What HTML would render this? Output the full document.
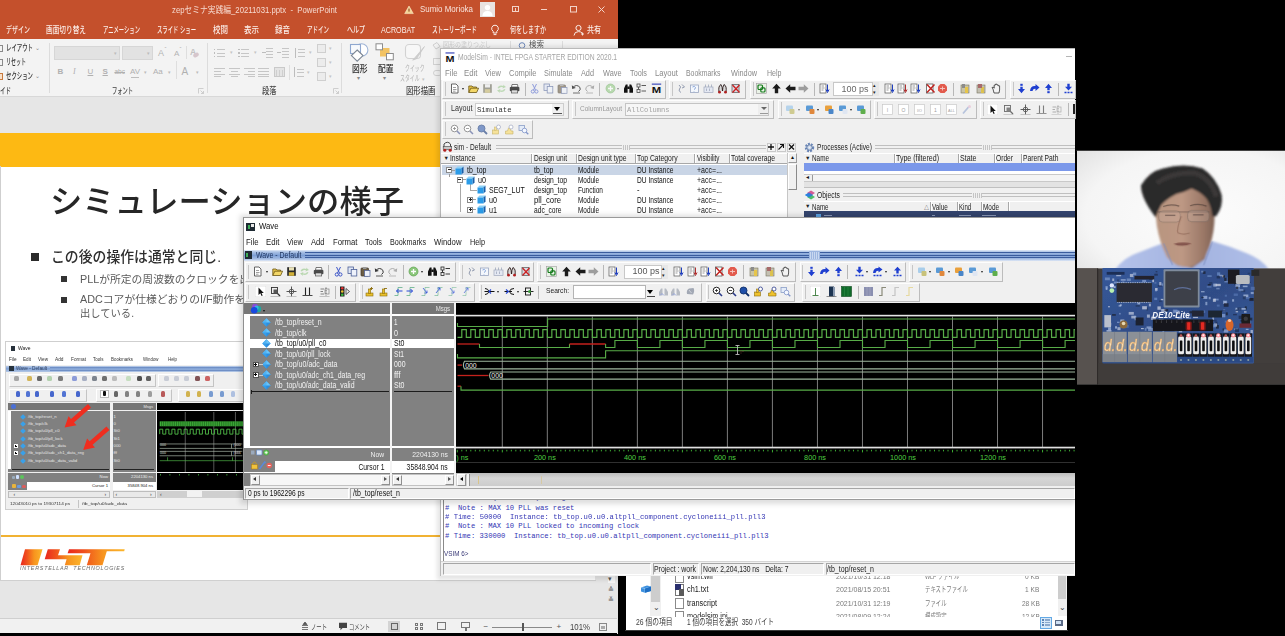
<!DOCTYPE html>
<html lang="ja"><head><meta charset="utf-8"><title>ModelSim simulation</title>
<style>
html,body{margin:0;padding:0;background:#000;}
body{width:1285px;height:636px;overflow:hidden;position:relative;font-family:"Liberation Sans","Noto Sans CJK JP",sans-serif;}
#root{position:absolute;left:0;top:0;width:1285px;height:636px;overflow:hidden;background:#000;filter:blur(0.45px);}
#root div,#root span.t,#root svg{position:absolute;}
span.t{white-space:pre;display:block;}
</style></head>
<body><div id="root">
<div style="left:0px;top:0px;width:617.5px;height:634px;background:#e6e6e6;"></div>
<div style="left:0px;top:0px;width:617.5px;height:39px;background:#c4502c;"></div>
<span class="t" style="top:4.65px;font-size:9px;line-height:11.7px;color:#f6d9cf;font-family:'Liberation Sans','Noto Sans CJK JP',sans-serif;left:172px;transform-origin:0 50%;transform:scaleX(0.8619);">zepセミナ実践編_20211031.pptx  -  PowerPoint</span>
<span class="t" style="top:4.15px;font-size:9px;line-height:11.7px;color:#f8e3db;font-family:'Liberation Sans','Noto Sans CJK JP',sans-serif;left:420px;transform-origin:0 50%;transform:scaleX(0.8829);">Sumio Morioka</span>
<svg style="left:404px;top:5px" width="10" height="10" viewBox="0 0 10 10"><path d="M5 1 L9.3 8.6 L0.7 8.6 Z" fill="#f5d596" stroke="#fbe9c8" stroke-width="0.6"/><rect x="4.5" y="3.6" width="1" height="3" fill="#7a3a16"/></svg>
<div style="left:480px;top:2px;width:15px;height:15px;background:#e9e3e1;"></div>
<svg style="left:480px;top:2px" width="15" height="15" viewBox="0 0 15 15"><circle cx="7.5" cy="5.6" r="2.7" fill="#fff"/><path d="M2.4 14 Q2.6 9 7.5 9 Q12.4 9 12.6 14 Z" fill="#fff"/></svg>
<svg style="left:508px;top:3px" width="104" height="14" viewBox="0 0 104 14"><g fill="none" stroke="#f3d3c8" stroke-width="1"><rect x="4.5" y="3.5" width="6" height="5"/><line x1="7.5" y1="5" x2="7.5" y2="8"/><line x1="33" y1="6.5" x2="39" y2="6.5"/><rect x="62.5" y="3.5" width="6" height="5.5"/><path d="M90.5 3.5 L96.5 9.5 M96.5 3.5 L90.5 9.5"/></g></svg>
<span class="t" style="top:25.28px;font-size:8.8px;line-height:11.44px;color:#fbeee9;font-family:'Liberation Sans','Noto Sans CJK JP',sans-serif;font-weight:500;left:5.8px;transform-origin:0 50%;transform:scaleX(0.6818);">デザイン</span>
<span class="t" style="top:25.28px;font-size:8.8px;line-height:11.44px;color:#fbeee9;font-family:'Liberation Sans','Noto Sans CJK JP',sans-serif;font-weight:500;left:45.8px;transform-origin:0 50%;transform:scaleX(0.7576);">画面切り替え</span>
<span class="t" style="top:25.28px;font-size:8.8px;line-height:11.44px;color:#fbeee9;font-family:'Liberation Sans','Noto Sans CJK JP',sans-serif;font-weight:500;left:102.8px;transform-origin:0 50%;transform:scaleX(0.6042);">アニメーション</span>
<span class="t" style="top:25.28px;font-size:8.8px;line-height:11.44px;color:#fbeee9;font-family:'Liberation Sans','Noto Sans CJK JP',sans-serif;font-weight:500;left:156.8px;transform-origin:0 50%;transform:scaleX(0.6091);">スライド ショー</span>
<span class="t" style="top:25.28px;font-size:8.8px;line-height:11.44px;color:#fbeee9;font-family:'Liberation Sans','Noto Sans CJK JP',sans-serif;font-weight:500;left:212.8px;transform-origin:0 50%;transform:scaleX(0.8518);">校閲</span>
<span class="t" style="top:25.28px;font-size:8.8px;line-height:11.44px;color:#fbeee9;font-family:'Liberation Sans','Noto Sans CJK JP',sans-serif;font-weight:500;left:243.8px;transform-origin:0 50%;transform:scaleX(0.8518);">表示</span>
<span class="t" style="top:25.28px;font-size:8.8px;line-height:11.44px;color:#fbeee9;font-family:'Liberation Sans','Noto Sans CJK JP',sans-serif;font-weight:500;left:274.8px;transform-origin:0 50%;transform:scaleX(0.8518);">録音</span>
<span class="t" style="top:25.28px;font-size:8.8px;line-height:11.44px;color:#fbeee9;font-family:'Liberation Sans','Noto Sans CJK JP',sans-serif;font-weight:500;left:306.8px;transform-origin:0 50%;transform:scaleX(0.6249);">アドイン</span>
<span class="t" style="top:25.28px;font-size:8.8px;line-height:11.44px;color:#fbeee9;font-family:'Liberation Sans','Noto Sans CJK JP',sans-serif;font-weight:500;left:346.8px;transform-origin:0 50%;transform:scaleX(0.6817);">ヘルプ</span>
<span class="t" style="top:25.28px;font-size:8.8px;line-height:11.44px;color:#fbeee9;font-family:'Liberation Sans','Noto Sans CJK JP',sans-serif;font-weight:500;left:380.8px;transform-origin:0 50%;transform:scaleX(0.8119);">ACROBAT</span>
<span class="t" style="top:25.28px;font-size:8.8px;line-height:11.44px;color:#fbeee9;font-family:'Liberation Sans','Noto Sans CJK JP',sans-serif;font-weight:500;left:431.8px;transform-origin:0 50%;transform:scaleX(0.6393);">ストーリーボード</span>
<span class="t" style="top:25.28px;font-size:8.8px;line-height:11.44px;color:#fbeee9;font-family:'Liberation Sans','Noto Sans CJK JP',sans-serif;font-weight:500;left:509.8px;transform-origin:0 50%;transform:scaleX(0.6819);">何をしますか</span>
<span class="t" style="top:25.28px;font-size:8.8px;line-height:11.44px;color:#fbeee9;font-family:'Liberation Sans','Noto Sans CJK JP',sans-serif;font-weight:500;left:586.8px;transform-origin:0 50%;transform:scaleX(0.7950);">共有</span>
<svg style="left:490px;top:24px" width="10" height="13" viewBox="0 0 10 13"><path d="M5 1.2 A3.3 3.3 0 0 1 6.8 7.3 L6.8 9 L3.2 9 L3.2 7.3 A3.3 3.3 0 0 1 5 1.2 Z M3.6 10.6 L6.4 10.6" fill="none" stroke="#fbeee9" stroke-width="1"/></svg>
<svg style="left:573px;top:24px" width="12" height="13" viewBox="0 0 12 13"><circle cx="5.5" cy="4" r="2.6" fill="none" stroke="#fbeee9" stroke-width="1"/><path d="M1 11.5 Q1.4 7.6 5.5 7.6 Q8 7.6 9 9" fill="none" stroke="#fbeee9" stroke-width="1"/><path d="M9.5 8.5 v3 M8 10 h3" stroke="#fbeee9" stroke-width="0.9"/></svg>
<div style="left:0px;top:39px;width:617.5px;height:58px;background:#f3f3f3;"></div>
<div style="left:0px;top:96px;width:617px;height:1px;background:#d8d8d8;"></div>
<div style="left:49px;top:43px;width:1px;height:50px;background:#dcdcdc;"></div>
<div style="left:207px;top:43px;width:1px;height:50px;background:#dcdcdc;"></div>
<div style="left:341px;top:43px;width:1px;height:50px;background:#dcdcdc;"></div>
<div style="left:0px;top:45px;width:3px;height:7px;background:#f3f3f3;border:1px solid #8a8a8a;box-sizing:border-box;border-left:none;"></div>
<div style="left:0px;top:59px;width:3px;height:7px;background:#f3f3f3;border:1px solid #8a8a8a;box-sizing:border-box;border-left:none;"></div>
<div style="left:0px;top:73px;width:3px;height:7px;background:#f8e0c8;border:1px solid #c8783c;box-sizing:border-box;border-left:none;"></div>
<span class="t" style="top:43.18px;font-size:8.8px;line-height:11.44px;color:#333;font-family:'Liberation Sans','Noto Sans CJK JP',sans-serif;font-weight:500;left:5.5px;transform-origin:0 50%;transform:scaleX(0.6136);">レイアウト</span>
<span class="t" style="top:45.0px;font-size:6px;line-height:7.8px;color:#888;font-family:'Liberation Sans','Noto Sans CJK JP',sans-serif;left:35px;transform-origin:0 50%;">⌄</span>
<span class="t" style="top:57.18px;font-size:8.8px;line-height:11.44px;color:#333;font-family:'Liberation Sans','Noto Sans CJK JP',sans-serif;font-weight:500;left:5.5px;transform-origin:0 50%;transform:scaleX(0.5681);">リセット</span>
<span class="t" style="top:71.18px;font-size:8.8px;line-height:11.44px;color:#333;font-family:'Liberation Sans','Noto Sans CJK JP',sans-serif;font-weight:500;left:5.5px;transform-origin:0 50%;transform:scaleX(0.6136);">セクション</span>
<span class="t" style="top:73.0px;font-size:6px;line-height:7.8px;color:#888;font-family:'Liberation Sans','Noto Sans CJK JP',sans-serif;left:35px;transform-origin:0 50%;">⌄</span>
<span class="t" style="top:85.78px;font-size:8.8px;line-height:11.44px;color:#444;font-family:'Liberation Sans','Noto Sans CJK JP',sans-serif;font-weight:500;left:0px;transform-origin:0 50%;transform:scaleX(0.6247);">イド</span>
<div style="left:54px;top:46px;width:66px;height:13.5px;background:#e2e2e2;border:1px solid #d6d6d6;box-sizing:border-box;"></div>
<div style="left:122px;top:46px;width:31px;height:13.5px;background:#e2e2e2;border:1px solid #d6d6d6;box-sizing:border-box;"></div>
<span class="t" style="top:49.75px;font-size:5px;line-height:6.5px;color:#bbb;font-family:'Liberation Sans','Noto Sans CJK JP',sans-serif;left:113.5px;transform-origin:0 50%;">▾</span>
<span class="t" style="top:49.75px;font-size:5px;line-height:6.5px;color:#bbb;font-family:'Liberation Sans','Noto Sans CJK JP',sans-serif;left:146.5px;transform-origin:0 50%;">▾</span>
<span class="t" style="top:47.65px;font-size:9px;line-height:11.7px;color:#b4b4b4;font-family:'Liberation Sans','Noto Sans CJK JP',sans-serif;left:158px;transform-origin:0 50%;">A</span>
<span class="t" style="top:46.1px;font-size:6px;line-height:7.8px;color:#b4b4b4;font-family:'Liberation Sans','Noto Sans CJK JP',sans-serif;left:164.5px;transform-origin:0 50%;">ˆ</span>
<span class="t" style="top:48.8px;font-size:8px;line-height:10.4px;color:#b4b4b4;font-family:'Liberation Sans','Noto Sans CJK JP',sans-serif;left:174px;transform-origin:0 50%;">A</span>
<span class="t" style="top:46.1px;font-size:6px;line-height:7.8px;color:#b4b4b4;font-family:'Liberation Sans','Noto Sans CJK JP',sans-serif;left:179.5px;transform-origin:0 50%;">ˇ</span>
<div style="left:186px;top:46px;width:1px;height:13px;background:#dedede;"></div>
<span class="t" style="top:47.48px;font-size:8.5px;line-height:11.05px;color:#c2c2c2;font-family:'Liberation Sans','Noto Sans CJK JP',sans-serif;font-weight:700;left:190px;transform-origin:0 50%;">A</span>
<div style="left:193px;top:53px;width:6px;height:4px;background:#d6c6cc;border-radius:2px;transform:rotate(-30deg);"></div>
<span class="t" style="top:66.8px;font-size:8px;line-height:10.4px;color:#b0b0b0;font-family:'Liberation Sans','Noto Sans CJK JP',sans-serif;left:57.5px;transform-origin:0 50%;font-weight:700;">B</span>
<span class="t" style="top:66.8px;font-size:8px;line-height:10.4px;color:#b0b0b0;font-family:'Liberation Sans','Noto Sans CJK JP',sans-serif;left:73px;transform-origin:0 50%;font-style:italic;font-family:'Liberation Serif',serif;">I</span>
<span class="t" style="top:66.8px;font-size:8px;line-height:10.4px;color:#b0b0b0;font-family:'Liberation Sans','Noto Sans CJK JP',sans-serif;left:87.5px;transform-origin:0 50%;text-decoration:underline;">U</span>
<span class="t" style="top:66.8px;font-size:8px;line-height:10.4px;color:#b0b0b0;font-family:'Liberation Sans','Noto Sans CJK JP',sans-serif;left:102.5px;transform-origin:0 50%;text-decoration:underline;font-weight:700;">S</span>
<span class="t" style="top:66.8px;font-size:8px;line-height:10.4px;color:#b0b0b0;font-family:'Liberation Sans','Noto Sans CJK JP',sans-serif;left:114.5px;transform-origin:0 50%;text-decoration:line-through;font-size:6.5px;">abc</span>
<span class="t" style="top:66.8px;font-size:8px;line-height:10.4px;color:#b0b0b0;font-family:'Liberation Sans','Noto Sans CJK JP',sans-serif;left:130px;transform-origin:0 50%;">AV</span>
<span class="t" style="top:66.8px;font-size:8px;line-height:10.4px;color:#b0b0b0;font-family:'Liberation Sans','Noto Sans CJK JP',sans-serif;left:153px;transform-origin:0 50%;">Aa</span>
<span class="t" style="top:66.8px;font-size:8px;line-height:10.4px;color:#b0b0b0;font-family:'Liberation Sans','Noto Sans CJK JP',sans-serif;left:181.5px;transform-origin:0 50%;font-size:10px;">A</span>
<span class="t" style="top:68.75px;font-size:5px;line-height:6.5px;color:#bbb;font-family:'Liberation Sans','Noto Sans CJK JP',sans-serif;left:143.5px;transform-origin:0 50%;">▾</span>
<span class="t" style="top:68.75px;font-size:5px;line-height:6.5px;color:#bbb;font-family:'Liberation Sans','Noto Sans CJK JP',sans-serif;left:167.5px;transform-origin:0 50%;">▾</span>
<span class="t" style="top:68.75px;font-size:5px;line-height:6.5px;color:#bbb;font-family:'Liberation Sans','Noto Sans CJK JP',sans-serif;left:195.5px;transform-origin:0 50%;">▾</span>
<div style="left:131px;top:76.5px;width:8px;height:1px;background:#bdbdbd;"></div>
<div style="left:176px;top:61px;width:1px;height:18px;background:#dedede;"></div>
<span class="t" style="top:86.08px;font-size:8.8px;line-height:11.44px;color:#444;font-family:'Liberation Sans','Noto Sans CJK JP',sans-serif;font-weight:500;left:112px;transform-origin:0 50%;transform:scaleX(0.5965);">フォント</span>
<svg style="left:198px;top:88px" width="6" height="6" viewBox="0 0 6 6"><path d="M0.5 0.5 H5.5 M0.5 0.5 V5.5 M2.5 2.5 L5.5 5.5 M5.5 3 V5.5 H3" fill="none" stroke="#c4c4c4" stroke-width="0.8"/></svg>
<div style="left:213.7px;top:48.6px;width:1.6px;height:1.6px;background:#bdbdbd;"></div>
<div style="left:216.7px;top:49.0px;width:8px;height:1px;background:#c6c6c6;"></div>
<div style="left:213.7px;top:52.1px;width:1.6px;height:1.6px;background:#bdbdbd;"></div>
<div style="left:216.7px;top:52.5px;width:8px;height:1px;background:#c6c6c6;"></div>
<div style="left:213.7px;top:55.6px;width:1.6px;height:1.6px;background:#bdbdbd;"></div>
<div style="left:216.7px;top:56.0px;width:8px;height:1px;background:#c6c6c6;"></div>
<div style="left:238.0px;top:48.6px;width:1.6px;height:1.6px;background:#bdbdbd;"></div>
<div style="left:241.0px;top:49.0px;width:8px;height:1px;background:#c6c6c6;"></div>
<div style="left:238.0px;top:52.1px;width:1.6px;height:1.6px;background:#bdbdbd;"></div>
<div style="left:241.0px;top:52.5px;width:8px;height:1px;background:#c6c6c6;"></div>
<div style="left:238.0px;top:55.6px;width:1.6px;height:1.6px;background:#bdbdbd;"></div>
<div style="left:241.0px;top:56.0px;width:8px;height:1px;background:#c6c6c6;"></div>
<div style="left:266.3px;top:48.1px;width:7px;height:1px;background:#c6c6c6;"></div>
<div style="left:266.3px;top:50.9px;width:7px;height:1px;background:#c6c6c6;"></div>
<div style="left:266.3px;top:53.7px;width:7px;height:1px;background:#c6c6c6;"></div>
<div style="left:266.3px;top:56.5px;width:7px;height:1px;background:#c6c6c6;"></div>
<div style="left:261.8px;top:51.6px;width:4px;height:1.6px;background:#bdbdbd;"></div>
<div style="left:281.5px;top:48.1px;width:7px;height:1px;background:#c6c6c6;"></div>
<div style="left:281.5px;top:50.9px;width:7px;height:1px;background:#c6c6c6;"></div>
<div style="left:281.5px;top:53.7px;width:7px;height:1px;background:#c6c6c6;"></div>
<div style="left:281.5px;top:56.5px;width:7px;height:1px;background:#c6c6c6;"></div>
<div style="left:277px;top:51.6px;width:4px;height:1.6px;background:#bdbdbd;"></div>
<div style="left:298.2px;top:49.1px;width:7px;height:1px;background:#c6c6c6;"></div>
<div style="left:298.2px;top:52.4px;width:7px;height:1px;background:#c6c6c6;"></div>
<div style="left:298.2px;top:55.7px;width:7px;height:1px;background:#c6c6c6;"></div>
<div style="left:294.7px;top:47.6px;width:1px;height:10px;background:#bdbdbd;"></div>
<span class="t" style="top:49.35px;font-size:5px;line-height:6.5px;color:#c4c4c4;font-family:'Liberation Sans','Noto Sans CJK JP',sans-serif;left:229.5px;transform-origin:0 50%;">▾</span>
<span class="t" style="top:49.35px;font-size:5px;line-height:6.5px;color:#c4c4c4;font-family:'Liberation Sans','Noto Sans CJK JP',sans-serif;left:253.5px;transform-origin:0 50%;">▾</span>
<span class="t" style="top:49.35px;font-size:5px;line-height:6.5px;color:#c4c4c4;font-family:'Liberation Sans','Noto Sans CJK JP',sans-serif;left:309px;transform-origin:0 50%;">▾</span>
<div style="left:213.7px;top:67.9px;width:11px;height:1px;background:#c6c6c6;"></div>
<div style="left:213.7px;top:70.7px;width:7px;height:1px;background:#c6c6c6;"></div>
<div style="left:213.7px;top:73.5px;width:11px;height:1px;background:#c6c6c6;"></div>
<div style="left:213.7px;top:76.30000000000001px;width:7px;height:1px;background:#c6c6c6;"></div>
<div style="left:228.9px;top:67.9px;width:11px;height:1px;background:#c6c6c6;"></div>
<div style="left:230.9px;top:70.7px;width:7px;height:1px;background:#c6c6c6;"></div>
<div style="left:228.9px;top:73.5px;width:11px;height:1px;background:#c6c6c6;"></div>
<div style="left:230.9px;top:76.30000000000001px;width:7px;height:1px;background:#c6c6c6;"></div>
<div style="left:244.1px;top:67.9px;width:11px;height:1px;background:#c6c6c6;"></div>
<div style="left:248.1px;top:70.7px;width:7px;height:1px;background:#c6c6c6;"></div>
<div style="left:244.1px;top:73.5px;width:11px;height:1px;background:#c6c6c6;"></div>
<div style="left:248.1px;top:76.30000000000001px;width:7px;height:1px;background:#c6c6c6;"></div>
<div style="left:258.3px;top:67.9px;width:11px;height:1px;background:#c6c6c6;"></div>
<div style="left:258.3px;top:70.7px;width:11px;height:1px;background:#c6c6c6;"></div>
<div style="left:258.3px;top:73.5px;width:11px;height:1px;background:#c6c6c6;"></div>
<div style="left:258.3px;top:76.30000000000001px;width:11px;height:1px;background:#c6c6c6;"></div>
<div style="left:273.5px;top:67.4px;width:11px;height:10px;background:#e4e4e4;border:1px solid #c9c9c9;box-sizing:border-box;"></div>
<div style="left:275.8px;top:70.4px;width:1px;height:6px;background:#cfcfcf;"></div>
<div style="left:278.8px;top:70.4px;width:1px;height:6px;background:#cfcfcf;"></div>
<div style="left:281.8px;top:70.4px;width:1px;height:6px;background:#cfcfcf;"></div>
<div style="left:297.2px;top:68.9px;width:7px;height:1px;background:#c6c6c6;"></div>
<div style="left:297.2px;top:72.2px;width:7px;height:1px;background:#c6c6c6;"></div>
<div style="left:297.2px;top:75.5px;width:7px;height:1px;background:#c6c6c6;"></div>
<div style="left:293.7px;top:67.4px;width:1px;height:10px;background:#bdbdbd;"></div>
<div style="left:288.5px;top:65px;width:1px;height:15px;background:#dedede;"></div>
<span class="t" style="top:69.15px;font-size:5px;line-height:6.5px;color:#c4c4c4;font-family:'Liberation Sans','Noto Sans CJK JP',sans-serif;left:306.5px;transform-origin:0 50%;">▾</span>
<div style="left:316.5px;top:43.5px;width:9px;height:9px;background:#ececec;border:1px solid #cfcfcf;box-sizing:border-box;"></div>
<span class="t" style="top:44.75px;font-size:5px;line-height:6.5px;color:#c4c4c4;font-family:'Liberation Sans','Noto Sans CJK JP',sans-serif;left:329px;transform-origin:0 50%;">▾</span>
<div style="left:316.5px;top:57.8px;width:9px;height:9px;background:#ececec;border:1px solid #cfcfcf;box-sizing:border-box;"></div>
<span class="t" style="top:59.05px;font-size:5px;line-height:6.5px;color:#c4c4c4;font-family:'Liberation Sans','Noto Sans CJK JP',sans-serif;left:329px;transform-origin:0 50%;">▾</span>
<div style="left:316.5px;top:72.0px;width:9px;height:9px;background:#ececec;border:1px solid #cfcfcf;box-sizing:border-box;"></div>
<span class="t" style="top:73.25px;font-size:5px;line-height:6.5px;color:#c4c4c4;font-family:'Liberation Sans','Noto Sans CJK JP',sans-serif;left:329px;transform-origin:0 50%;">▾</span>
<span class="t" style="top:86.08px;font-size:8.8px;line-height:11.44px;color:#444;font-family:'Liberation Sans','Noto Sans CJK JP',sans-serif;font-weight:500;left:261.7px;transform-origin:0 50%;transform:scaleX(0.8234);">段落</span>
<svg style="left:333px;top:88px" width="6" height="6" viewBox="0 0 6 6"><path d="M0.5 0.5 H5.5 M0.5 0.5 V5.5 M2.5 2.5 L5.5 5.5 M5.5 3 V5.5 H3" fill="none" stroke="#c4c4c4" stroke-width="0.8"/></svg>
<svg style="left:349px;top:42px" width="21" height="21" viewBox="0 0 21 21"><circle cx="12.6" cy="8" r="6.3" fill="#fff" stroke="#9fb4d6" stroke-width="1.1"/><rect x="1.5" y="2.5" width="10" height="9" fill="#f7f9fc" stroke="#8ea7cf" stroke-width="1.1"/><path d="M8.2 8 L14 13.6 L8.2 19.2 L2.4 13.6 Z" fill="#fff" stroke="#7d8794" stroke-width="1.1"/></svg>
<span class="t" style="top:63.88px;font-size:8.8px;line-height:11.44px;color:#2a2a2a;font-family:'Liberation Sans','Noto Sans CJK JP',sans-serif;font-weight:500;left:351.5px;transform-origin:0 50%;transform:scaleX(0.8802);">図形</span>
<span class="t" style="top:75.42px;font-size:5.5px;line-height:7.15px;color:#888;font-family:'Liberation Sans','Noto Sans CJK JP',sans-serif;left:356.5px;transform-origin:0 50%;">▾</span>
<svg style="left:375px;top:43px" width="20" height="19" viewBox="0 0 20 19"><rect x="5" y="5" width="9.5" height="8.5" fill="#f3c363"/><rect x="1" y="0.8" width="6.5" height="6" fill="#fff" stroke="#8c8c8c" stroke-width="1"/><rect x="11.5" y="10.5" width="6.8" height="6.3" fill="#fff" stroke="#8c8c8c" stroke-width="1"/></svg>
<span class="t" style="top:63.88px;font-size:8.8px;line-height:11.44px;color:#2a2a2a;font-family:'Liberation Sans','Noto Sans CJK JP',sans-serif;font-weight:500;left:377.5px;transform-origin:0 50%;transform:scaleX(0.8802);">配置</span>
<span class="t" style="top:75.42px;font-size:5.5px;line-height:7.15px;color:#888;font-family:'Liberation Sans','Noto Sans CJK JP',sans-serif;left:382.5px;transform-origin:0 50%;">▾</span>
<svg style="left:404px;top:43px" width="22" height="20" viewBox="0 0 22 20"><rect x="1.5" y="1.5" width="15" height="14" rx="3.5" fill="#f7f7f7" stroke="#d2d2d2" stroke-width="1.1"/><path d="M20.5 3.5 L11 14.5 L8.6 17.2 L12.6 15.8 Z" fill="#cfcfcf" stroke="#c2c2c2" stroke-width="0.6"/></svg>
<span class="t" style="top:64.2px;font-size:8px;line-height:10.4px;color:#b2b2b2;font-family:'Liberation Sans','Noto Sans CJK JP',sans-serif;left:404.5px;transform-origin:0 50%;transform:scaleX(0.6094);">クイック</span>
<span class="t" style="top:73.8px;font-size:8px;line-height:10.4px;color:#b2b2b2;font-family:'Liberation Sans','Noto Sans CJK JP',sans-serif;left:399.5px;transform-origin:0 50%;transform:scaleX(0.6094);">スタイル</span>
<span class="t" style="top:76.25px;font-size:5px;line-height:6.5px;color:#c2c2c2;font-family:'Liberation Sans','Noto Sans CJK JP',sans-serif;left:421.5px;transform-origin:0 50%;">▾</span>
<span class="t" style="top:86.08px;font-size:8.8px;line-height:11.44px;color:#444;font-family:'Liberation Sans','Noto Sans CJK JP',sans-serif;font-weight:500;left:405.5px;transform-origin:0 50%;transform:scaleX(0.8380);">図形描画</span>
<svg style="left:430px;top:41px" width="14" height="40" viewBox="0 0 14 40"><path d="M3 4 L7 1.5 L10 5.5 L6 8 Z" fill="none" stroke="#cfcfcf" stroke-width="1"/><rect x="3.5" y="17.5" width="7" height="6" fill="none" stroke="#d2d2d2"/><rect x="3.5" y="29.500" width="8" height="5" rx="2.500" fill="none" stroke="#d2d2d2"/></svg>
<span class="t" style="top:39.95px;font-size:7px;line-height:9.1px;color:#cdcdcd;font-family:'Liberation Sans','Noto Sans CJK JP',sans-serif;left:443px;transform-origin:0 50%;transform:scaleX(0.8559);">図形の塗りつぶし</span>
<div style="left:510px;top:41px;width:1px;height:8px;background:#dcdcdc;"></div>
<div style="left:562px;top:41px;width:1px;height:8px;background:#dcdcdc;"></div>
<svg style="left:518px;top:41px" width="9" height="8" viewBox="0 0 9 8"><circle cx="4" cy="4.500" r="2.800" fill="none" stroke="#6b86b8" stroke-width="1"/></svg>
<span class="t" style="top:40.3px;font-size:8px;line-height:10.4px;color:#555;font-family:'Liberation Sans','Noto Sans CJK JP',sans-serif;left:529px;transform-origin:0 50%;transform:scaleX(0.9375);">検索</span>
<div style="left:0px;top:97px;width:617px;height:37px;background:#e6e6e6;"></div>
<div style="left:1px;top:166px;width:594px;height:414px;background:#fff;"></div>
<div style="left:0px;top:133px;width:596px;height:33.5px;background:#fdb913;"></div>
<div style="left:0px;top:166px;width:1px;height:414px;background:#cfcfcf;"></div>
<span class="t" style="top:181.7px;font-size:32px;line-height:41.6px;color:#262626;font-family:'Liberation Sans','Noto Sans CJK JP',sans-serif;font-weight:500;left:50px;transform-origin:0 50%;transform:scaleX(1.0093);">シミュレーションの様子</span>
<div style="left:30.5px;top:253px;width:8px;height:8px;background:#2b2b2b;"></div>
<span class="t" style="top:247.57px;font-size:14.5px;line-height:18.85px;color:#2e2e2e;font-family:'Liberation Sans','Noto Sans CJK JP',sans-serif;font-weight:500;left:51px;transform-origin:0 50%;transform:scaleX(0.9549);">この後の操作は通常と同じ.</span>
<div style="left:60.5px;top:276px;width:6px;height:6px;background:#333;"></div>
<span class="t" style="top:272.98px;font-size:10.5px;line-height:13.65px;color:#5a5a5a;font-family:'Liberation Sans','Noto Sans CJK JP',sans-serif;left:80px;transform-origin:0 50%;transform:scaleX(1.0273);">PLLが所定の周波数のクロックを出力</span>
<div style="left:60.5px;top:297px;width:6px;height:6px;background:#333;"></div>
<span class="t" style="top:293.18px;font-size:10.5px;line-height:13.65px;color:#5a5a5a;font-family:'Liberation Sans','Noto Sans CJK JP',sans-serif;left:80px;transform-origin:0 50%;transform:scaleX(1.0285);">ADCコアが仕様どおりのI/F動作を</span>
<span class="t" style="top:306.68px;font-size:10.5px;line-height:13.65px;color:#5a5a5a;font-family:'Liberation Sans','Noto Sans CJK JP',sans-serif;left:80px;transform-origin:0 50%;transform:scaleX(0.9799);">出している.</span>
<div style="left:5px;top:341px;width:242.5px;height:168.5px;background:#f0f0f0;border:1px solid #cfcfcf;box-sizing:border-box;"></div>
<div style="left:6px;top:342px;width:240.5px;height:23px;background:#fff;"></div>
<div style="left:10.5px;top:345.5px;width:4.5px;height:5px;background:#27313b;"></div>
<span class="t" style="top:345.12px;font-size:5.2px;line-height:6.76px;color:#222;font-family:'Liberation Sans','Noto Sans CJK JP',sans-serif;left:18px;transform-origin:0 50%;transform:scaleX(0.9558);">Wave</span>
<span class="t" style="top:355.92px;font-size:5.2px;line-height:6.76px;color:#333;font-family:'Liberation Sans','Noto Sans CJK JP',sans-serif;left:9px;transform-origin:0 50%;transform:scaleX(0.8972);">File</span>
<span class="t" style="top:355.92px;font-size:5.2px;line-height:6.76px;color:#333;font-family:'Liberation Sans','Noto Sans CJK JP',sans-serif;left:23px;transform-origin:0 50%;transform:scaleX(0.8935);">Edit</span>
<span class="t" style="top:355.92px;font-size:5.2px;line-height:6.76px;color:#333;font-family:'Liberation Sans','Noto Sans CJK JP',sans-serif;left:37.6px;transform-origin:0 50%;transform:scaleX(0.8964);">View</span>
<span class="t" style="top:355.92px;font-size:5.2px;line-height:6.76px;color:#333;font-family:'Liberation Sans','Noto Sans CJK JP',sans-serif;left:54.7px;transform-origin:0 50%;transform:scaleX(0.9205);">Add</span>
<span class="t" style="top:355.92px;font-size:5.2px;line-height:6.76px;color:#333;font-family:'Liberation Sans','Noto Sans CJK JP',sans-serif;left:70.5px;transform-origin:0 50%;transform:scaleX(0.9125);">Format</span>
<span class="t" style="top:355.92px;font-size:5.2px;line-height:6.76px;color:#333;font-family:'Liberation Sans','Noto Sans CJK JP',sans-serif;left:93px;transform-origin:0 50%;transform:scaleX(0.8671);">Tools</span>
<span class="t" style="top:355.92px;font-size:5.2px;line-height:6.76px;color:#333;font-family:'Liberation Sans','Noto Sans CJK JP',sans-serif;left:110.8px;transform-origin:0 50%;transform:scaleX(0.8477);">Bookmarks</span>
<span class="t" style="top:355.92px;font-size:5.2px;line-height:6.76px;color:#333;font-family:'Liberation Sans','Noto Sans CJK JP',sans-serif;left:142.5px;transform-origin:0 50%;transform:scaleX(0.8400);">Window</span>
<span class="t" style="top:355.92px;font-size:5.2px;line-height:6.76px;color:#333;font-family:'Liberation Sans','Noto Sans CJK JP',sans-serif;left:167.6px;transform-origin:0 50%;transform:scaleX(0.8433);">Help</span>
<div style="left:6px;top:365.5px;width:240.5px;height:6.5px;background:linear-gradient(#b9cdea,#7fa0d4 45%,#b4c8e6);"></div>
<div style="left:9px;top:366.2px;width:5px;height:5px;background:#26323c;"></div>
<span class="t" style="top:365.81px;font-size:4.6px;line-height:5.98px;color:#2b3d5e;font-family:'Liberation Sans','Noto Sans CJK JP',sans-serif;left:16px;transform-origin:0 50%;transform:scaleX(1.0259);">Wave - Default</span>
<div style="left:50px;top:367.4px;width:196px;height:0.8px;background:#6f8fc6;"></div>
<div style="left:50px;top:369.6px;width:196px;height:0.8px;background:#6f8fc6;"></div>
<div style="left:6px;top:372.5px;width:240.5px;height:30px;background:#f0f0f0;"></div>
<div style="left:9px;top:373.5px;width:147px;height:13px;background:transparent;border:0.6px solid #fff;border-right-color:#c4c4c4;border-bottom-color:#c4c4c4;box-sizing:border-box;"></div>
<div style="left:158px;top:373.5px;width:56px;height:13px;background:transparent;border:0.6px solid #fff;border-right-color:#c4c4c4;border-bottom-color:#c4c4c4;box-sizing:border-box;"></div>
<div style="left:9px;top:388.5px;width:78px;height:13px;background:transparent;border:0.6px solid #fff;border-right-color:#c4c4c4;border-bottom-color:#c4c4c4;box-sizing:border-box;"></div>
<div style="left:96px;top:388.5px;width:76px;height:13px;background:transparent;border:0.6px solid #fff;border-right-color:#c4c4c4;border-bottom-color:#c4c4c4;box-sizing:border-box;"></div>
<div style="left:178px;top:388.5px;width:68px;height:13px;background:transparent;border:0.6px solid #fff;border-right-color:#c4c4c4;border-bottom-color:#c4c4c4;box-sizing:border-box;"></div>
<div style="left:13.50px;top:375.65px;width:5px;height:5.5px;background:#8d8d8d;border-radius:1.5px;opacity:0.75;"></div>
<div style="left:26.50px;top:375.65px;width:5px;height:5.5px;background:#c9a227;border-radius:1.5px;opacity:0.75;"></div>
<div style="left:36.50px;top:375.65px;width:5px;height:5.5px;background:#3b3b3b;border-radius:1.5px;opacity:0.75;"></div>
<div style="left:46.50px;top:375.65px;width:5px;height:5.5px;background:#9fc79a;border-radius:1.5px;opacity:0.75;"></div>
<div style="left:57.50px;top:375.65px;width:5px;height:5.5px;background:#555;border-radius:1.5px;opacity:0.75;"></div>
<div style="left:71.50px;top:375.65px;width:5px;height:5.5px;background:#6b7fd0;border-radius:1.5px;opacity:0.75;"></div>
<div style="left:81.50px;top:375.65px;width:5px;height:5.5px;background:#8f99b4;border-radius:1.5px;opacity:0.75;"></div>
<div style="left:91.50px;top:375.65px;width:5px;height:5.5px;background:#57606e;border-radius:1.5px;opacity:0.75;"></div>
<div style="left:101.50px;top:375.65px;width:5px;height:5.5px;background:#444;border-radius:1.5px;opacity:0.75;"></div>
<div style="left:111.50px;top:375.65px;width:5px;height:5.5px;background:#a9a9a9;border-radius:1.5px;opacity:0.75;"></div>
<div style="left:125.50px;top:375.65px;width:5px;height:5.5px;background:#b8d8b0;border-radius:1.5px;opacity:0.75;"></div>
<div style="left:136.50px;top:375.65px;width:5px;height:5.5px;background:#1a1a1a;border-radius:1.5px;opacity:0.75;"></div>
<div style="left:145.50px;top:375.65px;width:5px;height:5.5px;background:#333;border-radius:1.5px;opacity:0.75;"></div>
<div style="left:163.50px;top:375.65px;width:5px;height:5.5px;background:#b9bfcc;border-radius:1.5px;opacity:0.75;"></div>
<div style="left:173.50px;top:375.65px;width:5px;height:5.5px;background:#b9bfcc;border-radius:1.5px;opacity:0.75;"></div>
<div style="left:183.50px;top:375.65px;width:5px;height:5.5px;background:#b9bfcc;border-radius:1.5px;opacity:0.75;"></div>
<div style="left:194.50px;top:375.65px;width:5px;height:5.5px;background:#5c1f22;border-radius:1.5px;opacity:0.75;"></div>
<div style="left:204.50px;top:375.65px;width:5px;height:5.5px;background:#c03434;border-radius:1.5px;opacity:0.75;"></div>
<div style="left:15.75px;top:390.60px;width:4.5px;height:6px;background:#1d45c4;border-radius:1.5px;opacity:0.8;"></div>
<div style="left:25.75px;top:390.60px;width:4.5px;height:6px;background:#2a55cc;border-radius:1.5px;opacity:0.8;"></div>
<div style="left:34.75px;top:390.60px;width:4.5px;height:6px;background:#1d45c4;border-radius:1.5px;opacity:0.8;"></div>
<div style="left:49.75px;top:390.60px;width:4.5px;height:6px;background:#1d45c4;border-radius:1.5px;opacity:0.8;"></div>
<div style="left:61.75px;top:390.60px;width:4.5px;height:6px;background:#2a55cc;border-radius:1.5px;opacity:0.8;"></div>
<div style="left:75.75px;top:390.60px;width:4.5px;height:6px;background:#1d45c4;border-radius:1.5px;opacity:0.8;"></div>
<div style="left:101.75px;top:390.60px;width:4.5px;height:6px;background:#111;border-radius:1.5px;opacity:0.8;"></div>
<div style="left:113.75px;top:390.60px;width:4.5px;height:6px;background:#444;border-radius:1.5px;opacity:0.8;"></div>
<div style="left:124.75px;top:390.60px;width:4.5px;height:6px;background:#666;border-radius:1.5px;opacity:0.8;"></div>
<div style="left:135.75px;top:390.60px;width:4.5px;height:6px;background:#666;border-radius:1.5px;opacity:0.8;"></div>
<div style="left:147.75px;top:390.60px;width:4.5px;height:6px;background:#888;border-radius:1.5px;opacity:0.8;"></div>
<div style="left:160.75px;top:390.60px;width:4.5px;height:6px;background:#a33;border-radius:1.5px;opacity:0.8;"></div>
<div style="left:185.75px;top:390.60px;width:4.5px;height:6px;background:#c9a227;border-radius:1.5px;opacity:0.8;"></div>
<div style="left:196.75px;top:390.60px;width:4.5px;height:6px;background:#c9a227;border-radius:1.5px;opacity:0.8;"></div>
<div style="left:208.75px;top:390.60px;width:4.5px;height:6px;background:#5a86c8;border-radius:1.5px;opacity:0.8;"></div>
<div style="left:219.75px;top:390.60px;width:4.5px;height:6px;background:#5a86c8;border-radius:1.5px;opacity:0.8;"></div>
<div style="left:230.75px;top:390.60px;width:4.5px;height:6px;background:#9db4dc;border-radius:1.5px;opacity:0.8;"></div>
<div style="left:100px;top:389.5px;width:8.5px;height:8.5px;background:#fff;border:0.5px solid #bbb;box-sizing:border-box;"></div>
<div style="left:103.05px;top:391.30px;width:2.5px;height:5px;background:#111;border-radius:1px;opacity:1;"></div>
<div style="left:8.2px;top:402.5px;width:102.3px;height:7.5px;background:#767676;"></div>
<div style="left:112.6px;top:402.5px;width:43px;height:7.5px;background:#767676;"></div>
<div style="left:157px;top:402.5px;width:90px;height:7.5px;background:#000;"></div>
<span class="t" style="top:403.7px;font-size:4px;line-height:5.2px;color:#e8e8e8;font-family:'Liberation Sans','Noto Sans CJK JP',sans-serif;right:1132px;transform-origin:100% 50%;">Msgs</span>
<div style="left:11.00px;top:403.80px;width:5px;height:5px;background:#4a6fd6;border-radius:2.5px;opacity:1;"></div>
<div style="left:8.2px;top:411px;width:102.3px;height:61px;background:#808080;"></div>
<div style="left:112.6px;top:411px;width:43px;height:61px;background:#808080;"></div>
<div style="left:157px;top:411px;width:90px;height:61px;background:#000;"></div>
<div style="left:8.2px;top:411px;width:2.8px;height:58px;background:#fff;"></div>
<div style="left:20.50px;top:414.60px;width:4px;height:4px;background:#3aa0e8;border-radius:0px;transform:rotate(45deg);"></div>
<span class="t" style="top:413.81px;font-size:4.3px;line-height:5.59px;color:#e6e6e6;font-family:'Liberation Sans','Noto Sans CJK JP',sans-serif;left:28px;transform-origin:0 50%;">/tb_top/reset_n</span>
<span class="t" style="top:413.81px;font-size:4.3px;line-height:5.59px;color:#e6e6e6;font-family:'Liberation Sans','Noto Sans CJK JP',sans-serif;left:113.5px;transform-origin:0 50%;">1</span>
<div style="left:20.50px;top:421.93px;width:4px;height:4px;background:#3aa0e8;border-radius:0px;transform:rotate(45deg);"></div>
<span class="t" style="top:421.13px;font-size:4.3px;line-height:5.59px;color:#e6e6e6;font-family:'Liberation Sans','Noto Sans CJK JP',sans-serif;left:28px;transform-origin:0 50%;">/tb_top/clk</span>
<span class="t" style="top:421.13px;font-size:4.3px;line-height:5.59px;color:#e6e6e6;font-family:'Liberation Sans','Noto Sans CJK JP',sans-serif;left:113.5px;transform-origin:0 50%;">0</span>
<div style="left:20.50px;top:429.26px;width:4px;height:4px;background:#3aa0e8;border-radius:0px;transform:rotate(45deg);"></div>
<span class="t" style="top:428.47px;font-size:4.3px;line-height:5.59px;color:#e6e6e6;font-family:'Liberation Sans','Noto Sans CJK JP',sans-serif;left:28px;transform-origin:0 50%;">/tb_top/u0/pll_c0</span>
<span class="t" style="top:428.47px;font-size:4.3px;line-height:5.59px;color:#e6e6e6;font-family:'Liberation Sans','Noto Sans CJK JP',sans-serif;left:113.5px;transform-origin:0 50%;">St0</span>
<div style="left:20.50px;top:436.59px;width:4px;height:4px;background:#3aa0e8;border-radius:0px;transform:rotate(45deg);"></div>
<span class="t" style="top:435.8px;font-size:4.3px;line-height:5.59px;color:#e6e6e6;font-family:'Liberation Sans','Noto Sans CJK JP',sans-serif;left:28px;transform-origin:0 50%;">/tb_top/u0/pll_lock</span>
<span class="t" style="top:435.8px;font-size:4.3px;line-height:5.59px;color:#e6e6e6;font-family:'Liberation Sans','Noto Sans CJK JP',sans-serif;left:113.5px;transform-origin:0 50%;">St1</span>
<div style="left:20.50px;top:443.92px;width:4px;height:4px;background:#3aa0e8;border-radius:0px;transform:rotate(45deg);"></div>
<span class="t" style="top:443.12px;font-size:4.3px;line-height:5.59px;color:#e6e6e6;font-family:'Liberation Sans','Noto Sans CJK JP',sans-serif;left:28px;transform-origin:0 50%;">/tb_top/u0/adc_data</span>
<span class="t" style="top:443.12px;font-size:4.3px;line-height:5.59px;color:#e6e6e6;font-family:'Liberation Sans','Noto Sans CJK JP',sans-serif;left:113.5px;transform-origin:0 50%;">000</span>
<div style="left:13.5px;top:443.92px;width:4px;height:4px;background:#fff;"></div>
<div style="left:14.5px;top:445.62px;width:2px;height:0.7px;background:#000;"></div>
<div style="left:15.2px;top:444.92px;width:0.7px;height:2px;background:#000;"></div>
<div style="left:20.50px;top:451.25px;width:4px;height:4px;background:#3aa0e8;border-radius:0px;transform:rotate(45deg);"></div>
<span class="t" style="top:450.45px;font-size:4.3px;line-height:5.59px;color:#e6e6e6;font-family:'Liberation Sans','Noto Sans CJK JP',sans-serif;left:28px;transform-origin:0 50%;">/tb_top/u0/adc_ch1_data_reg</span>
<span class="t" style="top:450.45px;font-size:4.3px;line-height:5.59px;color:#e6e6e6;font-family:'Liberation Sans','Noto Sans CJK JP',sans-serif;left:113.5px;transform-origin:0 50%;">fff</span>
<div style="left:13.5px;top:451.25px;width:4px;height:4px;background:#fff;"></div>
<div style="left:14.5px;top:452.95px;width:2px;height:0.7px;background:#000;"></div>
<div style="left:15.2px;top:452.25px;width:0.7px;height:2px;background:#000;"></div>
<div style="left:20.50px;top:458.58px;width:4px;height:4px;background:#3aa0e8;border-radius:0px;transform:rotate(45deg);"></div>
<span class="t" style="top:457.79px;font-size:4.3px;line-height:5.59px;color:#e6e6e6;font-family:'Liberation Sans','Noto Sans CJK JP',sans-serif;left:28px;transform-origin:0 50%;">/tb_top/u0/adc_data_valid</span>
<span class="t" style="top:457.79px;font-size:4.3px;line-height:5.59px;color:#e6e6e6;font-family:'Liberation Sans','Noto Sans CJK JP',sans-serif;left:113.5px;transform-origin:0 50%;">St0</span>
<div style="left:12px;top:469px;width:97px;height:0.8px;background:#222;"></div>
<div style="left:113.5px;top:469px;width:40px;height:0.8px;background:#222;"></div>
<svg style="left:157px;top:412px" width="90" height="60" viewBox="0 0 90 61"><g stroke="#7d7d7d" stroke-width="0.7"><line x1="28" y1="0" x2="28" y2="61"/><line x1="57" y1="0" x2="57" y2="61"/><line x1="79" y1="0" x2="79" y2="61"/></g><rect x="2" y="9.500" width="88" height="5" fill="#3fae3a"/><g stroke="#0b3d0b" stroke-width="0.5"><line x1="3.9" y1="9.500" x2="3.9" y2="14.500"/><line x1="5.8" y1="9.500" x2="5.8" y2="14.500"/><line x1="7.7" y1="9.500" x2="7.7" y2="14.500"/><line x1="9.6" y1="9.500" x2="9.6" y2="14.500"/><line x1="11.5" y1="9.500" x2="11.5" y2="14.500"/><line x1="13.4" y1="9.500" x2="13.4" y2="14.500"/><line x1="15.3" y1="9.500" x2="15.3" y2="14.500"/><line x1="17.2" y1="9.500" x2="17.2" y2="14.500"/><line x1="19.1" y1="9.500" x2="19.1" y2="14.500"/><line x1="21.0" y1="9.500" x2="21.0" y2="14.500"/><line x1="22.9" y1="9.500" x2="22.9" y2="14.500"/><line x1="24.8" y1="9.500" x2="24.8" y2="14.500"/><line x1="26.7" y1="9.500" x2="26.7" y2="14.500"/><line x1="28.6" y1="9.500" x2="28.6" y2="14.500"/><line x1="30.5" y1="9.500" x2="30.5" y2="14.500"/><line x1="32.4" y1="9.500" x2="32.4" y2="14.500"/><line x1="34.3" y1="9.500" x2="34.3" y2="14.500"/><line x1="36.2" y1="9.500" x2="36.2" y2="14.500"/><line x1="38.1" y1="9.500" x2="38.1" y2="14.500"/><line x1="40.0" y1="9.500" x2="40.0" y2="14.500"/><line x1="41.9" y1="9.500" x2="41.9" y2="14.500"/><line x1="43.8" y1="9.500" x2="43.8" y2="14.500"/><line x1="45.7" y1="9.500" x2="45.7" y2="14.500"/><line x1="47.6" y1="9.500" x2="47.6" y2="14.500"/><line x1="49.5" y1="9.500" x2="49.5" y2="14.500"/><line x1="51.4" y1="9.500" x2="51.4" y2="14.500"/><line x1="53.3" y1="9.500" x2="53.3" y2="14.500"/><line x1="55.2" y1="9.500" x2="55.2" y2="14.500"/><line x1="57.1" y1="9.500" x2="57.1" y2="14.500"/><line x1="59.0" y1="9.500" x2="59.0" y2="14.500"/><line x1="60.9" y1="9.500" x2="60.9" y2="14.500"/><line x1="62.8" y1="9.500" x2="62.8" y2="14.500"/><line x1="64.7" y1="9.500" x2="64.7" y2="14.500"/><line x1="66.6" y1="9.500" x2="66.6" y2="14.500"/><line x1="68.5" y1="9.500" x2="68.5" y2="14.500"/><line x1="70.4" y1="9.500" x2="70.4" y2="14.500"/><line x1="72.3" y1="9.500" x2="72.3" y2="14.500"/><line x1="74.2" y1="9.500" x2="74.2" y2="14.500"/><line x1="76.1" y1="9.500" x2="76.1" y2="14.500"/><line x1="78.0" y1="9.500" x2="78.0" y2="14.500"/><line x1="79.9" y1="9.500" x2="79.9" y2="14.500"/><line x1="81.8" y1="9.500" x2="81.8" y2="14.500"/><line x1="83.7" y1="9.500" x2="83.7" y2="14.500"/><line x1="85.6" y1="9.500" x2="85.6" y2="14.500"/><line x1="87.5" y1="9.500" x2="87.5" y2="14.500"/><line x1="89.4" y1="9.500" x2="89.4" y2="14.500"/></g><path d="M2 22.5 V17.5 H5.1 V22.5 H8.2 V17.5 H11.3 V22.5 H14.4 V17.5 H17.5 V22.5 H20.6 V17.5 H23.7 V22.5 H26.8 V17.5 H29.9 V22.5 H33.0 V17.5 H36.1 V22.5 H39.2 V17.5 H42.3 V22.5 H45.4 V17.5 H48.5 V22.5 H51.6 V17.5 H54.7 V22.5 H57.8 V17.5 H60.9 V22.5 H64.0 V17.5 H67.1 V22.5 H70.2 V17.5 H73.3 V22.5 H76.4 V17.5 H79.5 V22.5 H82.6 V17.5 H85.7 V22.5 H88.8 V17.5 H91.9 V22.5 H95.0 " fill="none" stroke="#52c24a" stroke-width="0.9"/><g fill="none" stroke="#a9b8a9" stroke-width="0.7"><path d="M2 32.5 H86 M2 37 H86 M75 32.5 V37"/><path d="M2 40 H86 M2 44.500 H86 M75 40 V44.500"/></g><path d="M2 49.500 H90 M10 49.500 V46 M76 49.500 V46" stroke="#4fb548" stroke-width="0.7" fill="none"/></svg>
<span class="t" style="top:443.26px;font-size:3.6px;line-height:4.68px;color:#ddd;font-family:'Liberation Sans','Noto Sans CJK JP',sans-serif;left:160px;transform-origin:0 50%;">000</span>
<span class="t" style="top:450.66px;font-size:3.6px;line-height:4.68px;color:#ddd;font-family:'Liberation Sans','Noto Sans CJK JP',sans-serif;left:160px;transform-origin:0 50%;">000</span>
<span class="t" style="top:443.26px;font-size:3.6px;line-height:4.68px;color:#ddd;font-family:'Liberation Sans','Noto Sans CJK JP',sans-serif;left:233.5px;transform-origin:0 50%;">(000</span>
<span class="t" style="top:450.66px;font-size:3.6px;line-height:4.68px;color:#ddd;font-family:'Liberation Sans','Noto Sans CJK JP',sans-serif;left:233.5px;transform-origin:0 50%;">(666</span>
<div style="left:8.2px;top:473px;width:102.3px;height:8.5px;background:#808080;"></div>
<div style="left:112.6px;top:473px;width:43px;height:8.5px;background:#808080;"></div>
<div style="left:157px;top:473px;width:90px;height:17px;background:#000;"></div>
<div style="left:8.2px;top:482px;width:102.3px;height:8px;background:#808080;"></div>
<div style="left:27px;top:482px;width:83px;height:8px;background:#fff;"></div>
<div style="left:112.6px;top:482px;width:43px;height:8px;background:#fff;"></div>
<div style="left:12.00px;top:475.50px;width:3px;height:3px;background:#9ab;border-radius:1px;opacity:1;"></div>
<div style="left:15.75px;top:475.25px;width:3.5px;height:3.5px;background:#cfe0ff;border-radius:1px;opacity:1;"></div>
<div style="left:20.25px;top:475.25px;width:3.5px;height:3.5px;background:#5cc45c;border-radius:2px;opacity:1;"></div>
<div style="left:12.00px;top:484.30px;width:4px;height:4px;background:#e9b43c;border-radius:1px;opacity:1;"></div>
<div style="left:17.25px;top:484.55px;width:3.5px;height:3.5px;background:#6a9be0;border-radius:1px;opacity:1;"></div>
<div style="left:22.25px;top:484.55px;width:3.5px;height:3.5px;background:#e05a5a;border-radius:2px;opacity:1;"></div>
<span class="t" style="top:474.27px;font-size:4.2px;line-height:5.46px;color:#eee;font-family:'Liberation Sans','Noto Sans CJK JP',sans-serif;right:1177px;transform-origin:100% 50%;">Now</span>
<span class="t" style="top:474.27px;font-size:4.2px;line-height:5.46px;color:#eee;font-family:'Liberation Sans','Noto Sans CJK JP',sans-serif;right:1132px;transform-origin:100% 50%;">2204130 ns</span>
<span class="t" style="top:483.47px;font-size:4.2px;line-height:5.46px;color:#222;font-family:'Liberation Sans','Noto Sans CJK JP',sans-serif;right:1177px;transform-origin:100% 50%;">Cursor 1</span>
<span class="t" style="top:483.47px;font-size:4.2px;line-height:5.46px;color:#222;font-family:'Liberation Sans','Noto Sans CJK JP',sans-serif;right:1132px;transform-origin:100% 50%;">35848.904 ns</span>
<svg style="left:157px;top:473px" width="90" height="4" viewBox="0 0 90 4"><g fill="#43b53c"><rect x="3.0" y="1" width="0.8" height="1.500"/><rect x="12.5" y="1" width="0.8" height="1.500"/><rect x="22.0" y="1" width="0.8" height="1.500"/><rect x="31.5" y="1" width="0.8" height="1.500"/><rect x="41.0" y="1" width="0.8" height="1.500"/><rect x="50.5" y="1" width="0.8" height="1.500"/><rect x="60.0" y="1" width="0.8" height="1.500"/><rect x="69.5" y="1" width="0.8" height="1.500"/><rect x="79.0" y="1" width="0.8" height="1.500"/><rect x="88.5" y="1" width="0.8" height="1.500"/></g></svg>
<div style="left:8.2px;top:490.5px;width:102.3px;height:7.5px;background:#e9e9e9;border:0.5px solid #bdbdbd;box-sizing:border-box;"></div>
<div style="left:112.6px;top:490.5px;width:43px;height:7.5px;background:#e9e9e9;border:0.5px solid #bdbdbd;box-sizing:border-box;"></div>
<div style="left:157px;top:490.5px;width:90px;height:7.5px;background:#cfcfcf;"></div>
<div style="left:187px;top:491.2px;width:15px;height:6px;background:#f2f2f2;"></div>
<span class="t" style="top:491.05px;font-size:5px;line-height:6.5px;color:#333;font-family:'Liberation Sans','Noto Sans CJK JP',sans-serif;left:13.5px;transform-origin:0 50%;">‹</span>
<span class="t" style="top:491.05px;font-size:5px;line-height:6.5px;color:#333;font-family:'Liberation Sans','Noto Sans CJK JP',sans-serif;left:104.5px;transform-origin:0 50%;">›</span>
<span class="t" style="top:491.05px;font-size:5px;line-height:6.5px;color:#333;font-family:'Liberation Sans','Noto Sans CJK JP',sans-serif;left:115.5px;transform-origin:0 50%;">‹</span>
<span class="t" style="top:491.05px;font-size:5px;line-height:6.5px;color:#333;font-family:'Liberation Sans','Noto Sans CJK JP',sans-serif;left:150px;transform-origin:0 50%;">›</span>
<span class="t" style="top:491.05px;font-size:5px;line-height:6.5px;color:#333;font-family:'Liberation Sans','Noto Sans CJK JP',sans-serif;left:160px;transform-origin:0 50%;">‹</span>
<div style="left:8.5px;top:498.5px;width:238px;height:9.5px;background:#f0f0f0;"></div>
<span class="t" style="top:501.4px;font-size:4px;line-height:5.2px;color:#333;font-family:'Liberation Sans','Noto Sans CJK JP',sans-serif;left:10px;transform-origin:0 50%;transform:scaleX(1.1643);">12043010 ps to 19307114 ps</span>
<span class="t" style="top:501.4px;font-size:4px;line-height:5.2px;color:#333;font-family:'Liberation Sans','Noto Sans CJK JP',sans-serif;left:82px;transform-origin:0 50%;transform:scaleX(1.2721);">/tb_top/u0/adc_data</span>
<div style="left:78px;top:499.5px;width:0.6px;height:8px;background:#c4c4c4;"></div>
<svg style="left:55px;top:398px" width="60" height="60" viewBox="0 0 60 60"><g fill="#ef2d1f"><path d="M33.0 6.1 L16.0 21.0 L13.5 18.2 L9.6 29.6 L21.5 27.2 L19.0 24.4 L36.0 9.5 Z"/><path d="M51.5 28.5 L34.6 43.3 L32.1 40.6 L28.2 52.0 L40.0 49.6 L37.6 46.8 L54.5 31.9 Z"/></g></svg>
<div style="left:1px;top:534.7px;width:594px;height:2.8px;background:#f1b232;"></div>
<svg style="left:18px;top:546px" width="112" height="28" viewBox="0 0 112 28"><defs><linearGradient id="lg1" x1="0" x2="1"><stop offset="0" stop-color="#e8261e"/><stop offset="0.3" stop-color="#f0531c"/><stop offset="0.620" stop-color="#f7941e"/><stop offset="1" stop-color="#fbb62c"/></linearGradient></defs><g fill="url(#lg1)"><path d="M7 3.200 H24.500 L19.600 19.300 H2.500 Z"/><path d="M29.800 3.200 H42 L40 9.300 H64.500 L61.700 19.300 H46.800 L48.600 13.300 H26.700 Z"/><path d="M51 3.200 H106.700 L106.200 5.300 H88.800 L84.500 19.300 H68.800 L72.500 7.200 H49.600 Z"/></g></svg>
<span class="t" style="top:566.38px;font-size:4.5px;line-height:5.85px;color:#6c6c6c;font-family:'Liberation Sans','Noto Sans CJK JP',sans-serif;left:20.4px;transform-origin:0 50%;transform:scaleX(1.2017);font-style:italic;letter-spacing:0.6px;">INTERSTELLAR  TECHNOLOGIES</span>
<div style="left:0px;top:580px;width:596px;height:1px;background:#d0d0d0;"></div>
<div style="left:596px;top:133px;width:21px;height:448px;background:#e6e6e6;"></div>
<div style="left:607.8px;top:576px;width:7.7px;height:7.2px;background:#f6f6f6;"></div>
<span class="t" style="top:575.07px;font-size:6.5px;line-height:8.45px;color:#555;font-family:'Liberation Sans','Noto Sans CJK JP',sans-serif;left:608px;transform-origin:0 50%;">▾</span>
<span class="t" style="top:585.77px;font-size:6.5px;line-height:8.45px;color:#555;font-family:'Liberation Sans','Noto Sans CJK JP',sans-serif;left:608px;transform-origin:0 50%;">≙</span>
<span class="t" style="top:596.27px;font-size:6.5px;line-height:8.45px;color:#555;font-family:'Liberation Sans','Noto Sans CJK JP',sans-serif;left:608px;transform-origin:0 50%;">≚</span>
<div style="left:0px;top:617.5px;width:617px;height:1.5px;background:#cfcfcf;"></div>
<div style="left:0px;top:619px;width:617px;height:14.5px;background:#f1f1f1;"></div>
<div style="left:0px;top:633.3px;width:617px;height:3px;background:#000;"></div>
<svg style="left:300px;top:621px" width="10" height="10" viewBox="0 0 10 10"><path d="M2 8.500 H8 M2 6.500 H8 M2 4.500 H8 M5 1 L7 3.500 H3 Z" stroke="#555" fill="#555" stroke-width="0.8"/></svg>
<span class="t" style="top:622.62px;font-size:7.5px;line-height:9.75px;color:#444;font-family:'Liberation Sans','Noto Sans CJK JP',sans-serif;left:311px;transform-origin:0 50%;transform:scaleX(0.7111);">ノート</span>
<svg style="left:338px;top:621.500px" width="10" height="9" viewBox="0 0 10 9"><path d="M1 0.800 H9 V6 H4.500 L2.500 8.200 V6 H1 Z" fill="#444"/></svg>
<span class="t" style="top:622.62px;font-size:7.5px;line-height:9.75px;color:#444;font-family:'Liberation Sans','Noto Sans CJK JP',sans-serif;left:349px;transform-origin:0 50%;transform:scaleX(0.7000);">コメント</span>
<div style="left:388px;top:620.5px;width:12px;height:11.5px;background:#d4d4d4;"></div>
<div style="left:390.5px;top:623px;width:7px;height:6.5px;background:transparent;border:1px solid #666;box-sizing:border-box;"></div>
<div style="left:415.0px;top:622.5px;width:3.2px;height:3.2px;background:transparent;border:0.8px solid #777;box-sizing:border-box;"></div>
<div style="left:415.0px;top:627.0px;width:3.2px;height:3.2px;background:transparent;border:0.8px solid #777;box-sizing:border-box;"></div>
<div style="left:419.5px;top:622.5px;width:3.2px;height:3.2px;background:transparent;border:0.8px solid #777;box-sizing:border-box;"></div>
<div style="left:419.5px;top:627.0px;width:3.2px;height:3.2px;background:transparent;border:0.8px solid #777;box-sizing:border-box;"></div>
<div style="left:437px;top:622px;width:9px;height:8px;background:transparent;border:1px solid #777;box-sizing:border-box;"></div>
<div style="left:461px;top:622px;width:9px;height:6px;background:transparent;border:1px solid #777;box-sizing:border-box;"></div>
<div style="left:464.5px;top:628px;width:2px;height:2.5px;background:#777;"></div>
<span class="t" style="top:621.8px;font-size:8px;line-height:10.4px;color:#555;font-family:'Liberation Sans','Noto Sans CJK JP',sans-serif;left:483.5px;transform-origin:0 50%;">−</span>
<div style="left:492px;top:627px;width:60px;height:1px;background:#8a8a8a;"></div>
<div style="left:521.7px;top:623.2px;width:2px;height:8px;background:#555;"></div>
<span class="t" style="top:621.8px;font-size:8px;line-height:10.4px;color:#555;font-family:'Liberation Sans','Noto Sans CJK JP',sans-serif;left:556.5px;transform-origin:0 50%;">+</span>
<span class="t" style="top:622.21px;font-size:8.3px;line-height:10.79px;color:#444;font-family:'Liberation Sans','Noto Sans CJK JP',sans-serif;left:570px;transform-origin:0 50%;transform:scaleX(0.9419);">101%</span>
<div style="left:598.5px;top:623.2px;width:8.5px;height:8.2px;background:transparent;border:1px solid #888;box-sizing:border-box;"></div>
<div style="left:601px;top:625.7px;width:3.5px;height:3.2px;background:#aaa;"></div>
<div style="left:437px;top:45.5px;width:638px;height:534.5px;background:rgba(0,0,0,0.10);filter:blur(2px);"></div>
<div style="left:440px;top:47.5px;width:635px;height:528.5px;background:#f0f0f0;border-left:1px solid #b9b9b9;border-top:1px solid #b9b9b9;box-sizing:border-box;"></div>
<div style="left:441px;top:48.5px;width:634px;height:31.5px;background:#fff;"></div>
<svg style="left:444.5px;top:52px" width="10" height="10" viewBox="0 0 10 10"><rect x="0.5" y="0.300" width="9" height="1.300" fill="#4b57c0"/><text x="5" y="9.600" font-size="9.500" font-weight="700" text-anchor="middle" fill="#111" font-family="Liberation Sans,sans-serif" textLength="9" lengthAdjust="spacingAndGlyphs">M</text></svg>
<span class="t" style="top:52.45px;font-size:9px;line-height:11.7px;color:#a4a4a4;font-family:'Liberation Sans','Noto Sans CJK JP',sans-serif;left:458px;transform-origin:0 50%;transform:scaleX(0.7486);">ModelSim - INTEL FPGA STARTER EDITION 2020.1</span>
<div style="left:1066px;top:55.5px;width:6px;height:1px;background:#b5b5b5;"></div>
<span class="t" style="top:67.75px;font-size:9px;line-height:11.7px;color:#8a8a8a;font-family:'Liberation Sans','Noto Sans CJK JP',sans-serif;left:445px;transform-origin:0 50%;transform:scaleX(0.8611);">File</span>
<span class="t" style="top:67.75px;font-size:9px;line-height:11.7px;color:#8a8a8a;font-family:'Liberation Sans','Noto Sans CJK JP',sans-serif;left:464px;transform-origin:0 50%;transform:scaleX(0.8701);">Edit</span>
<span class="t" style="top:67.75px;font-size:9px;line-height:11.7px;color:#8a8a8a;font-family:'Liberation Sans','Noto Sans CJK JP',sans-serif;left:485px;transform-origin:0 50%;transform:scaleX(0.8265);">View</span>
<span class="t" style="top:67.75px;font-size:9px;line-height:11.7px;color:#8a8a8a;font-family:'Liberation Sans','Noto Sans CJK JP',sans-serif;left:509px;transform-origin:0 50%;transform:scaleX(0.8329);">Compile</span>
<span class="t" style="top:67.75px;font-size:9px;line-height:11.7px;color:#8a8a8a;font-family:'Liberation Sans','Noto Sans CJK JP',sans-serif;left:544px;transform-origin:0 50%;transform:scaleX(0.8139);">Simulate</span>
<span class="t" style="top:67.75px;font-size:9px;line-height:11.7px;color:#8a8a8a;font-family:'Liberation Sans','Noto Sans CJK JP',sans-serif;left:581px;transform-origin:0 50%;transform:scaleX(0.8117);">Add</span>
<span class="t" style="top:67.75px;font-size:9px;line-height:11.7px;color:#8a8a8a;font-family:'Liberation Sans','Noto Sans CJK JP',sans-serif;left:603px;transform-origin:0 50%;transform:scaleX(0.8160);">Wave</span>
<span class="t" style="top:67.75px;font-size:9px;line-height:11.7px;color:#8a8a8a;font-family:'Liberation Sans','Noto Sans CJK JP',sans-serif;left:630px;transform-origin:0 50%;transform:scaleX(0.8089);">Tools</span>
<span class="t" style="top:67.75px;font-size:9px;line-height:11.7px;color:#8a8a8a;font-family:'Liberation Sans','Noto Sans CJK JP',sans-serif;left:655px;transform-origin:0 50%;transform:scaleX(0.8509);">Layout</span>
<span class="t" style="top:67.75px;font-size:9px;line-height:11.7px;color:#8a8a8a;font-family:'Liberation Sans','Noto Sans CJK JP',sans-serif;left:686px;transform-origin:0 50%;transform:scaleX(0.7664);">Bookmarks</span>
<span class="t" style="top:67.75px;font-size:9px;line-height:11.7px;color:#8a8a8a;font-family:'Liberation Sans','Noto Sans CJK JP',sans-serif;left:731px;transform-origin:0 50%;transform:scaleX(0.8121);">Window</span>
<span class="t" style="top:67.75px;font-size:9px;line-height:11.7px;color:#8a8a8a;font-family:'Liberation Sans','Noto Sans CJK JP',sans-serif;left:767px;transform-origin:0 50%;transform:scaleX(0.7831);">Help</span>
<div style="left:442px;top:79.5px;width:223.5px;height:19.0px;box-sizing:border-box;border:1px solid #fdfdfd;border-right-color:#bcbcbc;border-bottom-color:#bcbcbc;background:#f0f0f0;"></div>
<div style="left:444.5px;top:82.0px;width:1px;height:14.0px;background:#c6c6c6;"></div>
<div style="left:669px;top:79.5px;width:76.5px;height:19.0px;box-sizing:border-box;border:1px solid #fdfdfd;border-right-color:#bcbcbc;border-bottom-color:#bcbcbc;background:#f0f0f0;"></div>
<div style="left:671.5px;top:82.0px;width:1px;height:14.0px;background:#c6c6c6;"></div>
<div style="left:750px;top:79.5px;width:256px;height:19.0px;box-sizing:border-box;border:1px solid #fdfdfd;border-right-color:#bcbcbc;border-bottom-color:#bcbcbc;background:#f0f0f0;"></div>
<div style="left:752.5px;top:82.0px;width:1px;height:14.0px;background:#c6c6c6;"></div>
<div style="left:1010px;top:79.5px;width:66px;height:19.0px;box-sizing:border-box;border:1px solid #fdfdfd;border-right-color:#bcbcbc;border-bottom-color:#bcbcbc;background:#f0f0f0;"></div>
<div style="left:1012.5px;top:82.0px;width:1px;height:14.0px;background:#c6c6c6;"></div>
<svg style="left:448.70px;top:83.30px;opacity:1" width="11" height="11" viewBox="0 0 11 11"><path d="M2.500 1 H7 L9 3 V10 H2.500 Z" fill="#fff" stroke="#555" stroke-width="0.9"/><path d="M4 4.500 H7 M4 6.500 H7.500 M4 8.200 H6.500" stroke="#777" stroke-width="0.7"/></svg>
<svg style="left:468.10px;top:83.30px;opacity:1" width="11" height="11" viewBox="0 0 11 11"><path d="M0.800 9.500 V3 H4 L5 4 H8.500 V5.200" fill="#e9c64b" stroke="#6b5513" stroke-width="0.8"/><path d="M0.800 9.500 L2.800 5.200 H10.600 L8.600 9.500 Z" fill="#f3d768" stroke="#6b5513" stroke-width="0.8"/></svg>
<svg style="left:481.80px;top:83.30px;opacity:0.8" width="11" height="11" viewBox="0 0 11 11"><rect x="1.200" y="1.200" width="8.600" height="8.600" fill="#8d8d80"/><rect x="3" y="1.200" width="5" height="3.300" fill="#eee"/><rect x="2.800" y="6.200" width="5.400" height="3.600" fill="#cfc48c"/></svg>
<svg style="left:495.50px;top:83.30px;opacity:0.6" width="11" height="11" viewBox="0 0 11 11"><path d="M1.500 5 Q3 1.500 7.500 3 L7 1.500 L10 4 L6.500 5.500 L7 4.200 Q4 3.200 3 5.500 Z M9.500 6.500 Q8 10 3.500 8.500 L4 10 L1 7.500 L4.500 6 L4 7.300 Q7 8.300 8 6 Z" fill="#9ccb8f"/></svg>
<svg style="left:509.20px;top:83.30px;opacity:1" width="11" height="11" viewBox="0 0 11 11"><path d="M3 1.500 H8.500 L9 4 H2.500 Z" fill="#fff" stroke="#444" stroke-width="0.7"/><rect x="0.800" y="4" width="9.600" height="4.200" rx="0.8" fill="#4a4a4a"/><rect x="2.500" y="7" width="6.200" height="3" fill="#ddd" stroke="#444" stroke-width="0.6"/></svg>
<svg style="left:529.10px;top:83.30px;opacity:0.55" width="11" height="11" viewBox="0 0 11 11"><path d="M3.500 1 L6.500 7 M7.500 1 L4.500 7" stroke="#3c55c8" stroke-width="1"/><circle cx="3.800" cy="8.500" r="1.600" fill="none" stroke="#3c55c8" stroke-width="1"/><circle cx="7.400" cy="8.500" r="1.600" fill="none" stroke="#3c55c8" stroke-width="1"/></svg>
<svg style="left:542.80px;top:83.30px;opacity:0.6" width="11" height="11" viewBox="0 0 11 11"><rect x="1" y="1" width="5.500" height="6.500" fill="#dfe6f5" stroke="#4b5f96" stroke-width="0.8"/><rect x="4.200" y="3.500" width="5.600" height="6.500" fill="#eef2fb" stroke="#4b5f96" stroke-width="0.8"/></svg>
<svg style="left:556.50px;top:83.30px;opacity:0.6" width="11" height="11" viewBox="0 0 11 11"><rect x="1" y="2" width="7.500" height="8" rx="0.8" fill="#6d5f45" stroke="#3d3427" stroke-width="0.7"/><rect x="3" y="1" width="3.500" height="2" fill="#999"/><rect x="4.500" y="4.500" width="5.500" height="5.800" fill="#eef2fb" stroke="#4b5f96" stroke-width="0.7"/></svg>
<svg style="left:571.00px;top:83.30px;opacity:0.85" width="11" height="11" viewBox="0 0 11 11"><path d="M2 4.500 Q5.500 0.500 9 4.500 Q10 7 7.500 8.500" fill="none" stroke="#333" stroke-width="1"/><path d="M0.800 2.200 L1.200 6 L4.800 5 Z" fill="#333"/><path d="M2 10 H9" stroke="#333" stroke-width="0.8"/></svg>
<svg style="left:583.90px;top:83.30px;opacity:1" width="11" height="11" viewBox="0 0 11 11"><path d="M9 4.500 Q5.500 0.500 2 4.500 Q1 7 3.500 8.500" fill="none" stroke="#aaa" stroke-width="1"/><path d="M10.200 2.200 L9.800 6 L6.200 5 Z" fill="#aaa"/><path d="M2 10 H9" stroke="#aaa" stroke-width="0.8"/></svg>
<svg style="left:604.50px;top:83.30px;opacity:0.5" width="11" height="11" viewBox="0 0 11 11"><circle cx="5.500" cy="5.500" r="4.500" fill="#7fc36e" stroke="#4f9a40" stroke-width="0.7"/><path d="M5.500 3 V8 M3 5.500 H8" stroke="#fff" stroke-width="1.300"/></svg>
<svg style="left:623.00px;top:83.30px;opacity:1" width="11" height="11" viewBox="0 0 11 11"><path d="M1 9.800 V5.500 L2.800 1.500 H4.600 V9.800 Z M10 9.800 V5.500 L8.200 1.500 H6.400 V9.800 Z" fill="#111"/><rect x="4.300" y="3.500" width="2.400" height="2.500" fill="#111"/></svg>
<svg style="left:636.20px;top:83.30px;opacity:0.8" width="11" height="11" viewBox="0 0 11 11"><rect x="1" y="1" width="3" height="3" fill="none" stroke="#222" stroke-width="0.8"/><rect x="1" y="6.500" width="3" height="3" fill="none" stroke="#222" stroke-width="0.8"/><path d="M5.500 2.500 H10 M5.500 8 H10 M2.500 4 V6.500" stroke="#222" stroke-width="0.9"/></svg>
<svg style="left:650.50px;top:83.30px;opacity:1" width="11" height="11" viewBox="0 0 11 11"><rect x="0.800" y="0.500" width="9.400" height="1.300" fill="#4b57c0"/><text x="5.500" y="10.200" font-size="9.500" font-weight="700" text-anchor="middle" fill="#111" font-family="Liberation Sans,sans-serif" textLength="9.400" lengthAdjust="spacingAndGlyphs">M</text></svg>
<svg style="left:675.50px;top:83.30px;opacity:1" width="11" height="11" viewBox="0 0 11 11"><path d="M3 2 Q6 4 3.500 6 Q2 8 5 9.500 M6 1.500 L8.500 4 L6 5" fill="none" stroke="#8892a8" stroke-width="0.9"/></svg>
<svg style="left:689.00px;top:83.30px;opacity:1" width="11" height="11" viewBox="0 0 11 11"><rect x="1.500" y="2" width="8" height="7.500" fill="#f4f7fc" stroke="#9aa6c0" stroke-width="0.8"/><path d="M3.500 4 Q5.500 2.500 6.500 4.500 Q6.500 6 5 6.500 M5 8 V8.500" stroke="#7f9fd8" stroke-width="0.9" fill="none"/></svg>
<svg style="left:702.90px;top:83.30px;opacity:1" width="11" height="11" viewBox="0 0 11 11"><rect x="1" y="4" width="9" height="5.500" fill="#e4e8f2" stroke="#a0a8bc" stroke-width="0.7"/><path d="M2.500 1.500 V4 M5.500 1.500 V4 M8.500 1.500 V4 M3.500 5.500 V8 M6.500 5.500 V8" stroke="#a0a8bc" stroke-width="0.8"/></svg>
<svg style="left:716.50px;top:83.30px;opacity:1" width="11" height="11" viewBox="0 0 11 11"><path d="M2 9 Q1 3 4 1.500 Q5.500 4 5.500 8 M9 9 Q10 3 7 1.500 Q5.500 4 5.500 8" fill="#d8d8d8" stroke="#2a1a1a" stroke-width="0.9"/><circle cx="2.500" cy="9.200" r="1.400" fill="#b02020"/><circle cx="8.500" cy="9.200" r="1.400" fill="#b02020"/></svg>
<svg style="left:730.30px;top:83.30px;opacity:1" width="11" height="11" viewBox="0 0 11 11"><rect x="2" y="1.500" width="7" height="8" fill="#d9dce4" stroke="#555" stroke-width="0.7"/><path d="M2.500 2 L9.500 9.500 M9.500 2 L2.500 9.500" stroke="#c22" stroke-width="1.300"/></svg>
<svg style="left:756.40px;top:83.30px;opacity:1" width="11" height="11" viewBox="0 0 11 11"><rect x="0.500" y="0.500" width="10" height="10" fill="#e9f2e6" stroke="#9b9b9b" stroke-width="0.6"/><rect x="2" y="2" width="4.500" height="4.500" rx="1" fill="none" stroke="#157a1c" stroke-width="1.200"/><rect x="4.800" y="4.800" width="4.200" height="4.200" rx="1" fill="none" stroke="#157a1c" stroke-width="1.200"/></svg>
<svg style="left:771.10px;top:83.30px;opacity:1" width="11" height="11" viewBox="0 0 11 11"><path d="M5.500 0.800 L9.800 5.500 H7.200 V10.200 H3.800 V5.500 H1.200 Z" fill="#1b1b1b"/></svg>
<svg style="left:784.50px;top:83.30px;opacity:1" width="11" height="11" viewBox="0 0 11 11"><path d="M0.500 5.500 L5.200 1.300 V3.800 H10.500 V7.200 H5.200 V9.700 Z" fill="#1b1b1b"/></svg>
<svg style="left:798.00px;top:83.30px;opacity:1" width="11" height="11" viewBox="0 0 11 11"><path d="M10.500 5.500 L5.800 1.300 V3.800 H0.500 V7.200 H5.800 V9.700 Z" fill="#9d9d9d"/></svg>
<svg style="left:818.50px;top:83.30px;opacity:1" width="11" height="11" viewBox="0 0 11 11"><rect x="1" y="1" width="6" height="9" fill="#fff" stroke="#555" stroke-width="0.7"/><path d="M2.500 3 H5 M2.500 5 H5.500 M2.500 7 H4.500" stroke="#555" stroke-width="0.6"/><path d="M8.500 1.500 V8 M7 6.500 L8.500 9.500 L10 6.500" stroke="#1f3fc0" stroke-width="1" fill="none"/></svg>
<svg style="left:883.50px;top:83.30px;opacity:1" width="11" height="11" viewBox="0 0 11 11"><rect x="1" y="1" width="6" height="9" fill="#fff" stroke="#555" stroke-width="0.7"/><path d="M2.500 3 H5 M2.500 5 H5.500 M2.500 7 H4.500" stroke="#555" stroke-width="0.6"/><path d="M8.500 1.500 V8 M7 6.500 L8.500 9.500 L10 6.500" stroke="#1f3fc0" stroke-width="1" fill="none"/></svg>
<svg style="left:897.10px;top:83.30px;opacity:1" width="11" height="11" viewBox="0 0 11 11"><rect x="1" y="1" width="6" height="9" fill="#fff" stroke="#555" stroke-width="0.7"/><path d="M2.500 3 H5 M2.500 5 H5.500 M2.500 7 H4.500" stroke="#555" stroke-width="0.6"/><path d="M8.500 1.500 V8 M7 6.500 L8.500 9.500 L10 6.500" stroke="#b03030" stroke-width="1" fill="none"/></svg>
<svg style="left:910.40px;top:83.30px;opacity:1" width="11" height="11" viewBox="0 0 11 11"><rect x="1" y="1" width="6" height="9" fill="#fff" stroke="#555" stroke-width="0.7"/><path d="M2.500 3 H5 M2.500 5 H5.500 M2.500 7 H4.500" stroke="#555" stroke-width="0.6"/><path d="M8.500 1.500 V8 M7 6.500 L8.500 9.500 L10 6.500" stroke="#1f3fc0" stroke-width="1" fill="none"/></svg>
<svg style="left:924.50px;top:83.30px;opacity:1" width="11" height="11" viewBox="0 0 11 11"><rect x="1.500" y="1" width="6.500" height="9" fill="#fff" stroke="#444" stroke-width="0.7"/><path d="M2 1.500 L9.500 9.500 M9.500 1.500 L2 9.500" stroke="#c0201c" stroke-width="1.400"/></svg>
<svg style="left:937.30px;top:83.30px;opacity:1" width="11" height="11" viewBox="0 0 11 11"><path d="M3.500 1 H7.500 L10 3.500 V7.500 L7.500 10 H3.500 L1 7.500 V3.500 Z" fill="#e25a4c"/><path d="M3 5.500 H8 M5.500 3.500 V7.500" stroke="#f6c8c2" stroke-width="0.9"/></svg>
<svg style="left:960.20px;top:83.30px;opacity:1" width="11" height="11" viewBox="0 0 11 11"><rect x="1" y="2" width="8" height="8" fill="#c9c4a6" stroke="#77745f" stroke-width="0.6"/><rect x="5" y="4" width="3" height="6" fill="#e6c54a"/><rect x="2" y="1" width="3" height="4" fill="#8b8b8b"/></svg>
<svg style="left:976.30px;top:83.30px;opacity:1" width="11" height="11" viewBox="0 0 11 11"><rect x="1" y="2" width="8" height="8" fill="#c4c0b2" stroke="#77745f" stroke-width="0.6"/><rect x="5" y="4" width="3" height="6" fill="#dcc14f"/><rect x="2" y="1" width="4" height="4" fill="#a86a6a"/></svg>
<svg style="left:990.50px;top:83.30px;opacity:1" width="11" height="11" viewBox="0 0 11 11"><path d="M3 10 L2 6 L1 4.500 L2.500 4.200 L3.200 5.200 V2 H4.500 V1.200 H6 V2 H7.300 V2.800 H8.600 V7 L8 10 Z" fill="#f3f3f3" stroke="#333" stroke-width="0.8"/></svg>
<svg style="left:1015.90px;top:83.30px;opacity:1" width="11" height="11" viewBox="0 0 11 11"><path d="M5.500 10.200 L2 6 H4.300 V3.800 H6.700 V6 H9 Z" fill="#1f3fd0"/><rect x="4.300" y="0.800" width="2.400" height="2" fill="#1f3fd0"/></svg>
<svg style="left:1028.50px;top:83.30px;opacity:1" width="11" height="11" viewBox="0 0 11 11"><path d="M1 8 Q1.500 2.500 6.500 3 V1 L10.500 4.500 L6.500 8 V5.800 Q4 5.500 3.500 8 Z" fill="#1f3fd0"/></svg>
<svg style="left:1042.80px;top:83.30px;opacity:1" width="11" height="11" viewBox="0 0 11 11"><path d="M5.500 0.800 L2 5 H4.300 V7.200 H6.700 V5 H9 Z" fill="#1f3fd0"/><rect x="4.300" y="8.200" width="2.400" height="2" fill="#1f3fd0"/></svg>
<svg style="left:1063.20px;top:83.30px;opacity:1" width="11" height="11" viewBox="0 0 11 11"><path d="M5.500 7.500 L2 3.800 H4.300 V0.800 H6.700 V3.800 H9 Z" fill="#1f3fd0"/><path d="M1.500 9.500 H9.500" stroke="#1f3fd0" stroke-width="1.600" stroke-dasharray="2 1"/></svg>
<div style="left:462.20px;top:88.30px;width:0;height:0;border-left:1.500px solid transparent;border-right:1.500px solid transparent;border-top:2px solid #222;"></div>
<div style="left:617.30px;top:88.30px;width:0;height:0;border-left:1.500px solid transparent;border-right:1.500px solid transparent;border-top:2px solid #888;"></div>
<div style="left:524.9px;top:82.5px;width:1px;height:13.0px;background:#b8b8b8;"></div>
<div style="left:598.9px;top:82.5px;width:1px;height:13.0px;background:#b8b8b8;"></div>
<div style="left:813.5px;top:82.5px;width:1px;height:13.0px;background:#b8b8b8;"></div>
<div style="left:953.3px;top:82.5px;width:1px;height:13.0px;background:#b8b8b8;"></div>
<div style="left:1057.5px;top:82.5px;width:1px;height:13.0px;background:#b8b8b8;"></div>
<div style="left:833px;top:82px;width:40px;height:14px;background:#fff;border:1px solid #c8c8c8;box-sizing:border-box;"></div>
<span class="t" style="top:83.77px;font-size:8.5px;line-height:11.05px;color:#666;font-family:'Liberation Sans','Noto Sans CJK JP',sans-serif;right:416px;transform-origin:100% 50%;transform:scaleX(1.0575);">100 ps</span>
<div style="left:873px;top:82px;width:5.5px;height:14px;background:#e8e8e8;"></div>
<span class="t" style="top:82.25px;font-size:5px;line-height:6.5px;color:#222;font-family:'Liberation Sans','Noto Sans CJK JP',sans-serif;left:873.4px;transform-origin:0 50%;">▴</span>
<span class="t" style="top:89.25px;font-size:5px;line-height:6.5px;color:#222;font-family:'Liberation Sans','Noto Sans CJK JP',sans-serif;left:873.4px;transform-origin:0 50%;">▾</span>
<div style="left:442px;top:99.5px;width:126.5px;height:19.299999999999997px;box-sizing:border-box;border:1px solid #fdfdfd;border-right-color:#bcbcbc;border-bottom-color:#bcbcbc;background:#f0f0f0;"></div>
<div style="left:444.5px;top:102.0px;width:1px;height:14.299999999999997px;background:#c6c6c6;"></div>
<div style="left:572px;top:99.5px;width:202px;height:19.299999999999997px;box-sizing:border-box;border:1px solid #fdfdfd;border-right-color:#bcbcbc;border-bottom-color:#bcbcbc;background:#f0f0f0;"></div>
<div style="left:574.5px;top:102.0px;width:1px;height:14.299999999999997px;background:#c6c6c6;"></div>
<div style="left:778px;top:99.5px;width:92.5px;height:19.299999999999997px;box-sizing:border-box;border:1px solid #fdfdfd;border-right-color:#bcbcbc;border-bottom-color:#bcbcbc;background:#f0f0f0;"></div>
<div style="left:780.5px;top:102.0px;width:1px;height:14.299999999999997px;background:#c6c6c6;"></div>
<div style="left:874px;top:99.5px;width:102.5px;height:19.299999999999997px;box-sizing:border-box;border:1px solid #fdfdfd;border-right-color:#bcbcbc;border-bottom-color:#bcbcbc;background:#f0f0f0;"></div>
<div style="left:876.5px;top:102.0px;width:1px;height:14.299999999999997px;background:#c6c6c6;"></div>
<div style="left:980px;top:99.5px;width:96px;height:19.299999999999997px;box-sizing:border-box;border:1px solid #fdfdfd;border-right-color:#bcbcbc;border-bottom-color:#bcbcbc;background:#f0f0f0;"></div>
<div style="left:982.5px;top:102.0px;width:1px;height:14.299999999999997px;background:#c6c6c6;"></div>
<span class="t" style="top:103.31px;font-size:8.3px;line-height:10.79px;color:#333;font-family:'Liberation Sans','Noto Sans CJK JP',sans-serif;left:450.5px;transform-origin:0 50%;transform:scaleX(0.8627);">Layout</span>
<div style="left:475px;top:102.5px;width:88.5px;height:13.5px;background:#fff;border:1px solid #cdcdcd;box-sizing:border-box;"></div>
<span class="t" style="top:104.53px;font-size:7.8px;line-height:10.14px;color:#333;font-family:'Liberation Mono','Noto Sans CJK JP',monospace;left:476.5px;transform-origin:0 50%;transform:scaleX(0.9215);">Simulate</span>
<div style="left:551.5px;top:103.5px;width:11px;height:11.5px;background:#f0f0f0;"></div>
<div style="left:553.500px;top:106.500px;width:0;height:0;border-left:3.500px solid transparent;border-right:3.500px solid transparent;border-top:4px solid #000;"></div>
<div style="left:552.5px;top:112.5px;width:9px;height:1.2px;background:#555;"></div>
<span class="t" style="top:103.5px;font-size:8px;line-height:10.4px;color:#9a9a9a;font-family:'Liberation Sans','Noto Sans CJK JP',sans-serif;left:580px;transform-origin:0 50%;transform:scaleX(0.8141);">ColumnLayout</span>
<div style="left:625px;top:102.5px;width:144px;height:13.5px;background:#f6f6f6;border:1px solid #c4c4c4;box-sizing:border-box;"></div>
<span class="t" style="top:104.53px;font-size:7.8px;line-height:10.14px;color:#a4a4a4;font-family:'Liberation Mono','Noto Sans CJK JP',monospace;left:627px;transform-origin:0 50%;transform:scaleX(0.9082);">AllColumns</span>
<div style="left:758px;top:103.5px;width:10px;height:11.5px;background:#eeeeee;"></div>
<div style="left:760.500px;top:107px;width:0;height:0;border-left:3px solid transparent;border-right:3px solid transparent;border-top:3.500px solid #666;"></div>
<div style="left:759.5px;top:112.5px;width:8px;height:1px;background:#999;"></div>
<svg style="left:785.30px;top:103.70px;opacity:0.8" width="11" height="11" viewBox="0 0 11 11"><rect x="1" y="1.500" width="7" height="5.500" rx="1" fill="#a8cdea"/><rect x="4.500" y="5" width="5" height="5" rx="1" fill="#c8c27a"/></svg>
<svg style="left:804.50px;top:103.70px;opacity:1" width="11" height="11" viewBox="0 0 11 11"><rect x="1" y="1.500" width="7" height="5.500" rx="1" fill="#5a9ad6"/><rect x="4.500" y="5" width="5" height="5" rx="1" fill="#e0883c"/></svg>
<svg style="left:823.50px;top:103.70px;opacity:1" width="11" height="11" viewBox="0 0 11 11"><rect x="1" y="1.500" width="7" height="5.500" rx="1" fill="#e9a03c"/><rect x="4.500" y="5" width="5" height="5" rx="1" fill="#4a86c8"/></svg>
<svg style="left:837.50px;top:103.70px;opacity:1" width="11" height="11" viewBox="0 0 11 11"><rect x="1" y="1.500" width="7" height="5.500" rx="1" fill="#5a9ad6"/><rect x="4.500" y="5" width="5" height="5" rx="1" fill="#dfe6f2"/></svg>
<svg style="left:856.00px;top:103.70px;opacity:1" width="11" height="11" viewBox="0 0 11 11"><rect x="1" y="1.500" width="7" height="5.500" rx="1" fill="#5a9ad6"/><rect x="4.500" y="5" width="5" height="5" rx="1" fill="#5fae4c"/></svg>
<svg style="left:882.10px;top:103.70px;opacity:1" width="11" height="11" viewBox="0 0 11 11"><rect x="0.500" y="0.500" width="10" height="10" fill="#fff" stroke="#c9c9c9" stroke-width="0.7"/><text x="5.500" y="7.600" font-size="5" text-anchor="middle" fill="#a0a0a0" font-family="Liberation Sans,sans-serif">I</text></svg>
<svg style="left:897.90px;top:103.70px;opacity:1" width="11" height="11" viewBox="0 0 11 11"><rect x="0.500" y="0.500" width="10" height="10" fill="#fff" stroke="#c9c9c9" stroke-width="0.7"/><text x="5.500" y="7.600" font-size="5" text-anchor="middle" fill="#a0a0a0" font-family="Liberation Sans,sans-serif">O</text></svg>
<svg style="left:914.00px;top:103.70px;opacity:1" width="11" height="11" viewBox="0 0 11 11"><rect x="0.500" y="0.500" width="10" height="10" fill="#fff" stroke="#c9c9c9" stroke-width="0.7"/><text x="5.500" y="7.600" font-size="3.8" text-anchor="middle" fill="#a0a0a0" font-family="Liberation Sans,sans-serif">I/O</text></svg>
<svg style="left:930.20px;top:103.70px;opacity:1" width="11" height="11" viewBox="0 0 11 11"><rect x="0.500" y="0.500" width="10" height="10" fill="#fff" stroke="#c9c9c9" stroke-width="0.7"/><text x="5.500" y="7.600" font-size="5" text-anchor="middle" fill="#a0a0a0" font-family="Liberation Sans,sans-serif">1</text></svg>
<svg style="left:946.00px;top:103.70px;opacity:1" width="11" height="11" viewBox="0 0 11 11"><rect x="0.500" y="0.500" width="10" height="10" fill="#fff" stroke="#c9c9c9" stroke-width="0.7"/><text x="5.500" y="7.600" font-size="3.8" text-anchor="middle" fill="#a0a0a0" font-family="Liberation Sans,sans-serif">ALL</text></svg>
<svg style="left:960.50px;top:103.70px;opacity:0.8" width="11" height="11" viewBox="0 0 11 11"><path d="M2 9.500 L8 2.500" stroke="#a9b9d8" stroke-width="1.800"/><circle cx="8.500" cy="2.500" r="1.500" fill="#e8c6d8"/></svg>
<svg style="left:986.80px;top:103.70px;opacity:1" width="11" height="11" viewBox="0 0 11 11"><rect x="0" y="0" width="11" height="11" fill="#fff" stroke="#d0d0d0" stroke-width="0.6"/><path d="M3.500 1.500 V9 L5.300 7.300 L6.600 10 L7.700 9.500 L6.500 6.900 H8.800 Z" fill="#111"/></svg>
<svg style="left:1003.20px;top:103.70px;opacity:0.7" width="11" height="11" viewBox="0 0 11 11"><rect x="1.500" y="1.500" width="6" height="6" fill="none" stroke="#333" stroke-width="0.9"/><rect x="3.500" y="3.500" width="4" height="4" fill="#555"/><path d="M7.500 7.500 L10 10" stroke="#333" stroke-width="1.300"/><path d="M0.500 10.500 H10.500" stroke="#999" stroke-width="0.6"/></svg>
<svg style="left:1019.50px;top:103.70px;opacity:0.85" width="11" height="11" viewBox="0 0 11 11"><path d="M5.500 0.500 V10.500 M0.500 5.500 H10.500" stroke="#333" stroke-width="0.9"/><circle cx="5.500" cy="5.500" r="2.300" fill="none" stroke="#333" stroke-width="0.8"/><path d="M0.500 10.500 H10.500" stroke="#999" stroke-width="0.6"/></svg>
<svg style="left:1035.50px;top:103.70px;opacity:0.55" width="11" height="11" viewBox="0 0 11 11"><path d="M3.500 1.500 V9 M7.500 1.500 V9" stroke="#222" stroke-width="1.100"/><path d="M0.500 9.500 H10.500" stroke="#333" stroke-width="0.9"/></svg>
<svg style="left:1051.30px;top:103.70px;opacity:0.55" width="11" height="11" viewBox="0 0 11 11"><path d="M1.500 3 H5 M1.500 5.500 H4 M1.500 8 H5" stroke="#555" stroke-width="0.8"/><path d="M7 1.500 V9.500" stroke="#333" stroke-width="0.9" stroke-dasharray="1.500 1"/><rect x="6" y="3" width="4" height="5" fill="none" stroke="#777" stroke-width="0.7"/><path d="M0.500 10.500 H10.500" stroke="#999" stroke-width="0.6"/></svg>
<div style="left:797.50px;top:108.70px;width:0;height:0;border-left:1.500px solid transparent;border-right:1.500px solid transparent;border-top:2px solid #777;"></div>
<div style="left:817.00px;top:108.70px;width:0;height:0;border-left:1.500px solid transparent;border-right:1.500px solid transparent;border-top:2px solid #222;"></div>
<div style="left:849.50px;top:108.70px;width:0;height:0;border-left:1.500px solid transparent;border-right:1.500px solid transparent;border-top:2px solid #222;"></div>
<div style="left:1067.5px;top:102.5px;width:1px;height:13.0px;background:#b8b8b8;"></div>
<div style="left:1072.5px;top:104px;width:2.5px;height:10px;background:#222;"></div>
<div style="left:442px;top:119.5px;width:91px;height:19.30000000000001px;box-sizing:border-box;border:1px solid #fdfdfd;border-right-color:#bcbcbc;border-bottom-color:#bcbcbc;background:#f0f0f0;"></div>
<div style="left:444.5px;top:122.0px;width:1px;height:14.300000000000011px;background:#c6c6c6;"></div>
<svg style="left:449.50px;top:123.50px;opacity:1.0" width="11" height="11" viewBox="0 0 11 11"><circle cx="4.500" cy="4.500" r="3.300" fill="#fff" stroke="#8a8a8a" stroke-width="0.9"/><path d="M3 4.500 H6 M4.500 3 V6" stroke="#8a8a8a" stroke-width="0.8"/><path d="M7 7 L10 10" stroke="#8a93b8" stroke-width="1.500"/></svg>
<svg style="left:463.10px;top:123.50px;opacity:1.0" width="11" height="11" viewBox="0 0 11 11"><circle cx="4.500" cy="4.500" r="3.300" fill="#fff" stroke="#8a8a8a" stroke-width="0.9"/><path d="M3 4.500 H6" stroke="#8a8a8a" stroke-width="0.8"/><path d="M7 7 L10 10" stroke="#8a93b8" stroke-width="1.500"/></svg>
<svg style="left:476.80px;top:123.50px;opacity:1.0" width="11" height="11" viewBox="0 0 11 11"><circle cx="4.500" cy="4.500" r="3.500" fill="#7f98c8" stroke="#6a7fa8" stroke-width="0.9"/><path d="M7 7 L10 10" stroke="#6a7fa8" stroke-width="1.800"/></svg>
<svg style="left:490.50px;top:123.50px;opacity:1.0" width="11" height="11" viewBox="0 0 11 11"><rect x="1.500" y="6" width="6" height="4" fill="#f6e29a" stroke="#c8b46a" stroke-width="0.6"/><rect x="3.500" y="3" width="2" height="3.500" fill="#f6e29a" stroke="#c8b46a" stroke-width="0.5"/><circle cx="7.500" cy="3" r="2" fill="#fff" stroke="#a8b0c8" stroke-width="0.8"/></svg>
<svg style="left:504.20px;top:123.50px;opacity:1.0" width="11" height="11" viewBox="0 0 11 11"><path d="M1.500 10 V7 H3.500 L4.500 4 H6 L7 7 H9 V10 Z" fill="#f6e29a" stroke="#c8b46a" stroke-width="0.6"/><circle cx="7" cy="3" r="2" fill="#fff" stroke="#a8b0c8" stroke-width="0.8"/></svg>
<svg style="left:517.50px;top:123.50px;opacity:1.0" width="11" height="11" viewBox="0 0 11 11"><rect x="1" y="1.500" width="5.500" height="5" fill="#e4ecf8" stroke="#8a9fc8" stroke-width="0.8"/><circle cx="6.500" cy="6.500" r="2.300" fill="#f4f8ff" stroke="#7f93c8" stroke-width="0.8"/><path d="M8.200 8.200 L10.300 10.300" stroke="#7f93c8" stroke-width="1.300"/></svg>
<div style="left:441px;top:140.5px;width:357px;height:76.5px;background:#fff;"></div>
<div style="left:441px;top:140.5px;width:634px;height:12px;background:#f0f0f0;"></div>
<svg style="left:442px;top:141px" width="11" height="11" viewBox="0 0 11 11"><path d="M2 7 V3 Q5.500 -0.500 8.500 3 V7" fill="none" stroke="#444" stroke-width="1"/><rect x="1.200" y="5.500" width="8.500" height="3" fill="#c8c8c8" stroke="#444" stroke-width="0.6"/><circle cx="2.800" cy="9.300" r="1.500" fill="#b02020"/><circle cx="8.200" cy="9.300" r="1.500" fill="#b02020"/></svg>
<span class="t" style="top:141.6px;font-size:8.3px;line-height:10.79px;color:#222;font-family:'Liberation Sans','Noto Sans CJK JP',sans-serif;left:454px;transform-origin:0 50%;transform:scaleX(0.7944);">sim - Default</span>
<div style="left:495.5px;top:145px;width:270.5px;height:1px;background:#bfbfbf;"></div>
<div style="left:495.5px;top:148px;width:270.5px;height:1px;background:#bfbfbf;"></div>
<div style="left:622px;top:144.5px;width:8px;height:5px;background:#f0f0f0;"></div>
<div style="left:622.5px;top:145px;width:1px;height:4.5px;background:#c4c4c4;"></div>
<div style="left:624.5px;top:145px;width:1px;height:4.5px;background:#c4c4c4;"></div>
<div style="left:626.5px;top:145px;width:1px;height:4.5px;background:#c4c4c4;"></div>
<div style="left:628.5px;top:145px;width:1px;height:4.5px;background:#c4c4c4;"></div>
<div style="left:766.5px;top:142.5px;width:9px;height:9px;background:#f4f4f4;border:0.6px solid #c9c9c9;box-sizing:border-box;"></div>
<div style="left:776.5px;top:142.5px;width:9px;height:9px;background:#f4f4f4;border:0.6px solid #c9c9c9;box-sizing:border-box;"></div>
<div style="left:787.1px;top:142.5px;width:9px;height:9px;background:#f4f4f4;border:0.6px solid #c9c9c9;box-sizing:border-box;"></div>
<svg style="left:766px;top:142px" width="31" height="10" viewBox="0 0 31 10"><path d="M5 2 V8 M2 5 H8" stroke="#111" stroke-width="1.300"/><path d="M12.500 7.500 L17 3 M14 2.500 H17.500 V6" stroke="#111" stroke-width="1.100" fill="none"/><path d="M23 2.500 L28 7.500 M28 2.500 L23 7.500" stroke="#111" stroke-width="1.300"/></svg>
<div style="left:441px;top:152.5px;width:357px;height:11px;background:#f0f0f0;border-top:1px solid #fff;border-bottom:1px solid #a8a8a8;box-sizing:border-box;"></div>
<div style="left:531px;top:153.5px;width:1px;height:9.5px;background:#a8a8a8;"></div>
<div style="left:532px;top:153.5px;width:1px;height:9.5px;background:#fff;"></div>
<div style="left:575.5px;top:153.5px;width:1px;height:9.5px;background:#a8a8a8;"></div>
<div style="left:576.5px;top:153.5px;width:1px;height:9.5px;background:#fff;"></div>
<div style="left:634.5px;top:153.5px;width:1px;height:9.5px;background:#a8a8a8;"></div>
<div style="left:635.5px;top:153.5px;width:1px;height:9.5px;background:#fff;"></div>
<div style="left:694px;top:153.5px;width:1px;height:9.5px;background:#a8a8a8;"></div>
<div style="left:695px;top:153.5px;width:1px;height:9.5px;background:#fff;"></div>
<div style="left:728.5px;top:153.5px;width:1px;height:9.5px;background:#a8a8a8;"></div>
<div style="left:729.5px;top:153.5px;width:1px;height:9.5px;background:#fff;"></div>
<div style="left:786.5px;top:153.5px;width:1px;height:9.5px;background:#a8a8a8;"></div>
<div style="left:787.5px;top:153.5px;width:1px;height:9.5px;background:#fff;"></div>
<span class="t" style="top:154.62px;font-size:5.5px;line-height:7.15px;color:#222;font-family:'Liberation Sans','Noto Sans CJK JP',sans-serif;left:443.5px;transform-origin:0 50%;">▼</span>
<span class="t" style="top:152.8px;font-size:8.3px;line-height:10.79px;color:#222;font-family:'Liberation Sans','Noto Sans CJK JP',sans-serif;left:450.3px;transform-origin:0 50%;transform:scaleX(0.8127);">Instance</span>
<span class="t" style="top:152.8px;font-size:8.3px;line-height:10.79px;color:#222;font-family:'Liberation Sans','Noto Sans CJK JP',sans-serif;left:533.8px;transform-origin:0 50%;transform:scaleX(0.7949);">Design unit</span>
<span class="t" style="top:152.8px;font-size:8.3px;line-height:10.79px;color:#222;font-family:'Liberation Sans','Noto Sans CJK JP',sans-serif;left:577.6px;transform-origin:0 50%;transform:scaleX(0.8151);">Design unit type</span>
<span class="t" style="top:152.8px;font-size:8.3px;line-height:10.79px;color:#222;font-family:'Liberation Sans','Noto Sans CJK JP',sans-serif;left:637px;transform-origin:0 50%;transform:scaleX(0.8225);">Top Category</span>
<span class="t" style="top:152.8px;font-size:8.3px;line-height:10.79px;color:#222;font-family:'Liberation Sans','Noto Sans CJK JP',sans-serif;left:696.9px;transform-origin:0 50%;transform:scaleX(0.7543);">Visibility</span>
<span class="t" style="top:152.8px;font-size:8.3px;line-height:10.79px;color:#222;font-family:'Liberation Sans','Noto Sans CJK JP',sans-serif;left:730.8px;transform-origin:0 50%;transform:scaleX(0.8153);">Total coverage</span>
<div style="left:787px;top:152.5px;width:10.5px;height:64px;background:#f0f0f0;border-left:1px solid #c6c6c6;box-sizing:border-box;"></div>
<div style="left:788px;top:153px;width:9px;height:10px;background:#f0f0f0;border:1px solid #fff;border-right-color:#9a9a9a;border-bottom-color:#9a9a9a;box-sizing:border-box;"></div>
<span class="t" style="top:154.1px;font-size:6px;line-height:7.8px;color:#111;font-family:'Liberation Sans','Noto Sans CJK JP',sans-serif;left:790.5px;transform-origin:0 50%;">▴</span>
<div style="left:788px;top:164px;width:9px;height:26px;background:#f0f0f0;border:1px solid #fff;border-right-color:#8a8a8a;border-bottom-color:#8a8a8a;box-sizing:border-box;"></div>
<div style="left:441.5px;top:165px;width:345px;height:9.8px;background:#c9d5e6;"></div>
<div style="left:449px;top:174px;width:0.7px;height:3px;background:#9a9a9a;"></div>
<div style="left:459.6px;top:184px;width:0.7px;height:28px;background:#a8a8a8;"></div>
<div style="left:470px;top:189.5px;width:7px;height:0.7px;background:#a8a8a8;"></div>
<div style="left:470px;top:184px;width:0.7px;height:6px;background:#a8a8a8;"></div>
<div style="left:446px;top:166.8px;width:6px;height:6px;background:#fff;border:0.7px solid #8a8a8a;box-sizing:border-box;"></div>
<div style="left:447.5px;top:169.45000000000002px;width:3px;height:0.7px;background:#222;"></div>
<div style="left:452px;top:169.5px;width:3px;height:0.6px;background:#a0a0a0;"></div>
<svg style="left:455.1px;top:165.60px" width="9" height="9" viewBox="0 0 9 9"><path d="M0.500 2.500 L2.500 0.500 H8.500 L6.500 2.500 Z" fill="#8fd2f6"/><path d="M8.500 0.500 V6.500 L6.500 8.500 V2.500 Z" fill="#1a5fa8"/><rect x="0.500" y="2.500" width="6" height="6" fill="#2a9be8"/></svg>
<span class="t" style="top:165.97px;font-size:8.2px;line-height:10.66px;color:#111;font-family:'Liberation Sans','Noto Sans CJK JP',sans-serif;left:467.4px;transform-origin:0 50%;transform:scaleX(0.8522);">tb_top</span>
<span class="t" style="top:165.97px;font-size:8.2px;line-height:10.66px;color:#111;font-family:'Liberation Sans','Noto Sans CJK JP',sans-serif;left:533.8px;transform-origin:0 50%;transform:scaleX(0.8522);">tb_top</span>
<span class="t" style="top:165.97px;font-size:8.2px;line-height:10.66px;color:#111;font-family:'Liberation Sans','Noto Sans CJK JP',sans-serif;left:577.6px;transform-origin:0 50%;transform:scaleX(0.7818);">Module</span>
<span class="t" style="top:165.97px;font-size:8.2px;line-height:10.66px;color:#111;font-family:'Liberation Sans','Noto Sans CJK JP',sans-serif;left:637px;transform-origin:0 50%;transform:scaleX(0.8100);">DU Instance</span>
<span class="t" style="top:165.97px;font-size:8.2px;line-height:10.66px;color:#111;font-family:'Liberation Sans','Noto Sans CJK JP',sans-serif;left:696.9px;transform-origin:0 50%;transform:scaleX(0.8579);">+acc=...</span>
<div style="left:456.6px;top:176.73000000000002px;width:6px;height:6px;background:#fff;border:0.7px solid #8a8a8a;box-sizing:border-box;"></div>
<div style="left:458.1px;top:179.38000000000002px;width:3px;height:0.7px;background:#222;"></div>
<div style="left:462.6px;top:179.43px;width:3px;height:0.6px;background:#a0a0a0;"></div>
<svg style="left:465.9px;top:175.53px" width="9" height="9" viewBox="0 0 9 9"><path d="M0.500 2.500 L2.500 0.500 H8.500 L6.500 2.500 Z" fill="#8fd2f6"/><path d="M8.500 0.500 V6.500 L6.500 8.500 V2.500 Z" fill="#1a5fa8"/><rect x="0.500" y="2.500" width="6" height="6" fill="#2a9be8"/></svg>
<span class="t" style="top:175.9px;font-size:8.2px;line-height:10.66px;color:#111;font-family:'Liberation Sans','Noto Sans CJK JP',sans-serif;left:478px;transform-origin:0 50%;transform:scaleX(0.8782);">u0</span>
<span class="t" style="top:175.9px;font-size:8.2px;line-height:10.66px;color:#111;font-family:'Liberation Sans','Noto Sans CJK JP',sans-serif;left:533.8px;transform-origin:0 50%;transform:scaleX(0.8237);">design_top</span>
<span class="t" style="top:175.9px;font-size:8.2px;line-height:10.66px;color:#111;font-family:'Liberation Sans','Noto Sans CJK JP',sans-serif;left:577.6px;transform-origin:0 50%;transform:scaleX(0.7818);">Module</span>
<span class="t" style="top:175.9px;font-size:8.2px;line-height:10.66px;color:#111;font-family:'Liberation Sans','Noto Sans CJK JP',sans-serif;left:637px;transform-origin:0 50%;transform:scaleX(0.8100);">DU Instance</span>
<span class="t" style="top:175.9px;font-size:8.2px;line-height:10.66px;color:#111;font-family:'Liberation Sans','Noto Sans CJK JP',sans-serif;left:696.9px;transform-origin:0 50%;transform:scaleX(0.8579);">+acc=...</span>
<svg style="left:476.5px;top:185.46px" width="9" height="9" viewBox="0 0 9 9"><path d="M0.500 2.500 L2.500 0.500 H8.500 L6.500 2.500 Z" fill="#8fd2f6"/><path d="M8.500 0.500 V6.500 L6.500 8.500 V2.500 Z" fill="#1a5fa8"/><rect x="0.500" y="2.500" width="6" height="6" fill="#2a9be8"/></svg>
<span class="t" style="top:185.83px;font-size:8.2px;line-height:10.66px;color:#111;font-family:'Liberation Sans','Noto Sans CJK JP',sans-serif;left:489.3px;transform-origin:0 50%;transform:scaleX(0.8525);">SEG7_LUT</span>
<span class="t" style="top:185.83px;font-size:8.2px;line-height:10.66px;color:#111;font-family:'Liberation Sans','Noto Sans CJK JP',sans-serif;left:533.8px;transform-origin:0 50%;transform:scaleX(0.8237);">design_top</span>
<span class="t" style="top:185.83px;font-size:8.2px;line-height:10.66px;color:#111;font-family:'Liberation Sans','Noto Sans CJK JP',sans-serif;left:577.6px;transform-origin:0 50%;transform:scaleX(0.7960);">Function</span>
<span class="t" style="top:185.83px;font-size:8.2px;line-height:10.66px;color:#111;font-family:'Liberation Sans','Noto Sans CJK JP',sans-serif;left:637px;transform-origin:0 50%;transform:scaleX(0.9143);">-</span>
<span class="t" style="top:185.83px;font-size:8.2px;line-height:10.66px;color:#111;font-family:'Liberation Sans','Noto Sans CJK JP',sans-serif;left:696.9px;transform-origin:0 50%;transform:scaleX(0.8579);">+acc=...</span>
<div style="left:467px;top:196.59px;width:6px;height:6px;background:#fff;border:0.7px solid #8a8a8a;box-sizing:border-box;"></div>
<div style="left:468.5px;top:199.24px;width:3px;height:0.7px;background:#222;"></div>
<div style="left:469.65px;top:198.09px;width:0.7px;height:3px;background:#222;"></div>
<div style="left:473px;top:199.29px;width:3px;height:0.6px;background:#a0a0a0;"></div>
<svg style="left:476.5px;top:195.39px" width="9" height="9" viewBox="0 0 9 9"><path d="M0.500 2.500 L2.500 0.500 H8.500 L6.500 2.500 Z" fill="#8fd2f6"/><path d="M8.500 0.500 V6.500 L6.500 8.500 V2.500 Z" fill="#1a5fa8"/><rect x="0.500" y="2.500" width="6" height="6" fill="#2a9be8"/></svg>
<span class="t" style="top:195.76px;font-size:8.2px;line-height:10.66px;color:#111;font-family:'Liberation Sans','Noto Sans CJK JP',sans-serif;left:489.3px;transform-origin:0 50%;transform:scaleX(0.8782);">u0</span>
<span class="t" style="top:195.76px;font-size:8.2px;line-height:10.66px;color:#111;font-family:'Liberation Sans','Noto Sans CJK JP',sans-serif;left:533.8px;transform-origin:0 50%;transform:scaleX(0.9412);">pll_core</span>
<span class="t" style="top:195.76px;font-size:8.2px;line-height:10.66px;color:#111;font-family:'Liberation Sans','Noto Sans CJK JP',sans-serif;left:577.6px;transform-origin:0 50%;transform:scaleX(0.7818);">Module</span>
<span class="t" style="top:195.76px;font-size:8.2px;line-height:10.66px;color:#111;font-family:'Liberation Sans','Noto Sans CJK JP',sans-serif;left:637px;transform-origin:0 50%;transform:scaleX(0.8100);">DU Instance</span>
<span class="t" style="top:195.76px;font-size:8.2px;line-height:10.66px;color:#111;font-family:'Liberation Sans','Noto Sans CJK JP',sans-serif;left:696.9px;transform-origin:0 50%;transform:scaleX(0.8579);">+acc=...</span>
<div style="left:467px;top:206.52px;width:6px;height:6px;background:#fff;border:0.7px solid #8a8a8a;box-sizing:border-box;"></div>
<div style="left:468.5px;top:209.17000000000002px;width:3px;height:0.7px;background:#222;"></div>
<div style="left:469.65px;top:208.02px;width:0.7px;height:3px;background:#222;"></div>
<div style="left:473px;top:209.22px;width:3px;height:0.6px;background:#a0a0a0;"></div>
<svg style="left:476.5px;top:205.32px" width="9" height="9" viewBox="0 0 9 9"><path d="M0.500 2.500 L2.500 0.500 H8.500 L6.500 2.500 Z" fill="#8fd2f6"/><path d="M8.500 0.500 V6.500 L6.500 8.500 V2.500 Z" fill="#1a5fa8"/><rect x="0.500" y="2.500" width="6" height="6" fill="#2a9be8"/></svg>
<span class="t" style="top:205.69px;font-size:8.2px;line-height:10.66px;color:#111;font-family:'Liberation Sans','Noto Sans CJK JP',sans-serif;left:489.3px;transform-origin:0 50%;transform:scaleX(0.8782);">u1</span>
<span class="t" style="top:205.69px;font-size:8.2px;line-height:10.66px;color:#111;font-family:'Liberation Sans','Noto Sans CJK JP',sans-serif;left:533.8px;transform-origin:0 50%;transform:scaleX(0.8163);">adc_core</span>
<span class="t" style="top:205.69px;font-size:8.2px;line-height:10.66px;color:#111;font-family:'Liberation Sans','Noto Sans CJK JP',sans-serif;left:577.6px;transform-origin:0 50%;transform:scaleX(0.7818);">Module</span>
<span class="t" style="top:205.69px;font-size:8.2px;line-height:10.66px;color:#111;font-family:'Liberation Sans','Noto Sans CJK JP',sans-serif;left:637px;transform-origin:0 50%;transform:scaleX(0.8100);">DU Instance</span>
<span class="t" style="top:205.69px;font-size:8.2px;line-height:10.66px;color:#111;font-family:'Liberation Sans','Noto Sans CJK JP',sans-serif;left:696.9px;transform-origin:0 50%;transform:scaleX(0.8579);">+acc=...</span>
<div style="left:797.5px;top:140.5px;width:6px;height:76.5px;background:#f0f0f0;"></div>
<div style="left:803.5px;top:152.5px;width:272px;height:30px;background:#fff;"></div>
<svg style="left:804px;top:141.500px" width="11" height="11" viewBox="0 0 11 11"><circle cx="5.500" cy="5.500" r="3.600" fill="none" stroke="#6a86b8" stroke-width="2.200" stroke-dasharray="1.900 1.100"/><circle cx="5.500" cy="5.500" r="2.700" fill="#c6d4ea" stroke="#54709c" stroke-width="0.8"/><circle cx="5.500" cy="5.500" r="1" fill="#f0f0f0"/></svg>
<span class="t" style="top:141.6px;font-size:8.3px;line-height:10.79px;color:#222;font-family:'Liberation Sans','Noto Sans CJK JP',sans-serif;left:816.5px;transform-origin:0 50%;transform:scaleX(0.7951);">Processes (Active)</span>
<div style="left:875px;top:145px;width:200px;height:1px;background:#bfbfbf;"></div>
<div style="left:875px;top:148px;width:200px;height:1px;background:#bfbfbf;"></div>
<div style="left:982px;top:144.5px;width:10px;height:5px;background:#f0f0f0;"></div>
<div style="left:982.5px;top:145px;width:1px;height:4.5px;background:#c4c4c4;"></div>
<div style="left:984.5px;top:145px;width:1px;height:4.5px;background:#c4c4c4;"></div>
<div style="left:986.5px;top:145px;width:1px;height:4.5px;background:#c4c4c4;"></div>
<div style="left:988.5px;top:145px;width:1px;height:4.5px;background:#c4c4c4;"></div>
<div style="left:990.5px;top:145px;width:1px;height:4.5px;background:#c4c4c4;"></div>
<div style="left:803.5px;top:152.5px;width:272px;height:11px;background:#f0f0f0;border-top:1px solid #fff;border-bottom:1px solid #a8a8a8;box-sizing:border-box;"></div>
<div style="left:893.5px;top:153.5px;width:1px;height:9.5px;background:#a8a8a8;"></div>
<div style="left:894.5px;top:153.5px;width:1px;height:9.5px;background:#fff;"></div>
<div style="left:958px;top:153.5px;width:1px;height:9.5px;background:#a8a8a8;"></div>
<div style="left:959px;top:153.5px;width:1px;height:9.5px;background:#fff;"></div>
<div style="left:994px;top:153.5px;width:1px;height:9.5px;background:#a8a8a8;"></div>
<div style="left:995px;top:153.5px;width:1px;height:9.5px;background:#fff;"></div>
<div style="left:1021px;top:153.5px;width:1px;height:9.5px;background:#a8a8a8;"></div>
<div style="left:1022px;top:153.5px;width:1px;height:9.5px;background:#fff;"></div>
<span class="t" style="top:154.62px;font-size:5.5px;line-height:7.15px;color:#222;font-family:'Liberation Sans','Noto Sans CJK JP',sans-serif;left:805px;transform-origin:0 50%;">▼</span>
<span class="t" style="top:152.8px;font-size:8.3px;line-height:10.79px;color:#222;font-family:'Liberation Sans','Noto Sans CJK JP',sans-serif;left:812px;transform-origin:0 50%;transform:scaleX(0.7678);">Name</span>
<span class="t" style="top:152.8px;font-size:8.3px;line-height:10.79px;color:#222;font-family:'Liberation Sans','Noto Sans CJK JP',sans-serif;left:895.5px;transform-origin:0 50%;transform:scaleX(0.8476);">Type (filtered)</span>
<span class="t" style="top:152.8px;font-size:8.3px;line-height:10.79px;color:#222;font-family:'Liberation Sans','Noto Sans CJK JP',sans-serif;left:960px;transform-origin:0 50%;transform:scaleX(0.8465);">State</span>
<span class="t" style="top:152.8px;font-size:8.3px;line-height:10.79px;color:#222;font-family:'Liberation Sans','Noto Sans CJK JP',sans-serif;left:996px;transform-origin:0 50%;transform:scaleX(0.8012);">Order</span>
<span class="t" style="top:152.8px;font-size:8.3px;line-height:10.79px;color:#222;font-family:'Liberation Sans','Noto Sans CJK JP',sans-serif;left:1022.9px;transform-origin:0 50%;transform:scaleX(0.8077);">Parent Path</span>
<div style="left:803.5px;top:163.3px;width:272px;height:7.5px;background:#7b98ea;"></div>
<div style="left:803.5px;top:174.3px;width:272px;height:7.5px;background:#f4f4f4;border-top:1px solid #c9c9c9;border-bottom:1px solid #c9c9c9;box-sizing:border-box;"></div>
<div style="left:804px;top:174.8px;width:9px;height:6.5px;background:#f0f0f0;border-right:1px solid #9a9a9a;box-sizing:border-box;"></div>
<span class="t" style="top:173.9px;font-size:6px;line-height:7.8px;color:#111;font-family:'Liberation Sans','Noto Sans CJK JP',sans-serif;left:806px;transform-origin:0 50%;">◂</span>
<div style="left:803.5px;top:182px;width:272px;height:6px;background:#e3e3e3;border-bottom:1px solid #c0c0c0;box-sizing:border-box;"></div>
<div style="left:803.5px;top:188px;width:272px;height:12.5px;background:#f0f0f0;"></div>
<svg style="left:804px;top:189px" width="12" height="11" viewBox="0 0 12 11"><path d="M1 6 L5 3.500 L9 6 L5 8.500 Z" fill="#2a9be8"/><path d="M3 4 L7 1.500 L11 4 L7 6.500 Z" fill="#d04a8a" opacity="0.9"/><path d="M3 8 L7 5.500 L11 8 L7 10.500 Z" fill="#3cb85a" opacity="0.9"/><path d="M1 6 L5 3.500 L9 6 L5 8.500 Z" fill="#2a7be0" opacity="0.8"/></svg>
<span class="t" style="top:189.6px;font-size:8.3px;line-height:10.79px;color:#222;font-family:'Liberation Sans','Noto Sans CJK JP',sans-serif;left:816.5px;transform-origin:0 50%;transform:scaleX(0.8173);">Objects</span>
<div style="left:843px;top:193px;width:232px;height:1px;background:#bfbfbf;"></div>
<div style="left:843px;top:196px;width:232px;height:1px;background:#bfbfbf;"></div>
<div style="left:972px;top:192.5px;width:10px;height:5px;background:#f0f0f0;"></div>
<div style="left:972.5px;top:193px;width:1px;height:4.5px;background:#c4c4c4;"></div>
<div style="left:974.5px;top:193px;width:1px;height:4.5px;background:#c4c4c4;"></div>
<div style="left:976.5px;top:193px;width:1px;height:4.5px;background:#c4c4c4;"></div>
<div style="left:978.5px;top:193px;width:1px;height:4.5px;background:#c4c4c4;"></div>
<div style="left:980.5px;top:193px;width:1px;height:4.5px;background:#c4c4c4;"></div>
<div style="left:803.5px;top:200.5px;width:272px;height:11px;background:#f0f0f0;border-top:1px solid #fff;border-bottom:1px solid #a8a8a8;box-sizing:border-box;"></div>
<div style="left:930px;top:201.5px;width:1px;height:9.5px;background:#a8a8a8;"></div>
<div style="left:931px;top:201.5px;width:1px;height:9.5px;background:#fff;"></div>
<div style="left:957px;top:201.5px;width:1px;height:9.5px;background:#a8a8a8;"></div>
<div style="left:958px;top:201.5px;width:1px;height:9.5px;background:#fff;"></div>
<div style="left:980.5px;top:201.5px;width:1px;height:9.5px;background:#a8a8a8;"></div>
<div style="left:981.5px;top:201.5px;width:1px;height:9.5px;background:#fff;"></div>
<div style="left:1008px;top:201.5px;width:1px;height:9.5px;background:#a8a8a8;"></div>
<div style="left:1009px;top:201.5px;width:1px;height:9.5px;background:#fff;"></div>
<span class="t" style="top:202.93px;font-size:5.5px;line-height:7.15px;color:#222;font-family:'Liberation Sans','Noto Sans CJK JP',sans-serif;left:805px;transform-origin:0 50%;">▼</span>
<span class="t" style="top:201.6px;font-size:8.3px;line-height:10.79px;color:#222;font-family:'Liberation Sans','Noto Sans CJK JP',sans-serif;left:812px;transform-origin:0 50%;transform:scaleX(0.7452);">Name</span>
<span class="t" style="top:203.75px;font-size:5px;line-height:6.5px;color:#444;font-family:'Liberation Sans','Noto Sans CJK JP',sans-serif;left:924px;transform-origin:0 50%;">△</span>
<span class="t" style="top:201.6px;font-size:8.3px;line-height:10.79px;color:#222;font-family:'Liberation Sans','Noto Sans CJK JP',sans-serif;left:932.3px;transform-origin:0 50%;transform:scaleX(0.7666);">Value</span>
<span class="t" style="top:201.6px;font-size:8.3px;line-height:10.79px;color:#222;font-family:'Liberation Sans','Noto Sans CJK JP',sans-serif;left:959.2px;transform-origin:0 50%;transform:scaleX(0.7345);">Kind</span>
<span class="t" style="top:201.6px;font-size:8.3px;line-height:10.79px;color:#222;font-family:'Liberation Sans','Noto Sans CJK JP',sans-serif;left:982.7px;transform-origin:0 50%;transform:scaleX(0.7705);">Mode</span>
<div style="left:803.5px;top:211.3px;width:272px;height:5.7px;background:#33446e;"></div>
<div style="left:816px;top:213.5px;width:5px;height:3.5px;background:#5aa0e0;"></div>
<div style="left:824px;top:214.5px;width:8px;height:1.5px;background:#8a98b8;"></div>
<div style="left:932px;top:214.5px;width:3px;height:1.5px;background:#8a98b8;"></div>
<div style="left:959px;top:214.5px;width:12px;height:1.5px;background:#8a98b8;"></div>
<div style="left:982px;top:214.5px;width:14px;height:1.5px;background:#8a98b8;"></div>
<div style="left:441px;top:499px;width:634px;height:62px;background:#fff;"></div>
<div style="left:442.5px;top:499px;width:1.2px;height:62px;background:#8a8a8a;"></div>
<span class="t" style="top:493.12px;font-size:7.2px;line-height:9.36px;color:#3436b4;font-family:'Liberation Mono','Noto Sans CJK JP',monospace;left:445px;transform-origin:0 50%;"># ** Note: (vsim-3812) design</span>
<span class="t" style="top:503.62px;font-size:7.2px;line-height:9.36px;color:#3436b4;font-family:'Liberation Mono','Noto Sans CJK JP',monospace;left:445px;transform-origin:0 50%;">#  Note : MAX 10 PLL was reset</span>
<span class="t" style="top:513.02px;font-size:7.2px;line-height:9.36px;color:#3436b4;font-family:'Liberation Mono','Noto Sans CJK JP',monospace;left:445px;transform-origin:0 50%;transform:scaleX(1.0041);"># Time: 50000  Instance: tb_top.u0.u0.altpll_component.cycloneiii_pll.pll3</span>
<span class="t" style="top:522.42px;font-size:7.2px;line-height:9.36px;color:#3436b4;font-family:'Liberation Mono','Noto Sans CJK JP',monospace;left:445px;transform-origin:0 50%;">#  Note : MAX 10 PLL locked to incoming clock</span>
<span class="t" style="top:531.82px;font-size:7.2px;line-height:9.36px;color:#3436b4;font-family:'Liberation Mono','Noto Sans CJK JP',monospace;left:445px;transform-origin:0 50%;"># Time: 330000  Instance: tb_top.u0.u0.altpll_component.cycloneiii_pll.pll3</span>
<span class="t" style="top:549.06px;font-size:7.6px;line-height:9.88px;color:#3a3a78;font-family:'Liberation Sans','Noto Sans CJK JP',sans-serif;left:444px;transform-origin:0 50%;transform:scaleX(0.8349);">VSIM 6&gt;</span>
<div style="left:441px;top:561px;width:634px;height:15px;background:#f0f0f0;border-top:1px solid #d4d4d4;box-sizing:border-box;"></div>
<div style="left:442.5px;top:562.5px;width:208.5px;height:12.0px;box-sizing:border-box;border:1px solid #a6a6a6;border-right-color:#fff;border-bottom-color:#fff;background:#f0f0f0;"></div>
<div style="left:652.5px;top:562.5px;width:46.5px;height:12.0px;box-sizing:border-box;border:1px solid #a6a6a6;border-right-color:#fff;border-bottom-color:#fff;background:#f0f0f0;"></div>
<div style="left:700.5px;top:562.5px;width:123.5px;height:12.0px;box-sizing:border-box;border:1px solid #a6a6a6;border-right-color:#fff;border-bottom-color:#fff;background:#f0f0f0;"></div>
<div style="left:825.5px;top:562.5px;width:249.5px;height:12.0px;box-sizing:border-box;border:1px solid #a6a6a6;border-right-color:#fff;border-bottom-color:#fff;background:#f0f0f0;"></div>
<span class="t" style="top:564.97px;font-size:8.2px;line-height:10.66px;color:#222;font-family:'Liberation Sans','Noto Sans CJK JP',sans-serif;left:654px;transform-origin:0 50%;transform:scaleX(0.8469);">Project : work</span>
<span class="t" style="top:564.97px;font-size:8.2px;line-height:10.66px;color:#222;font-family:'Liberation Sans','Noto Sans CJK JP',sans-serif;left:702.5px;transform-origin:0 50%;transform:scaleX(0.8275);">Now: 2,204,130 ns   Delta: 7</span>
<span class="t" style="top:564.97px;font-size:8.2px;line-height:10.66px;color:#222;font-family:'Liberation Sans','Noto Sans CJK JP',sans-serif;left:826.8px;transform-origin:0 50%;transform:scaleX(0.8604);">/tb_top/reset_n</span>
<div style="left:239.5px;top:215px;width:835.5px;height:289px;background:rgba(0,0,0,0.13);filter:blur(2.500px);"></div>
<div style="left:242.5px;top:217px;width:832.5px;height:283px;background:#f0f0f0;border-left:1px solid #8f8f8f;border-top:1px solid #9a9a9a;border-bottom:1px solid #9a9a9a;box-sizing:border-box;"></div>
<div style="left:243.5px;top:218px;width:831.5px;height:32px;background:#fff;"></div>
<div style="left:246px;top:222.5px;width:8.5px;height:8px;background:#1f2a33;"></div>
<div style="left:247.5px;top:224.5px;width:2.5px;height:4px;background:#3fae5a;"></div>
<div style="left:251px;top:223.5px;width:2.5px;height:3px;background:#e8e8e8;"></div>
<span class="t" style="top:221.45px;font-size:9px;line-height:11.7px;color:#111;font-family:'Liberation Sans','Noto Sans CJK JP',sans-serif;left:259px;transform-origin:0 50%;transform:scaleX(0.8601);">Wave</span>
<span class="t" style="top:236.75px;font-size:9px;line-height:11.7px;color:#1a1a1a;font-family:'Liberation Sans','Noto Sans CJK JP',sans-serif;left:246px;transform-origin:0 50%;transform:scaleX(0.8611);">File</span>
<span class="t" style="top:236.75px;font-size:9px;line-height:11.7px;color:#1a1a1a;font-family:'Liberation Sans','Noto Sans CJK JP',sans-serif;left:266px;transform-origin:0 50%;transform:scaleX(0.8701);">Edit</span>
<span class="t" style="top:236.75px;font-size:9px;line-height:11.7px;color:#1a1a1a;font-family:'Liberation Sans','Noto Sans CJK JP',sans-serif;left:287px;transform-origin:0 50%;transform:scaleX(0.8265);">View</span>
<span class="t" style="top:236.75px;font-size:9px;line-height:11.7px;color:#1a1a1a;font-family:'Liberation Sans','Noto Sans CJK JP',sans-serif;left:311px;transform-origin:0 50%;transform:scaleX(0.8429);">Add</span>
<span class="t" style="top:236.75px;font-size:9px;line-height:11.7px;color:#1a1a1a;font-family:'Liberation Sans','Noto Sans CJK JP',sans-serif;left:333px;transform-origin:0 50%;transform:scaleX(0.8592);">Format</span>
<span class="t" style="top:236.75px;font-size:9px;line-height:11.7px;color:#1a1a1a;font-family:'Liberation Sans','Noto Sans CJK JP',sans-serif;left:365px;transform-origin:0 50%;transform:scaleX(0.8089);">Tools</span>
<span class="t" style="top:236.75px;font-size:9px;line-height:11.7px;color:#1a1a1a;font-family:'Liberation Sans','Noto Sans CJK JP',sans-serif;left:390px;transform-origin:0 50%;transform:scaleX(0.7997);">Bookmarks</span>
<span class="t" style="top:236.75px;font-size:9px;line-height:11.7px;color:#1a1a1a;font-family:'Liberation Sans','Noto Sans CJK JP',sans-serif;left:434px;transform-origin:0 50%;transform:scaleX(0.8590);">Window</span>
<span class="t" style="top:236.75px;font-size:9px;line-height:11.7px;color:#1a1a1a;font-family:'Liberation Sans','Noto Sans CJK JP',sans-serif;left:470px;transform-origin:0 50%;transform:scaleX(0.8101);">Help</span>
<div style="left:243.5px;top:249.5px;width:831.5px;height:11.5px;background:linear-gradient(#e4ecf8 0,#a9c0e4 18%,#7d9fd6 50%,#a5bde3 82%,#dfe8f6 100%);"></div>
<div style="left:305px;top:252.2px;width:770px;height:1px;background:#3a5c9e;"></div>
<div style="left:305px;top:254.6px;width:770px;height:1px;background:#3a5c9e;"></div>
<div style="left:305px;top:257px;width:770px;height:1px;background:#3a5c9e;"></div>
<div style="left:809px;top:251px;width:11px;height:8px;background:#9db6e0;"></div>
<div style="left:809.5px;top:251.5px;width:1px;height:7px;background:#c9d8f0;"></div>
<div style="left:811.7px;top:251.5px;width:1px;height:7px;background:#c9d8f0;"></div>
<div style="left:813.9px;top:251.5px;width:1px;height:7px;background:#c9d8f0;"></div>
<div style="left:816.1px;top:251.5px;width:1px;height:7px;background:#c9d8f0;"></div>
<div style="left:818.3px;top:251.5px;width:1px;height:7px;background:#c9d8f0;"></div>
<div style="left:244.5px;top:251px;width:7.5px;height:8px;background:#1f2a33;"></div>
<div style="left:245.8px;top:253px;width:2px;height:4px;background:#3fae5a;"></div>
<span class="t" style="top:249.8px;font-size:8.3px;line-height:10.79px;color:#1f3560;font-family:'Liberation Sans','Noto Sans CJK JP',sans-serif;left:256px;transform-origin:0 50%;transform:scaleX(0.8339);">Wave - Default</span>
<div style="left:245px;top:262px;width:210.5px;height:19.5px;box-sizing:border-box;border:1px solid #fdfdfd;border-right-color:#bcbcbc;border-bottom-color:#bcbcbc;background:#f0f0f0;"></div>
<div style="left:247.5px;top:264.5px;width:1px;height:14.5px;background:#c6c6c6;"></div>
<div style="left:459px;top:262px;width:74.5px;height:19.5px;box-sizing:border-box;border:1px solid #fdfdfd;border-right-color:#bcbcbc;border-bottom-color:#bcbcbc;background:#f0f0f0;"></div>
<div style="left:461.5px;top:264.5px;width:1px;height:14.5px;background:#c6c6c6;"></div>
<div style="left:537px;top:262px;width:258.5px;height:19.5px;box-sizing:border-box;border:1px solid #fdfdfd;border-right-color:#bcbcbc;border-bottom-color:#bcbcbc;background:#f0f0f0;"></div>
<div style="left:539.5px;top:264.5px;width:1px;height:14.5px;background:#c6c6c6;"></div>
<div style="left:799.5px;top:262px;width:106.5px;height:19.5px;box-sizing:border-box;border:1px solid #fdfdfd;border-right-color:#bcbcbc;border-bottom-color:#bcbcbc;background:#f0f0f0;"></div>
<div style="left:802.0px;top:264.5px;width:1px;height:14.5px;background:#c6c6c6;"></div>
<div style="left:909px;top:262px;width:93.5px;height:19.5px;box-sizing:border-box;border:1px solid #fdfdfd;border-right-color:#bcbcbc;border-bottom-color:#bcbcbc;background:#f0f0f0;"></div>
<div style="left:911.5px;top:264.5px;width:1px;height:14.5px;background:#c6c6c6;"></div>
<svg style="left:251.90px;top:266.00px;opacity:1" width="11" height="11" viewBox="0 0 11 11"><path d="M2.500 1 H7 L9 3 V10 H2.500 Z" fill="#fff" stroke="#555" stroke-width="0.9"/><path d="M4 4.500 H7 M4 6.500 H7.500 M4 8.200 H6.500" stroke="#777" stroke-width="0.7"/></svg>
<svg style="left:271.50px;top:266.00px;opacity:1" width="11" height="11" viewBox="0 0 11 11"><path d="M0.800 9.500 V3 H4 L5 4 H8.500 V5.200" fill="#e9c64b" stroke="#6b5513" stroke-width="0.8"/><path d="M0.800 9.500 L2.800 5.200 H10.600 L8.600 9.500 Z" fill="#f3d768" stroke="#6b5513" stroke-width="0.8"/></svg>
<svg style="left:285.50px;top:266.00px;opacity:1" width="11" height="11" viewBox="0 0 11 11"><rect x="1.200" y="1.200" width="8.600" height="8.600" fill="#2a2a2a"/><rect x="3" y="1.200" width="5" height="3.300" fill="#e8e1b8"/><rect x="2.800" y="6.200" width="5.400" height="3.600" fill="#d2b13a"/></svg>
<svg style="left:299.20px;top:266.00px;opacity:0.65" width="11" height="11" viewBox="0 0 11 11"><path d="M1.500 5 Q3 1.500 7.500 3 L7 1.500 L10 4 L6.500 5.500 L7 4.200 Q4 3.200 3 5.500 Z M9.500 6.500 Q8 10 3.500 8.500 L4 10 L1 7.500 L4.500 6 L4 7.300 Q7 8.300 8 6 Z" fill="#9ccb8f"/></svg>
<svg style="left:312.90px;top:266.00px;opacity:1" width="11" height="11" viewBox="0 0 11 11"><path d="M3 1.500 H8.500 L9 4 H2.500 Z" fill="#fff" stroke="#444" stroke-width="0.7"/><rect x="0.800" y="4" width="9.600" height="4.200" rx="0.8" fill="#4a4a4a"/><rect x="2.500" y="7" width="6.200" height="3" fill="#ddd" stroke="#444" stroke-width="0.6"/></svg>
<svg style="left:333.10px;top:266.00px;opacity:1" width="11" height="11" viewBox="0 0 11 11"><path d="M3.500 1 L6.500 7 M7.500 1 L4.500 7" stroke="#3c55c8" stroke-width="1"/><circle cx="3.800" cy="8.500" r="1.600" fill="none" stroke="#3c55c8" stroke-width="1"/><circle cx="7.400" cy="8.500" r="1.600" fill="none" stroke="#3c55c8" stroke-width="1"/></svg>
<svg style="left:346.50px;top:266.00px;opacity:1" width="11" height="11" viewBox="0 0 11 11"><rect x="1" y="1" width="5.500" height="6.500" fill="#dfe6f5" stroke="#4b5f96" stroke-width="0.8"/><rect x="4.200" y="3.500" width="5.600" height="6.500" fill="#eef2fb" stroke="#4b5f96" stroke-width="0.8"/></svg>
<svg style="left:360.30px;top:266.00px;opacity:1" width="11" height="11" viewBox="0 0 11 11"><rect x="1" y="2" width="7.500" height="8" rx="0.8" fill="#6d5f45" stroke="#3d3427" stroke-width="0.7"/><rect x="3" y="1" width="3.500" height="2" fill="#999"/><rect x="4.500" y="4.500" width="5.500" height="5.800" fill="#eef2fb" stroke="#4b5f96" stroke-width="0.7"/></svg>
<svg style="left:374.20px;top:266.00px;opacity:1" width="11" height="11" viewBox="0 0 11 11"><path d="M2 4.500 Q5.500 0.500 9 4.500 Q10 7 7.500 8.500" fill="none" stroke="#333" stroke-width="1"/><path d="M0.800 2.200 L1.200 6 L4.800 5 Z" fill="#333"/><path d="M2 10 H9" stroke="#333" stroke-width="0.8"/></svg>
<svg style="left:387.10px;top:266.00px;opacity:1" width="11" height="11" viewBox="0 0 11 11"><path d="M9 4.500 Q5.500 0.500 2 4.500 Q1 7 3.500 8.500" fill="none" stroke="#aaa" stroke-width="1"/><path d="M10.200 2.200 L9.800 6 L6.200 5 Z" fill="#aaa"/><path d="M2 10 H9" stroke="#aaa" stroke-width="0.8"/></svg>
<svg style="left:408.30px;top:266.00px;opacity:0.9" width="11" height="11" viewBox="0 0 11 11"><circle cx="5.500" cy="5.500" r="4.500" fill="#7fc36e" stroke="#4f9a40" stroke-width="0.7"/><path d="M5.500 3 V8 M3 5.500 H8" stroke="#fff" stroke-width="1.300"/></svg>
<svg style="left:427.00px;top:266.00px;opacity:1" width="11" height="11" viewBox="0 0 11 11"><path d="M1 9.800 V5.500 L2.800 1.500 H4.600 V9.800 Z M10 9.800 V5.500 L8.200 1.500 H6.400 V9.800 Z" fill="#111"/><rect x="4.300" y="3.500" width="2.400" height="2.500" fill="#111"/></svg>
<svg style="left:439.50px;top:266.00px;opacity:1" width="11" height="11" viewBox="0 0 11 11"><rect x="1" y="1" width="3" height="3" fill="none" stroke="#222" stroke-width="0.8"/><rect x="1" y="6.500" width="3" height="3" fill="none" stroke="#222" stroke-width="0.8"/><path d="M5.500 2.500 H10 M5.500 8 H10 M2.500 4 V6.500" stroke="#222" stroke-width="0.9"/></svg>
<svg style="left:465.50px;top:266.00px;opacity:1" width="11" height="11" viewBox="0 0 11 11"><path d="M3 2 Q6 4 3.500 6 Q2 8 5 9.500 M6 1.500 L8.500 4 L6 5" fill="none" stroke="#8892a8" stroke-width="0.9"/></svg>
<svg style="left:479.30px;top:266.00px;opacity:1" width="11" height="11" viewBox="0 0 11 11"><rect x="1.500" y="2" width="8" height="7.500" fill="#f4f7fc" stroke="#9aa6c0" stroke-width="0.8"/><path d="M3.500 4 Q5.500 2.500 6.500 4.500 Q6.500 6 5 6.500 M5 8 V8.500" stroke="#7f9fd8" stroke-width="0.9" fill="none"/></svg>
<svg style="left:492.50px;top:266.00px;opacity:1" width="11" height="11" viewBox="0 0 11 11"><rect x="1" y="4" width="9" height="5.500" fill="#e4e8f2" stroke="#a0a8bc" stroke-width="0.7"/><path d="M2.500 1.500 V4 M5.500 1.500 V4 M8.500 1.500 V4 M3.500 5.500 V8 M6.500 5.500 V8" stroke="#a0a8bc" stroke-width="0.8"/></svg>
<svg style="left:505.90px;top:266.00px;opacity:1" width="11" height="11" viewBox="0 0 11 11"><path d="M2 9 Q1 3 4 1.500 Q5.500 4 5.500 8 M9 9 Q10 3 7 1.500 Q5.500 4 5.500 8" fill="#d8d8d8" stroke="#2a1a1a" stroke-width="0.9"/><circle cx="2.500" cy="9.200" r="1.400" fill="#b02020"/><circle cx="8.500" cy="9.200" r="1.400" fill="#b02020"/></svg>
<svg style="left:519.90px;top:266.00px;opacity:1" width="11" height="11" viewBox="0 0 11 11"><rect x="2" y="1.500" width="7" height="8" fill="#d9dce4" stroke="#555" stroke-width="0.7"/><path d="M2.500 2 L9.500 9.500 M9.500 2 L2.500 9.500" stroke="#c22" stroke-width="1.300"/></svg>
<svg style="left:545.70px;top:266.00px;opacity:1" width="11" height="11" viewBox="0 0 11 11"><rect x="0.500" y="0.500" width="10" height="10" fill="#e9f2e6" stroke="#9b9b9b" stroke-width="0.6"/><rect x="2" y="2" width="4.500" height="4.500" rx="1" fill="none" stroke="#157a1c" stroke-width="1.200"/><rect x="4.800" y="4.800" width="4.200" height="4.200" rx="1" fill="none" stroke="#157a1c" stroke-width="1.200"/></svg>
<svg style="left:560.50px;top:266.00px;opacity:1" width="11" height="11" viewBox="0 0 11 11"><path d="M5.500 0.800 L9.800 5.500 H7.200 V10.200 H3.800 V5.500 H1.200 Z" fill="#1b1b1b"/></svg>
<svg style="left:574.50px;top:266.00px;opacity:1" width="11" height="11" viewBox="0 0 11 11"><path d="M0.500 5.500 L5.200 1.300 V3.800 H10.500 V7.200 H5.200 V9.700 Z" fill="#1b1b1b"/></svg>
<svg style="left:588.00px;top:266.00px;opacity:1" width="11" height="11" viewBox="0 0 11 11"><path d="M10.500 5.500 L5.800 1.300 V3.800 H0.500 V7.200 H5.800 V9.700 Z" fill="#9d9d9d"/></svg>
<svg style="left:608.00px;top:266.00px;opacity:1" width="11" height="11" viewBox="0 0 11 11"><rect x="1" y="1" width="6" height="9" fill="#fff" stroke="#555" stroke-width="0.7"/><path d="M2.500 3 H5 M2.500 5 H5.500 M2.500 7 H4.500" stroke="#555" stroke-width="0.6"/><path d="M8.500 1.500 V8 M7 6.500 L8.500 9.500 L10 6.500" stroke="#1f3fc0" stroke-width="1" fill="none"/></svg>
<svg style="left:672.50px;top:266.00px;opacity:1" width="11" height="11" viewBox="0 0 11 11"><rect x="1" y="1" width="6" height="9" fill="#fff" stroke="#555" stroke-width="0.7"/><path d="M2.500 3 H5 M2.500 5 H5.500 M2.500 7 H4.500" stroke="#555" stroke-width="0.6"/><path d="M8.500 1.500 V8 M7 6.500 L8.500 9.500 L10 6.500" stroke="#1f3fc0" stroke-width="1" fill="none"/></svg>
<svg style="left:686.50px;top:266.00px;opacity:1" width="11" height="11" viewBox="0 0 11 11"><rect x="1" y="1" width="6" height="9" fill="#fff" stroke="#555" stroke-width="0.7"/><path d="M2.500 3 H5 M2.500 5 H5.500 M2.500 7 H4.500" stroke="#555" stroke-width="0.6"/><path d="M8.500 1.500 V8 M7 6.500 L8.500 9.500 L10 6.500" stroke="#b03030" stroke-width="1" fill="none"/></svg>
<svg style="left:700.10px;top:266.00px;opacity:1" width="11" height="11" viewBox="0 0 11 11"><rect x="1" y="1" width="6" height="9" fill="#fff" stroke="#555" stroke-width="0.7"/><path d="M2.500 3 H5 M2.500 5 H5.500 M2.500 7 H4.500" stroke="#555" stroke-width="0.6"/><path d="M8.500 1.500 V8 M7 6.500 L8.500 9.500 L10 6.500" stroke="#1f3fc0" stroke-width="1" fill="none"/></svg>
<svg style="left:713.50px;top:266.00px;opacity:1" width="11" height="11" viewBox="0 0 11 11"><rect x="1.500" y="1" width="6.500" height="9" fill="#fff" stroke="#444" stroke-width="0.7"/><path d="M2 1.500 L9.500 9.500 M9.500 1.500 L2 9.500" stroke="#c0201c" stroke-width="1.400"/></svg>
<svg style="left:727.00px;top:266.00px;opacity:1" width="11" height="11" viewBox="0 0 11 11"><path d="M3.500 1 H7.500 L10 3.500 V7.500 L7.500 10 H3.500 L1 7.500 V3.500 Z" fill="#e25a4c"/><path d="M3 5.500 H8 M5.500 3.500 V7.500" stroke="#f6c8c2" stroke-width="0.9"/></svg>
<svg style="left:749.10px;top:266.00px;opacity:1" width="11" height="11" viewBox="0 0 11 11"><rect x="1" y="2" width="8" height="8" fill="#c9c4a6" stroke="#77745f" stroke-width="0.6"/><rect x="5" y="4" width="3" height="6" fill="#e6c54a"/><rect x="2" y="1" width="3" height="4" fill="#8b8b8b"/></svg>
<svg style="left:764.50px;top:266.00px;opacity:1" width="11" height="11" viewBox="0 0 11 11"><rect x="1" y="2" width="8" height="8" fill="#c4c0b2" stroke="#77745f" stroke-width="0.6"/><rect x="5" y="4" width="3" height="6" fill="#dcc14f"/><rect x="2" y="1" width="4" height="4" fill="#a86a6a"/></svg>
<svg style="left:779.50px;top:266.00px;opacity:1" width="11" height="11" viewBox="0 0 11 11"><path d="M3 10 L2 6 L1 4.500 L2.500 4.200 L3.200 5.200 V2 H4.500 V1.200 H6 V2 H7.300 V2.800 H8.600 V7 L8 10 Z" fill="#f3f3f3" stroke="#333" stroke-width="0.8"/></svg>
<svg style="left:805.50px;top:266.00px;opacity:1" width="11" height="11" viewBox="0 0 11 11"><path d="M5.500 10.200 L2 6 H4.300 V3.800 H6.700 V6 H9 Z" fill="#1f3fd0"/><rect x="4.300" y="0.800" width="2.400" height="2" fill="#1f3fd0"/></svg>
<svg style="left:818.80px;top:266.00px;opacity:1" width="11" height="11" viewBox="0 0 11 11"><path d="M1 8 Q1.500 2.500 6.500 3 V1 L10.500 4.500 L6.500 8 V5.800 Q4 5.500 3.500 8 Z" fill="#1f3fd0"/></svg>
<svg style="left:832.80px;top:266.00px;opacity:1" width="11" height="11" viewBox="0 0 11 11"><path d="M5.500 0.800 L2 5 H4.300 V7.200 H6.700 V5 H9 Z" fill="#1f3fd0"/><rect x="4.300" y="8.200" width="2.400" height="2" fill="#1f3fd0"/></svg>
<svg style="left:853.50px;top:266.00px;opacity:1" width="11" height="11" viewBox="0 0 11 11"><path d="M5.500 7.500 L2 3.800 H4.300 V0.800 H6.700 V3.800 H9 Z" fill="#1f3fd0"/><path d="M1.500 9.500 H9.500" stroke="#1f3fd0" stroke-width="1.600" stroke-dasharray="2 1"/></svg>
<svg style="left:871.50px;top:266.00px;opacity:1" width="11" height="11" viewBox="0 0 11 11"><path d="M1 7 Q1.500 1.500 6.500 2 V0.500 L10.500 3.500 L6.500 6.500 V4.800 Q4 4.500 3.500 7 Z" fill="#1f3fd0"/><path d="M1.500 9.500 H9.500" stroke="#1f3fd0" stroke-width="1.600" stroke-dasharray="2 1"/></svg>
<svg style="left:891.50px;top:266.00px;opacity:1" width="11" height="11" viewBox="0 0 11 11"><path d="M5.500 0.800 L2 4.500 H4.300 V7.500 H6.700 V4.500 H9 Z" fill="#1f3fd0"/><path d="M1.500 9.500 H9.500" stroke="#1f3fd0" stroke-width="1.600" stroke-dasharray="2 1"/></svg>
<svg style="left:916.50px;top:266.00px;opacity:1" width="11" height="11" viewBox="0 0 11 11"><rect x="1" y="1.500" width="7" height="5.500" rx="1" fill="#a8cdea"/><rect x="4.500" y="5" width="5" height="5" rx="1" fill="#c8c27a"/></svg>
<svg style="left:935.10px;top:266.00px;opacity:1" width="11" height="11" viewBox="0 0 11 11"><rect x="1" y="1.500" width="7" height="5.500" rx="1" fill="#5a9ad6"/><rect x="4.500" y="5" width="5" height="5" rx="1" fill="#e0883c"/></svg>
<svg style="left:954.30px;top:266.00px;opacity:1" width="11" height="11" viewBox="0 0 11 11"><rect x="1" y="1.500" width="7" height="5.500" rx="1" fill="#e9a03c"/><rect x="4.500" y="5" width="5" height="5" rx="1" fill="#4a86c8"/></svg>
<svg style="left:968.20px;top:266.00px;opacity:1" width="11" height="11" viewBox="0 0 11 11"><rect x="1" y="1.500" width="7" height="5.500" rx="1" fill="#5a9ad6"/><rect x="4.500" y="5" width="5" height="5" rx="1" fill="#dfe6f2"/></svg>
<svg style="left:987.50px;top:266.00px;opacity:1" width="11" height="11" viewBox="0 0 11 11"><rect x="1" y="1.500" width="7" height="5.500" rx="1" fill="#5a9ad6"/><rect x="4.500" y="5" width="5" height="5" rx="1" fill="#5fae4c"/></svg>
<div style="left:265.50px;top:271.00px;width:0;height:0;border-left:1.500px solid transparent;border-right:1.500px solid transparent;border-top:2px solid #222;"></div>
<div style="left:421.00px;top:271.00px;width:0;height:0;border-left:1.500px solid transparent;border-right:1.500px solid transparent;border-top:2px solid #222;"></div>
<div style="left:865.50px;top:271.00px;width:0;height:0;border-left:1.500px solid transparent;border-right:1.500px solid transparent;border-top:2px solid #222;"></div>
<div style="left:885.10px;top:271.00px;width:0;height:0;border-left:1.500px solid transparent;border-right:1.500px solid transparent;border-top:2px solid #222;"></div>
<div style="left:929.10px;top:271.00px;width:0;height:0;border-left:1.500px solid transparent;border-right:1.500px solid transparent;border-top:2px solid #222;"></div>
<div style="left:947.80px;top:271.00px;width:0;height:0;border-left:1.500px solid transparent;border-right:1.500px solid transparent;border-top:2px solid #222;"></div>
<div style="left:980.50px;top:271.00px;width:0;height:0;border-left:1.500px solid transparent;border-right:1.500px solid transparent;border-top:2px solid #222;"></div>
<div style="left:328.2px;top:265px;width:1px;height:13.5px;background:#b8b8b8;"></div>
<div style="left:402.9px;top:265px;width:1px;height:13.5px;background:#b8b8b8;"></div>
<div style="left:603.0px;top:265px;width:1px;height:13.5px;background:#b8b8b8;"></div>
<div style="left:743.2px;top:265px;width:1px;height:13.5px;background:#b8b8b8;"></div>
<div style="left:847.2px;top:265px;width:1px;height:13.5px;background:#b8b8b8;"></div>
<div style="left:623.5px;top:264.5px;width:38px;height:14px;background:#fff;border:1px solid #c8c8c8;box-sizing:border-box;"></div>
<span class="t" style="top:266.28px;font-size:8.5px;line-height:11.05px;color:#555;font-family:'Liberation Sans','Noto Sans CJK JP',sans-serif;right:625.5px;transform-origin:100% 50%;transform:scaleX(1.0575);">100 ps</span>
<div style="left:661.5px;top:264.5px;width:6px;height:14px;background:#e8e8e8;"></div>
<span class="t" style="top:264.75px;font-size:5px;line-height:6.5px;color:#222;font-family:'Liberation Sans','Noto Sans CJK JP',sans-serif;left:662.2px;transform-origin:0 50%;">▴</span>
<span class="t" style="top:271.75px;font-size:5px;line-height:6.5px;color:#222;font-family:'Liberation Sans','Noto Sans CJK JP',sans-serif;left:662.2px;transform-origin:0 50%;">▾</span>
<div style="left:245px;top:282.5px;width:110.5px;height:19.0px;box-sizing:border-box;border:1px solid #fdfdfd;border-right-color:#bcbcbc;border-bottom-color:#bcbcbc;background:#f0f0f0;"></div>
<div style="left:247.5px;top:285.0px;width:1px;height:14.0px;background:#c6c6c6;"></div>
<div style="left:359px;top:282.5px;width:116px;height:19.0px;box-sizing:border-box;border:1px solid #fdfdfd;border-right-color:#bcbcbc;border-bottom-color:#bcbcbc;background:#f0f0f0;"></div>
<div style="left:361.5px;top:285.0px;width:1px;height:14.0px;background:#c6c6c6;"></div>
<div style="left:478.5px;top:282.5px;width:223.5px;height:19.0px;box-sizing:border-box;border:1px solid #fdfdfd;border-right-color:#bcbcbc;border-bottom-color:#bcbcbc;background:#f0f0f0;"></div>
<div style="left:481.0px;top:285.0px;width:1px;height:14.0px;background:#c6c6c6;"></div>
<div style="left:705.5px;top:282.5px;width:89.5px;height:19.0px;box-sizing:border-box;border:1px solid #fdfdfd;border-right-color:#bcbcbc;border-bottom-color:#bcbcbc;background:#f0f0f0;"></div>
<div style="left:708.0px;top:285.0px;width:1px;height:14.0px;background:#c6c6c6;"></div>
<div style="left:802px;top:282.5px;width:117.5px;height:19.0px;box-sizing:border-box;border:1px solid #fdfdfd;border-right-color:#bcbcbc;border-bottom-color:#bcbcbc;background:#f0f0f0;"></div>
<div style="left:804.5px;top:285.0px;width:1px;height:14.0px;background:#c6c6c6;"></div>
<svg style="left:254.50px;top:286.30px;opacity:1" width="11" height="11" viewBox="0 0 11 11"><rect x="0" y="0" width="11" height="11" fill="#fff" stroke="#d0d0d0" stroke-width="0.6"/><path d="M3.500 1.500 V9 L5.300 7.300 L6.600 10 L7.700 9.500 L6.500 6.900 H8.800 Z" fill="#111"/></svg>
<svg style="left:270.10px;top:286.30px;opacity:1" width="11" height="11" viewBox="0 0 11 11"><rect x="1.500" y="1.500" width="6" height="6" fill="none" stroke="#333" stroke-width="0.9"/><rect x="3.500" y="3.500" width="4" height="4" fill="#555"/><path d="M7.500 7.500 L10 10" stroke="#333" stroke-width="1.300"/><path d="M0.500 10.500 H10.500" stroke="#999" stroke-width="0.6"/></svg>
<svg style="left:285.80px;top:286.30px;opacity:0.9" width="11" height="11" viewBox="0 0 11 11"><path d="M5.500 0.500 V10.500 M0.500 5.500 H10.500" stroke="#333" stroke-width="0.9"/><circle cx="5.500" cy="5.500" r="2.300" fill="none" stroke="#333" stroke-width="0.8"/><path d="M0.500 10.500 H10.500" stroke="#999" stroke-width="0.6"/></svg>
<svg style="left:301.70px;top:286.30px;opacity:1" width="11" height="11" viewBox="0 0 11 11"><path d="M3.500 1.500 V9 M7.500 1.500 V9" stroke="#222" stroke-width="1.100"/><path d="M0.500 9.500 H10.500" stroke="#333" stroke-width="0.9"/></svg>
<svg style="left:318.70px;top:286.30px;opacity:0.9" width="11" height="11" viewBox="0 0 11 11"><path d="M1.500 3 H5 M1.500 5.500 H4 M1.500 8 H5" stroke="#555" stroke-width="0.8"/><path d="M7 1.500 V9.500" stroke="#333" stroke-width="0.9" stroke-dasharray="1.500 1"/><rect x="6" y="3" width="4" height="5" fill="none" stroke="#777" stroke-width="0.7"/><path d="M0.500 10.500 H10.500" stroke="#999" stroke-width="0.6"/></svg>
<svg style="left:338.50px;top:286.30px;opacity:1" width="11" height="11" viewBox="0 0 11 11"><rect x="1" y="0.500" width="4.500" height="10" fill="#222"/><circle cx="3.250" cy="2.300" r="1.300" fill="#e03030"/><circle cx="3.250" cy="5.500" r="1.300" fill="#e9c030"/><circle cx="3.250" cy="8.700" r="1.300" fill="#37b537"/><path d="M7 2.500 L10.500 5.500 L7 8.500 Z" fill="none" stroke="#333" stroke-width="0.8"/></svg>
<svg style="left:364.00px;top:286.30px;opacity:1" width="11" height="11" viewBox="0 0 11 11"><rect x="2" y="7" width="7" height="3" fill="#e9c02c" stroke="#8a6d10" stroke-width="0.6"/><rect x="4.300" y="3" width="2.400" height="4.500" fill="#e9c02c" stroke="#8a6d10" stroke-width="0.6"/><path d="M7.500 1 V4 M6 2.500 H9" stroke="#8a6d10" stroke-width="0.9"/></svg>
<svg style="left:377.90px;top:286.30px;opacity:1" width="11" height="11" viewBox="0 0 11 11"><rect x="2" y="7" width="7" height="3" fill="#e9c02c" stroke="#8a6d10" stroke-width="0.6"/><rect x="4.300" y="3" width="2.400" height="4.500" fill="#e9c02c" stroke="#8a6d10" stroke-width="0.6"/><path d="M6 2.500 H9" stroke="#8a6d10" stroke-width="0.9"/></svg>
<svg style="left:392.90px;top:286.30px;opacity:1" width="11" height="11" viewBox="0 0 11 11"><path d="M1.500 9.500 H5 V1.500 H9.500" fill="none" stroke="#62b08a" stroke-width="0.8" opacity="1"/><path d="M9.500 5 H3.500 M5.500 3 L3.500 5 L5.500 7" fill="none" stroke="#2848d8" stroke-width="1" opacity="1"/></svg>
<svg style="left:405.30px;top:286.30px;opacity:1" width="11" height="11" viewBox="0 0 11 11"><path d="M1.500 9.500 H5 V1.500 H9.500" fill="none" stroke="#62b08a" stroke-width="0.8" opacity="1"/><path d="M1.500 5 H7.500 M5.500 3 L7.500 5 L5.500 7" fill="none" stroke="#2848d8" stroke-width="1" opacity="1"/></svg>
<svg style="left:419.50px;top:286.30px;opacity:1" width="11" height="11" viewBox="0 0 11 11"><path d="M1.500 9.500 H5 V1.500 H9.500" fill="none" stroke="#62b08a" stroke-width="0.8" opacity="0.75"/><path d="M3 2 L7 7 M7 4.500 V7 H4.500" fill="none" stroke="#2848d8" stroke-width="1" opacity="0.75"/></svg>
<svg style="left:433.20px;top:286.30px;opacity:1" width="11" height="11" viewBox="0 0 11 11"><path d="M1.500 9.500 H5 V1.500 H9.500" fill="none" stroke="#62b08a" stroke-width="0.8" opacity="0.75"/><path d="M3 7 L7 2 M4.500 2 H7 V4.500" fill="none" stroke="#2848d8" stroke-width="1" opacity="0.75"/></svg>
<svg style="left:446.90px;top:286.30px;opacity:0.8" width="11" height="11" viewBox="0 0 11 11"><path d="M1.500 9.500 H5 V1.500 H9.500" fill="none" stroke="#62b08a" stroke-width="0.8" opacity="0.75"/><path d="M3 2 L7 7 M7 4.500 V7 H4.500" fill="none" stroke="#2848d8" stroke-width="1" opacity="0.75"/></svg>
<svg style="left:460.50px;top:286.30px;opacity:0.8" width="11" height="11" viewBox="0 0 11 11"><path d="M1.500 9.500 H5 V1.500 H9.500" fill="none" stroke="#62b08a" stroke-width="0.8" opacity="0.75"/><path d="M3 7 L7 2 M4.500 2 H7 V4.500" fill="none" stroke="#2848d8" stroke-width="1" opacity="0.75"/></svg>
<svg style="left:484.30px;top:286.30px;opacity:1" width="11" height="11" viewBox="0 0 11 11"><path d="M1 2.500 Q4 2.500 5 5.500 Q4 8.500 1 8.500 M0.500 5.500 H10.500" fill="none" stroke="#111" stroke-width="1"/><path d="M7 3.500 L5 5.500 L7 7.500" fill="none" stroke="#2848d8" stroke-width="1.200"/></svg>
<svg style="left:504.20px;top:286.30px;opacity:1" width="11" height="11" viewBox="0 0 11 11"><path d="M10 2.500 Q6 2.500 5.500 5.500 Q6 8.500 10 8.500 M0.500 5.500 H8" fill="none" stroke="#111" stroke-width="1"/><path d="M2 3.500 L4.500 5.500 L2 7.500" fill="none" stroke="#2848d8" stroke-width="1.200"/></svg>
<svg style="left:522.90px;top:286.30px;opacity:1" width="11" height="11" viewBox="0 0 11 11"><rect x="2.500" y="2" width="5" height="7" fill="none" stroke="#111" stroke-width="0.9"/><path d="M0.500 5.500 H10.500" stroke="#111" stroke-width="0.9"/><circle cx="6.500" cy="5.500" r="1.500" fill="#3c9c3c"/></svg>
<svg style="left:658.30px;top:286.30px;opacity:0.8" width="11" height="11" viewBox="0 0 11 11"><path d="M1 9.500 V6 L3 2.500 H4.500 V9.500 Z M10 9.500 V6 L8 2.500 H6.500 V9.500 Z" fill="#a8aeb8"/><path d="M2 9.500 L4 7.500 L6 9.500" stroke="#7f93d8" stroke-width="1" fill="none"/></svg>
<svg style="left:670.20px;top:286.30px;opacity:0.8" width="11" height="11" viewBox="0 0 11 11"><path d="M1 9.500 V6 L3 2.500 H4.500 V9.500 Z M10 9.500 V6 L8 2.500 H6.500 V9.500 Z" fill="#a8aeb8"/><path d="M2 9.500 L4 7.500 L6 9.500" stroke="#7f93d8" stroke-width="1" fill="none"/></svg>
<svg style="left:685.10px;top:286.30px;opacity:0.8" width="11" height="11" viewBox="0 0 11 11"><path d="M2 8 Q1 4 4 2.500 L8.500 2 Q10 5 8 8.500 Z" fill="#8f97a6"/><path d="M4 4 L6.500 7" stroke="#c8ccd6" stroke-width="1"/></svg>
<svg style="left:711.80px;top:286.30px;opacity:1" width="11" height="11" viewBox="0 0 11 11"><circle cx="4.500" cy="4.500" r="3.300" fill="#fff" stroke="#222" stroke-width="1"/><path d="M3 4.500 H6 M4.500 3 V6" stroke="#222" stroke-width="0.8"/><path d="M7 7 L10 10" stroke="#2a3a8a" stroke-width="1.600"/></svg>
<svg style="left:725.50px;top:286.30px;opacity:1" width="11" height="11" viewBox="0 0 11 11"><circle cx="4.500" cy="4.500" r="3.300" fill="#fff" stroke="#222" stroke-width="1"/><path d="M3 4.500 H6" stroke="#222" stroke-width="0.8"/><path d="M7 7 L10 10" stroke="#2a3a8a" stroke-width="1.600"/></svg>
<svg style="left:739.20px;top:286.30px;opacity:1" width="11" height="11" viewBox="0 0 11 11"><circle cx="4.500" cy="4.500" r="3.500" fill="#1f4fa8" stroke="#0f2f6a" stroke-width="0.9"/><path d="M7 7 L10 10" stroke="#0f2f6a" stroke-width="1.800"/></svg>
<svg style="left:752.90px;top:286.30px;opacity:1" width="11" height="11" viewBox="0 0 11 11"><rect x="1.500" y="6" width="6" height="4" fill="#efc22c" stroke="#8a6d10" stroke-width="0.6"/><rect x="3.500" y="3" width="2" height="3.500" fill="#efc22c" stroke="#8a6d10" stroke-width="0.5"/><circle cx="7.500" cy="3" r="2" fill="#fff" stroke="#2a3a8a" stroke-width="0.8"/></svg>
<svg style="left:766.50px;top:286.30px;opacity:1" width="11" height="11" viewBox="0 0 11 11"><path d="M1.500 10 V7 H3.500 L4.500 4 H6 L7 7 H9 V10 Z" fill="#efc22c" stroke="#8a6d10" stroke-width="0.6"/><circle cx="7" cy="3" r="2" fill="#fff" stroke="#2a3a8a" stroke-width="0.8"/></svg>
<svg style="left:779.80px;top:286.30px;opacity:1" width="11" height="11" viewBox="0 0 11 11"><rect x="1" y="1.500" width="5.500" height="5" fill="#e4ecf8" stroke="#8a9fc8" stroke-width="0.8"/><circle cx="6.500" cy="6.500" r="2.300" fill="#f4f8ff" stroke="#7f93c8" stroke-width="0.8"/><path d="M8.200 8.200 L10.300 10.300" stroke="#7f93c8" stroke-width="1.300"/></svg>
<svg style="left:809.90px;top:286.30px;opacity:1" width="11" height="11" viewBox="0 0 11 11"><rect x="0" y="0" width="11" height="11" fill="#fff" stroke="#cfcfcf" stroke-width="0.6"/><path d="M5.500 2 V9.500 M2.500 9.500 H8.500" stroke="#3c7a3c" stroke-width="0.9"/></svg>
<svg style="left:825.50px;top:286.30px;opacity:1" width="11" height="11" viewBox="0 0 11 11"><rect x="3" y="0.500" width="5" height="10" fill="#1c3350"/><rect x="7" y="1" width="2" height="9.500" fill="#8b9bb0"/><path d="M0.500 10.500 H10.500" stroke="#666" stroke-width="0.7"/></svg>
<svg style="left:841.20px;top:286.30px;opacity:1" width="11" height="11" viewBox="0 0 11 11"><rect x="0.500" y="0.500" width="10" height="10" fill="#0f6b2a" stroke="#0a4a1c" stroke-width="0.6"/><path d="M3.500 1 V10 M7 1 V10" stroke="#2b8a45" stroke-width="0.6"/></svg>
<svg style="left:862.90px;top:286.30px;opacity:1" width="11" height="11" viewBox="0 0 11 11"><rect x="1" y="1" width="9" height="9" fill="#8a8fb0"/><path d="M4 1 V10 M7 1 V10" stroke="#a8acc6" stroke-width="0.6"/></svg>
<svg style="left:876.50px;top:286.30px;opacity:1" width="11" height="11" viewBox="0 0 11 11"><path d="M2 9.500 H5 V1.500 H9" fill="none" stroke="#8a8a7a" stroke-width="1.200"/></svg>
<svg style="left:890.30px;top:286.30px;opacity:1" width="11" height="11" viewBox="0 0 11 11"><path d="M2 9.500 H5 V1.500 H9" fill="none" stroke="#c4c4c4" stroke-width="1.200"/></svg>
<svg style="left:904.00px;top:286.30px;opacity:1" width="11" height="11" viewBox="0 0 11 11"><path d="M2 9.500 H5 V1.500 H9" fill="none" stroke="#e6d9a0" stroke-width="1.200"/></svg>
<div style="left:497.00px;top:291.30px;width:0;height:0;border-left:1.500px solid transparent;border-right:1.500px solid transparent;border-top:2px solid #222;"></div>
<div style="left:516.90px;top:291.30px;width:0;height:0;border-left:1.500px solid transparent;border-right:1.500px solid transparent;border-top:2px solid #222;"></div>
<div style="left:334.9px;top:285.5px;width:1px;height:13.0px;background:#b8b8b8;"></div>
<div style="left:537.8px;top:285.5px;width:1px;height:13.0px;background:#b8b8b8;"></div>
<div style="left:857.9px;top:285.5px;width:1px;height:13.0px;background:#b8b8b8;"></div>
<span class="t" style="top:286.3px;font-size:8px;line-height:10.4px;color:#222;font-family:'Liberation Sans','Noto Sans CJK JP',sans-serif;left:545.5px;transform-origin:0 50%;transform:scaleX(0.8340);">Search:</span>
<div style="left:572.5px;top:284.8px;width:73.5px;height:13.8px;background:#fff;border:1px solid #b4b4b4;box-sizing:border-box;"></div>
<div style="left:646px;top:285.5px;width:10px;height:12px;background:#f0f0f0;"></div>
<div style="left:646.800px;top:289.500px;width:0;height:0;border-left:3.800px solid transparent;border-right:3.800px solid transparent;border-top:4.500px solid #000;"></div>
<div style="left:646.5px;top:295.8px;width:8.5px;height:1.2px;background:#444;"></div>
<div style="left:244.3px;top:302.5px;width:830.7px;height:183.5px;background:#fff;"></div>
<div style="left:244.3px;top:303.2px;width:145.9px;height:11.3px;background:#767676;"></div>
<div style="left:392.3px;top:303.2px;width:61.4px;height:11.3px;background:#767676;"></div>
<div style="left:455.8px;top:302.5px;width:619.2px;height:12px;background:#000;"></div>
<svg style="left:249.500px;top:303.300px" width="12" height="11" viewBox="0 0 12 11"><circle cx="5" cy="3.800" r="3" fill="#8a4ad8"/><circle cx="8" cy="6" r="3.200" fill="#1fa8a0"/><circle cx="6.500" cy="4.800" r="2.200" fill="#35c0e8" opacity="0.800"/><circle cx="4.200" cy="7.200" r="3.300" fill="#1848e0"/></svg>
<div style="left:263.00px;top:310.00px;width:0;height:0;border-left:1.500px solid transparent;border-right:1.500px solid transparent;border-top:2px solid #111;"></div>
<span class="t" style="top:304.06px;font-size:7.6px;line-height:9.88px;color:#e8e8e8;font-family:'Liberation Sans','Noto Sans CJK JP',sans-serif;right:834.5px;transform-origin:100% 50%;transform:scaleX(0.7986);">Msgs</span>
<div style="left:249.5px;top:316.2px;width:140.7px;height:129.8px;background:#818181;"></div>
<div style="left:392.3px;top:316.2px;width:61.4px;height:129.8px;background:#818181;"></div>
<div style="left:455.8px;top:316.2px;width:619.2px;height:130px;background:#000;"></div>
<div style="left:249.5px;top:338.6px;width:140.7px;height:9.9px;background:#fff;"></div>
<div style="left:392.3px;top:338.6px;width:61.4px;height:9.9px;background:#fff;"></div>
<svg style="left:262.300px;top:317.70px" width="9" height="9" viewBox="0 0 9 9"><path d="M4.500 0.300 L8.700 4.500 L4.500 8.700 L0.300 4.500 Z" fill="#2b8fe0"/><path d="M4.500 0.300 L8.700 4.500 L4.500 4.500 L0.300 4.500 Z" fill="#6cc4f8"/><path d="M4.500 0.300 L4.500 8.700 L0.300 4.500 Z" fill="#3fa8f0" opacity="0.6"/></svg>
<span class="t" style="top:318.07px;font-size:8.2px;line-height:10.66px;color:#f2f2f2;font-family:'Liberation Sans','Noto Sans CJK JP',sans-serif;left:274.6px;transform-origin:0 50%;transform:scaleX(0.8549);">/tb_top/reset_n</span>
<span class="t" style="top:318.07px;font-size:8.2px;line-height:10.66px;color:#f2f2f2;font-family:'Liberation Sans','Noto Sans CJK JP',sans-serif;left:393.6px;transform-origin:0 50%;transform:scaleX(0.7671);">1</span>
<svg style="left:262.300px;top:328.23px" width="9" height="9" viewBox="0 0 9 9"><path d="M4.500 0.300 L8.700 4.500 L4.500 8.700 L0.300 4.500 Z" fill="#2b8fe0"/><path d="M4.500 0.300 L8.700 4.500 L4.500 4.500 L0.300 4.500 Z" fill="#6cc4f8"/><path d="M4.500 0.300 L4.500 8.700 L0.300 4.500 Z" fill="#3fa8f0" opacity="0.6"/></svg>
<span class="t" style="top:328.6px;font-size:8.2px;line-height:10.66px;color:#f2f2f2;font-family:'Liberation Sans','Noto Sans CJK JP',sans-serif;left:274.6px;transform-origin:0 50%;transform:scaleX(0.8439);">/tb_top/clk</span>
<span class="t" style="top:328.6px;font-size:8.2px;line-height:10.66px;color:#f2f2f2;font-family:'Liberation Sans','Noto Sans CJK JP',sans-serif;left:393.6px;transform-origin:0 50%;transform:scaleX(0.8767);">0</span>
<svg style="left:262.300px;top:338.76px" width="9" height="9" viewBox="0 0 9 9"><path d="M4.500 0.300 L8.700 4.500 L4.500 8.700 L0.300 4.500 Z" fill="#2b8fe0"/><path d="M4.500 0.300 L8.700 4.500 L4.500 4.500 L0.300 4.500 Z" fill="#6cc4f8"/><path d="M4.500 0.300 L4.500 8.700 L0.300 4.500 Z" fill="#3fa8f0" opacity="0.6"/></svg>
<span class="t" style="top:339.13px;font-size:8.2px;line-height:10.66px;color:#111;font-family:'Liberation Sans','Noto Sans CJK JP',sans-serif;left:274.6px;transform-origin:0 50%;transform:scaleX(0.8570);">/tb_top/u0/pll_c0</span>
<span class="t" style="top:339.13px;font-size:8.2px;line-height:10.66px;color:#111;font-family:'Liberation Sans','Noto Sans CJK JP',sans-serif;left:393.6px;transform-origin:0 50%;transform:scaleX(0.8539);">St0</span>
<svg style="left:262.300px;top:349.29px" width="9" height="9" viewBox="0 0 9 9"><path d="M4.500 0.300 L8.700 4.500 L4.500 8.700 L0.300 4.500 Z" fill="#2b8fe0"/><path d="M4.500 0.300 L8.700 4.500 L4.500 4.500 L0.300 4.500 Z" fill="#6cc4f8"/><path d="M4.500 0.300 L4.500 8.700 L0.300 4.500 Z" fill="#3fa8f0" opacity="0.6"/></svg>
<span class="t" style="top:349.66px;font-size:8.2px;line-height:10.66px;color:#f2f2f2;font-family:'Liberation Sans','Noto Sans CJK JP',sans-serif;left:274.6px;transform-origin:0 50%;transform:scaleX(0.8409);">/tb_top/u0/pll_lock</span>
<span class="t" style="top:349.66px;font-size:8.2px;line-height:10.66px;color:#f2f2f2;font-family:'Liberation Sans','Noto Sans CJK JP',sans-serif;left:393.6px;transform-origin:0 50%;transform:scaleX(0.8132);">St1</span>
<svg style="left:262.300px;top:359.82px" width="9" height="9" viewBox="0 0 9 9"><path d="M4.500 0.300 L8.700 4.500 L4.500 8.700 L0.300 4.500 Z" fill="#2b8fe0"/><path d="M4.500 0.300 L8.700 4.500 L4.500 4.500 L0.300 4.500 Z" fill="#6cc4f8"/><path d="M4.500 0.300 L4.500 8.700 L0.300 4.500 Z" fill="#3fa8f0" opacity="0.6"/></svg>
<span class="t" style="top:360.19px;font-size:8.2px;line-height:10.66px;color:#f2f2f2;font-family:'Liberation Sans','Noto Sans CJK JP',sans-serif;left:274.6px;transform-origin:0 50%;transform:scaleX(0.8634);">/tb_top/u0/adc_data</span>
<span class="t" style="top:360.19px;font-size:8.2px;line-height:10.66px;color:#f2f2f2;font-family:'Liberation Sans','Noto Sans CJK JP',sans-serif;left:393.6px;transform-origin:0 50%;transform:scaleX(0.8411);">000</span>
<div style="left:253px;top:361.52px;width:5.6px;height:5.6px;background:#fff;border:0.6px solid #555;box-sizing:border-box;"></div>
<div style="left:254.2px;top:363.92px;width:3.2px;height:0.8px;background:#000;"></div>
<div style="left:255.4px;top:362.71999999999997px;width:0.8px;height:3.2px;background:#000;"></div>
<div style="left:258.6px;top:364.02px;width:4px;height:0.6px;background:#ccc;"></div>
<svg style="left:262.300px;top:370.35px" width="9" height="9" viewBox="0 0 9 9"><path d="M4.500 0.300 L8.700 4.500 L4.500 8.700 L0.300 4.500 Z" fill="#2b8fe0"/><path d="M4.500 0.300 L8.700 4.500 L4.500 4.500 L0.300 4.500 Z" fill="#6cc4f8"/><path d="M4.500 0.300 L4.500 8.700 L0.300 4.500 Z" fill="#3fa8f0" opacity="0.6"/></svg>
<span class="t" style="top:370.72px;font-size:8.2px;line-height:10.66px;color:#f2f2f2;font-family:'Liberation Sans','Noto Sans CJK JP',sans-serif;left:274.6px;transform-origin:0 50%;transform:scaleX(0.8448);">/tb_top/u0/adc_ch1_data_reg</span>
<span class="t" style="top:370.72px;font-size:8.2px;line-height:10.66px;color:#f2f2f2;font-family:'Liberation Sans','Noto Sans CJK JP',sans-serif;left:393.6px;transform-origin:0 50%;transform:scaleX(0.9952);">fff</span>
<div style="left:253px;top:372.04999999999995px;width:5.6px;height:5.6px;background:#fff;border:0.6px solid #555;box-sizing:border-box;"></div>
<div style="left:254.2px;top:374.45px;width:3.2px;height:0.8px;background:#000;"></div>
<div style="left:255.4px;top:373.24999999999994px;width:0.8px;height:3.2px;background:#000;"></div>
<div style="left:258.6px;top:374.54999999999995px;width:4px;height:0.6px;background:#ccc;"></div>
<svg style="left:262.300px;top:380.88px" width="9" height="9" viewBox="0 0 9 9"><path d="M4.500 0.300 L8.700 4.500 L4.500 8.700 L0.300 4.500 Z" fill="#2b8fe0"/><path d="M4.500 0.300 L8.700 4.500 L4.500 4.500 L0.300 4.500 Z" fill="#6cc4f8"/><path d="M4.500 0.300 L4.500 8.700 L0.300 4.500 Z" fill="#3fa8f0" opacity="0.6"/></svg>
<span class="t" style="top:381.25px;font-size:8.2px;line-height:10.66px;color:#f2f2f2;font-family:'Liberation Sans','Noto Sans CJK JP',sans-serif;left:274.6px;transform-origin:0 50%;transform:scaleX(0.8477);">/tb_top/u0/adc_data_valid</span>
<span class="t" style="top:381.25px;font-size:8.2px;line-height:10.66px;color:#f2f2f2;font-family:'Liberation Sans','Noto Sans CJK JP',sans-serif;left:393.6px;transform-origin:0 50%;transform:scaleX(0.8539);">St0</span>
<div style="left:251px;top:391px;width:137.5px;height:1px;background:#1c1c1c;"></div>
<div style="left:393.5px;top:391px;width:58px;height:1px;background:#1c1c1c;"></div>
<div style="left:250.5px;top:389.5px;width:1px;height:4px;background:#1c1c1c;"></div>
<div style="left:244.3px;top:447.8px;width:145.9px;height:13.1px;background:#818181;"></div>
<div style="left:392.3px;top:447.8px;width:61.4px;height:13.1px;background:#818181;"></div>
<div style="left:244.3px;top:460.9px;width:145.9px;height:11.6px;background:#818181;"></div>
<div style="left:275px;top:460.9px;width:115.2px;height:11.6px;background:#fff;"></div>
<div style="left:392.3px;top:460.9px;width:61.4px;height:11.6px;background:#fff;"></div>
<svg style="left:250px;top:449px" width="24" height="22" viewBox="0 0 24 22"><rect x="1" y="1.500" width="3.500" height="4" fill="#9aa9bd"/><rect x="6.500" y="1" width="5.500" height="5" rx="0.8" fill="#dbe8fb" stroke="#5f86c4" stroke-width="0.7"/><circle cx="16.200" cy="3.600" r="2.600" fill="#6fcf62" stroke="#3c9a38" stroke-width="0.6"/><path d="M16.200 2.200 V5 M14.800 3.600 H17.600" stroke="#fff" stroke-width="0.8"/><path d="M2.500 16 V14.500 Q4.500 11.500 6.500 14.500" fill="none" stroke="#c99a22" stroke-width="1"/><rect x="1.500" y="15.500" width="6" height="4.500" fill="#f0c23c" stroke="#a87c14" stroke-width="0.5"/><path d="M9.500 20 L13.500 14.500 L14.800 13 L15.500 14" stroke="#5a8ad8" stroke-width="1.500" fill="none"/><circle cx="19.200" cy="16.500" r="2.700" fill="#e8605a"/><path d="M17.800 16.500 H20.600" stroke="#fff" stroke-width="0.9"/></svg>
<span class="t" style="top:450.0px;font-size:8px;line-height:10.4px;color:#f0f0f0;font-family:'Liberation Sans','Noto Sans CJK JP',sans-serif;right:901px;transform-origin:100% 50%;transform:scaleX(0.8429);">Now</span>
<span class="t" style="top:450.0px;font-size:8px;line-height:10.4px;color:#f0f0f0;font-family:'Liberation Sans','Noto Sans CJK JP',sans-serif;right:837.4px;transform-origin:100% 50%;transform:scaleX(0.8487);">2204130 ns</span>
<span class="t" style="top:463.07px;font-size:8.2px;line-height:10.66px;color:#111;font-family:'Liberation Sans','Noto Sans CJK JP',sans-serif;right:900.5px;transform-origin:100% 50%;transform:scaleX(0.8279);">Cursor 1</span>
<span class="t" style="top:463.07px;font-size:8.2px;line-height:10.66px;color:#111;font-family:'Liberation Sans','Noto Sans CJK JP',sans-serif;right:837.2px;transform-origin:100% 50%;transform:scaleX(0.8262);">35848.904 ns</span>
<div style="left:244.3px;top:473px;width:830.7px;height:13px;background:#808080;"></div>
<div style="left:249.5px;top:474px;width:140.7px;height:11.5px;background:#f6f6f6;border:1px solid #c2c2c2;box-sizing:border-box;"></div>
<div style="left:250.5px;top:475px;width:9px;height:9.5px;background:#f0f0f0;border:1px solid #fff;border-right-color:#8f8f8f;border-bottom-color:#8f8f8f;box-sizing:border-box;"></div>
<div style="left:381.2px;top:475px;width:9px;height:9.5px;background:#f0f0f0;border:1px solid #fff;border-right-color:#8f8f8f;border-bottom-color:#8f8f8f;box-sizing:border-box;"></div>
<div style="left:252.7px;top:477.25px;width:0;height:0;border-top:2.500px solid transparent;border-bottom:2.500px solid transparent;border-right:3px solid #333;"></div>
<div style="left:384.0px;top:477.25px;width:0;height:0;border-top:2.500px solid transparent;border-bottom:2.500px solid transparent;border-left:3px solid #555;"></div>
<div style="left:392.3px;top:474px;width:61.39999999999998px;height:11.5px;background:#f6f6f6;border:1px solid #c2c2c2;box-sizing:border-box;"></div>
<div style="left:393.3px;top:475px;width:9px;height:9.5px;background:#f0f0f0;border:1px solid #fff;border-right-color:#8f8f8f;border-bottom-color:#8f8f8f;box-sizing:border-box;"></div>
<div style="left:444.7px;top:475px;width:9px;height:9.5px;background:#f0f0f0;border:1px solid #fff;border-right-color:#8f8f8f;border-bottom-color:#8f8f8f;box-sizing:border-box;"></div>
<div style="left:395.5px;top:477.25px;width:0;height:0;border-top:2.500px solid transparent;border-bottom:2.500px solid transparent;border-right:3px solid #333;"></div>
<div style="left:447.5px;top:477.25px;width:0;height:0;border-top:2.500px solid transparent;border-bottom:2.500px solid transparent;border-left:3px solid #555;"></div>
<div style="left:455.8px;top:473px;width:619.2px;height:13px;background:#c9c9c9;background:linear-gradient(#bdbdbd,#d6d6d6 40%,#cdcdcd);"></div>
<div style="left:456.8px;top:474px;width:9px;height:11.5px;background:#f0f0f0;border:1px solid #fff;border-right-color:#8f8f8f;border-bottom-color:#8f8f8f;box-sizing:border-box;"></div>
<div style="left:459.500px;top:477.200px;width:0;height:0;border-top:2.500px solid transparent;border-bottom:2.500px solid transparent;border-right:3px solid #000;"></div>
<div style="left:466.5px;top:474px;width:3.5px;height:11.5px;background:#f4f4f4;border-right:1px solid #8f8f8f;box-sizing:border-box;"></div>
<div style="left:478px;top:476px;width:1.2px;height:8px;background:#d9c58a;"></div>
<div style="left:541px;top:476px;width:1.2px;height:8px;background:#d6c9a4;"></div>
<div style="left:244.3px;top:486.3px;width:830.7px;height:13px;background:#f0f0f0;"></div>
<div style="left:245px;top:487.5px;width:103.5px;height:11.5px;box-sizing:border-box;border:1px solid #a6a6a6;border-right-color:#fff;border-bottom-color:#fff;background:#f0f0f0;"></div>
<div style="left:350px;top:487.5px;width:724.5px;height:11.5px;box-sizing:border-box;border:1px solid #a6a6a6;border-right-color:#fff;border-bottom-color:#fff;background:#f0f0f0;"></div>
<span class="t" style="top:489.07px;font-size:8.2px;line-height:10.66px;color:#111;font-family:'Liberation Sans','Noto Sans CJK JP',sans-serif;left:248px;transform-origin:0 50%;transform:scaleX(0.8111);">0 ps to 1962296 ps</span>
<span class="t" style="top:489.07px;font-size:8.2px;line-height:10.66px;color:#111;font-family:'Liberation Sans','Noto Sans CJK JP',sans-serif;left:353px;transform-origin:0 50%;transform:scaleX(0.8604);">/tb_top/reset_n</span>
<svg style="left:456px;top:302.5px" width="619" height="170.5" viewBox="0 0 619 170.5"><rect x="0" y="0" width="619" height="170.5" fill="#000"/><path d="M46.30 13.5 V144.0 M91.32 13.5 V144.0 M136.34 13.5 V144.0 M181.36 13.5 V144.0 M226.38 13.5 V144.0 M271.40 13.5 V144.0 M316.42 13.5 V144.0 M361.44 13.5 V144.0 M406.46 13.5 V144.0 M451.48 13.5 V144.0 M496.50 13.5 V144.0 M541.52 13.5 V144.0 M586.54 13.5 V144.0 " stroke="#7c7c7c" stroke-width="1" fill="none"/><rect x="0" y="11.8" width="619" height="1.600" fill="#e6e6e6"/><rect x="0" y="143.7" width="619" height="1.700" fill="#e0e0e0"/><rect x="0" y="159.2" width="619" height="0.800" fill="#3c3c3c"/><path d="M1.5 20.0 V23.5 H91.6 V16.0 H619.0" stroke="#58ad48" stroke-width="1.1" fill="none" stroke-linejoin="miter"/><path d="M1.5 34.3 H5.80 V26.7 H10.30 V34.3 H14.81 V26.7 H19.31 V34.3 H23.81 V26.7 H28.31 V34.3 H32.81 V26.7 H37.32 V34.3 H41.82 V26.7 H46.32 V34.3 H50.82 V26.7 H55.32 V34.3 H59.83 V26.7 H64.33 V34.3 H68.83 V26.7 H73.33 V34.3 H77.83 V26.7 H82.34 V34.3 H86.84 V26.7 H91.34 V34.3 H95.84 V26.7 H100.34 V34.3 H104.85 V26.7 H109.35 V34.3 H113.85 V26.7 H118.35 V34.3 H122.85 V26.7 H127.36 V34.3 H131.86 V26.7 H136.36 V34.3 H140.86 V26.7 H145.36 V34.3 H149.87 V26.7 H154.37 V34.3 H158.87 V26.7 H163.37 V34.3 H167.87 V26.7 H172.38 V34.3 H176.88 V26.7 H181.38 V34.3 H185.88 V26.7 H190.38 V34.3 H194.89 V26.7 H199.39 V34.3 H203.89 V26.7 H208.39 V34.3 H212.89 V26.7 H217.40 V34.3 H221.90 V26.7 H226.40 V34.3 H230.90 V26.7 H235.40 V34.3 H239.91 V26.7 H244.41 V34.3 H248.91 V26.7 H253.41 V34.3 H257.91 V26.7 H262.42 V34.3 H266.92 V26.7 H271.42 V34.3 H275.92 V26.7 H280.42 V34.3 H284.93 V26.7 H289.43 V34.3 H293.93 V26.7 H298.43 V34.3 H302.93 V26.7 H307.44 V34.3 H311.94 V26.7 H316.44 V34.3 H320.94 V26.7 H325.44 V34.3 H329.95 V26.7 H334.45 V34.3 H338.95 V26.7 H343.45 V34.3 H347.95 V26.7 H352.46 V34.3 H356.96 V26.7 H361.46 V34.3 H365.96 V26.7 H370.46 V34.3 H374.97 V26.7 H379.47 V34.3 H383.97 V26.7 H388.47 V34.3 H392.97 V26.7 H397.48 V34.3 H401.98 V26.7 H406.48 V34.3 H410.98 V26.7 H415.48 V34.3 H419.99 V26.7 H424.49 V34.3 H428.99 V26.7 H433.49 V34.3 H437.99 V26.7 H442.50 V34.3 H447.00 V26.7 H451.50 V34.3 H456.00 V26.7 H460.50 V34.3 H465.01 V26.7 H469.51 V34.3 H474.01 V26.7 H478.51 V34.3 H483.01 V26.7 H487.52 V34.3 H492.02 V26.7 H496.52 V34.3 H501.02 V26.7 H505.52 V34.3 H510.03 V26.7 H514.53 V34.3 H519.03 V26.7 H523.53 V34.3 H528.03 V26.7 H532.54 V34.3 H537.04 V26.7 H541.54 V34.3 H546.04 V26.7 H550.54 V34.3 H555.05 V26.7 H559.55 V34.3 H564.05 V26.7 H568.55 V34.3 H573.05 V26.7 H577.56 V34.3 H582.06 V26.7 H586.56 V34.3 H591.06 V26.7 H595.56 V34.3 H600.07 V26.7 H604.57 V34.3 H609.07 V26.7 H613.57 V34.3 H618.07 V26.7 H619.00 " stroke="#58ad48" stroke-width="1.2" fill="none" stroke-linejoin="miter"/><path d="M1.5 41.0 H23.5" stroke="#c4211c" stroke-width="1.3" fill="none" stroke-linejoin="miter"/><path d="M23.5 41.0 V44.5 H113.5 V41.0" stroke="#58ad48" stroke-width="1.1" fill="none" stroke-linejoin="miter"/><path d="M113.5 41.0 H149.6" stroke="#c4211c" stroke-width="1.3" fill="none" stroke-linejoin="miter"/><path d="M149.6 41.0 V44.5 H158.90 V37.5 H181.41 V44.5 H203.92 V37.5 H226.43 V44.5 H248.94 V37.5 H271.45 V44.5 H293.96 V37.5 H316.47 V44.5 H338.98 V37.5 H361.49 V44.5 H384.00 V37.5 H406.51 V44.5 H429.02 V37.5 H451.53 V44.5 H474.04 V37.5 H496.55 V44.5 H519.06 V37.5 H541.57 V44.5 H564.08 V37.5 H586.59 V44.5 H609.10 V37.5 H619.00 H619.0" stroke="#58ad48" stroke-width="1.1" fill="none" stroke-linejoin="miter"/><path d="M1.5 51.0 V54.9 H149.6 V47.8 H619.0" stroke="#58ad48" stroke-width="1.1" fill="none" stroke-linejoin="miter"/><path d="M1.5 62.1 H6.0" stroke="#c4211c" stroke-width="1.3" fill="none" stroke-linejoin="miter"/><path d="M619.0 58.3 H8.5 Q6.3 62.1 8.5 65.9 H619.0" stroke="#9db69d" stroke-width="1.1" fill="none" stroke-linejoin="miter"/><path d="M1.5 72.5 H32.5" stroke="#c4211c" stroke-width="1.3" fill="none" stroke-linejoin="miter"/><path d="M619.0 69.0 H34.7 Q32.5 72.5 34.7 76.1 H619.0" stroke="#9db69d" stroke-width="1.1" fill="none" stroke-linejoin="miter"/><path d="M1.5 83.2 H5.0" stroke="#c4211c" stroke-width="1.2" fill="none" stroke-linejoin="miter"/><path d="M5.0 83.2 V87.1 H619.0" stroke="#58ad48" stroke-width="1.1" fill="none" stroke-linejoin="miter"/><text x="9.2" y="64.8" font-size="7.4" fill="#e8e8e8" font-family="Liberation Sans,sans-serif" textLength="11.500" lengthAdjust="spacingAndGlyphs">000</text><text x="35.3" y="75.2" font-size="7.4" fill="#e8e8e8" font-family="Liberation Sans,sans-serif" textLength="11.500" lengthAdjust="spacingAndGlyphs">000</text><path d="M281.5 42.5 V51.5 M279.5 42.5 H283.5 M279.5 51.5 H283.5" stroke="#bdbdbd" stroke-width="0.9" fill="none"/><path d="M285.0 47.5 v3 M287.0 48.0 v2" stroke="#8a3a3a" stroke-width="0.7" fill="none" stroke-dasharray="1 1"/><path d="M1.30 146.8 v2.6 M5.80 146.8 v1.6 M10.30 146.8 v1.6 M14.81 146.8 v1.6 M19.31 146.8 v1.6 M23.81 146.8 v1.6 M28.31 146.8 v1.6 M32.81 146.8 v1.6 M37.32 146.8 v1.6 M41.82 146.8 v1.6 M46.32 146.8 v2.6 M50.82 146.8 v1.6 M55.32 146.8 v1.6 M59.83 146.8 v1.6 M64.33 146.8 v1.6 M68.83 146.8 v1.6 M73.33 146.8 v1.6 M77.83 146.8 v1.6 M82.34 146.8 v1.6 M86.84 146.8 v1.6 M91.34 146.8 v2.6 M95.84 146.8 v1.6 M100.34 146.8 v1.6 M104.85 146.8 v1.6 M109.35 146.8 v1.6 M113.85 146.8 v1.6 M118.35 146.8 v1.6 M122.85 146.8 v1.6 M127.36 146.8 v1.6 M131.86 146.8 v1.6 M136.36 146.8 v2.6 M140.86 146.8 v1.6 M145.36 146.8 v1.6 M149.87 146.8 v1.6 M154.37 146.8 v1.6 M158.87 146.8 v1.6 M163.37 146.8 v1.6 M167.87 146.8 v1.6 M172.38 146.8 v1.6 M176.88 146.8 v1.6 M181.38 146.8 v2.6 M185.88 146.8 v1.6 M190.38 146.8 v1.6 M194.89 146.8 v1.6 M199.39 146.8 v1.6 M203.89 146.8 v1.6 M208.39 146.8 v1.6 M212.89 146.8 v1.6 M217.40 146.8 v1.6 M221.90 146.8 v1.6 M226.40 146.8 v2.6 M230.90 146.8 v1.6 M235.40 146.8 v1.6 M239.91 146.8 v1.6 M244.41 146.8 v1.6 M248.91 146.8 v1.6 M253.41 146.8 v1.6 M257.91 146.8 v1.6 M262.42 146.8 v1.6 M266.92 146.8 v1.6 M271.42 146.8 v2.6 M275.92 146.8 v1.6 M280.42 146.8 v1.6 M284.93 146.8 v1.6 M289.43 146.8 v1.6 M293.93 146.8 v1.6 M298.43 146.8 v1.6 M302.93 146.8 v1.6 M307.44 146.8 v1.6 M311.94 146.8 v1.6 M316.44 146.8 v2.6 M320.94 146.8 v1.6 M325.44 146.8 v1.6 M329.95 146.8 v1.6 M334.45 146.8 v1.6 M338.95 146.8 v1.6 M343.45 146.8 v1.6 M347.95 146.8 v1.6 M352.46 146.8 v1.6 M356.96 146.8 v1.6 M361.46 146.8 v2.6 M365.96 146.8 v1.6 M370.46 146.8 v1.6 M374.97 146.8 v1.6 M379.47 146.8 v1.6 M383.97 146.8 v1.6 M388.47 146.8 v1.6 M392.97 146.8 v1.6 M397.48 146.8 v1.6 M401.98 146.8 v1.6 M406.48 146.8 v2.6 M410.98 146.8 v1.6 M415.48 146.8 v1.6 M419.99 146.8 v1.6 M424.49 146.8 v1.6 M428.99 146.8 v1.6 M433.49 146.8 v1.6 M437.99 146.8 v1.6 M442.50 146.8 v1.6 M447.00 146.8 v1.6 M451.50 146.8 v2.6 M456.00 146.8 v1.6 M460.50 146.8 v1.6 M465.01 146.8 v1.6 M469.51 146.8 v1.6 M474.01 146.8 v1.6 M478.51 146.8 v1.6 M483.01 146.8 v1.6 M487.52 146.8 v1.6 M492.02 146.8 v1.6 M496.52 146.8 v2.6 M501.02 146.8 v1.6 M505.52 146.8 v1.6 M510.03 146.8 v1.6 M514.53 146.8 v1.6 M519.03 146.8 v1.6 M523.53 146.8 v1.6 M528.03 146.8 v1.6 M532.54 146.8 v1.6 M537.04 146.8 v1.6 M541.54 146.8 v2.6 M546.04 146.8 v1.6 M550.54 146.8 v1.6 M555.05 146.8 v1.6 M559.55 146.8 v1.6 M564.05 146.8 v1.6 M568.55 146.8 v1.6 M573.05 146.8 v1.6 M577.56 146.8 v1.6 M582.06 146.8 v1.6 M586.56 146.8 v2.6 M591.06 146.8 v1.6 M595.56 146.8 v1.6 M600.07 146.8 v1.6 M604.57 146.8 v1.6 M609.07 146.8 v1.6 M613.57 146.8 v1.6 M618.07 146.8 v1.6 " stroke="#43c038" stroke-width="0.9" fill="none"/><text x="0.3" y="157.0" font-size="7.300" fill="#4fcf42" font-family="Liberation Sans,sans-serif">) ns</text><text x="99.8" y="157.0" font-size="7.300" fill="#4fcf42" text-anchor="end" font-family="Liberation Sans,sans-serif">200 ns</text><text x="189.9" y="157.0" font-size="7.300" fill="#4fcf42" text-anchor="end" font-family="Liberation Sans,sans-serif">400 ns</text><text x="279.9" y="157.0" font-size="7.300" fill="#4fcf42" text-anchor="end" font-family="Liberation Sans,sans-serif">600 ns</text><text x="370.0" y="157.0" font-size="7.300" fill="#4fcf42" text-anchor="end" font-family="Liberation Sans,sans-serif">800 ns</text><text x="460.0" y="157.0" font-size="7.300" fill="#4fcf42" text-anchor="end" font-family="Liberation Sans,sans-serif">1000 ns</text><text x="550.0" y="157.0" font-size="7.300" fill="#4fcf42" text-anchor="end" font-family="Liberation Sans,sans-serif">1200 ns</text></svg>
<div style="left:453.7px;top:302.5px;width:2.3px;height:183.5px;background:#f2f2f2;"></div>
<div style="left:390.3px;top:302.5px;width:2px;height:183.5px;background:#f4f4f4;"></div>
<div style="left:626px;top:576px;width:440.5px;height:54px;background:#fff;"></div>
<div style="left:650px;top:576px;width:10.5px;height:40px;background:#f0f0f0;"></div>
<div style="left:650.5px;top:576px;width:9.5px;height:26px;background:#cdcdcd;"></div>
<span class="t" style="top:603.3px;font-size:8px;line-height:10.4px;color:#444;font-family:'Liberation Sans','Noto Sans CJK JP',sans-serif;left:652.5px;transform-origin:0 50%;">⌄</span>
<svg style="left:640px;top:583.500px" width="12" height="10" viewBox="0 0 12 10"><path d="M1 3.500 L7 1.500 L11 2.500 L11 7 L5 8.800 L1 7.500 Z" fill="#3b8fde"/><path d="M1 3.500 L5 4.500 L11 2.500 M5 4.500 V8.800" stroke="#a8d4fa" stroke-width="0.7" fill="none"/><path d="M5 4.500 L11 2.500 L11 7 L5 8.800 Z" fill="#1f6fc4"/></svg>
<div style="left:662px;top:576px;width:394px;height:40.500px;overflow:hidden;">
<div style="left:13px;top:-4.7999999999999545px;width:8.500px;height:11.500px;background:#fff;border:0.8px solid #8a8a8a;box-sizing:border-box;"></div>
<span class="t" style="left:25.300px;top:-4.65px;font-size:8.500px;line-height:11.700px;color:#1a1a1a;transform:scaleX(0.86);transform-origin:0 50%;">vsim.wlf</span>
<span class="t" style="left:174px;top:-4.65px;font-size:8px;line-height:11.700px;color:#7a7a7a;transform:scaleX(0.875);transform-origin:0 50%;">2021/10/31 12:18</span>
<span class="t" style="left:262.500px;top:-4.65px;font-size:7.800px;line-height:11.700px;color:#7a7a7a;transform:scaleX(0.69);transform-origin:0 50%;">WLF ファイル</span>
<span class="t" style="right:16.500px;top:-4.65px;font-size:8px;line-height:11.700px;color:#7a7a7a;transform:scaleX(0.82);transform-origin:100% 50%;">0 KB</span>
<div style="left:12.500px;top:8.200000000000045px;width:9px;height:11.500px;background:#fff;border:0.8px solid #777;box-sizing:border-box;"></div><div style="left:12.500px;top:8.200000000000045px;width:6px;height:6px;background:#2a2f6e;"></div><div style="left:17px;top:13.200000000000045px;width:5px;height:6.500px;background:#5a5a5a;"></div>
<span class="t" style="left:25.300px;top:8.35px;font-size:8.500px;line-height:11.700px;color:#1a1a1a;transform:scaleX(0.86);transform-origin:0 50%;">ch1.txt</span>
<span class="t" style="left:174px;top:8.35px;font-size:8px;line-height:11.700px;color:#7a7a7a;transform:scaleX(0.875);transform-origin:0 50%;">2021/08/15 20:51</span>
<span class="t" style="left:262.500px;top:8.35px;font-size:7.800px;line-height:11.700px;color:#7a7a7a;transform:scaleX(0.69);transform-origin:0 50%;">テキストファイル</span>
<span class="t" style="right:16.500px;top:8.35px;font-size:8px;line-height:11.700px;color:#7a7a7a;transform:scaleX(0.82);transform-origin:100% 50%;">1 KB</span>
<div style="left:13px;top:21.700000000000045px;width:8.500px;height:11.500px;background:#fff;border:0.8px solid #8a8a8a;box-sizing:border-box;"></div>
<span class="t" style="left:25.300px;top:21.85px;font-size:8.500px;line-height:11.700px;color:#1a1a1a;transform:scaleX(0.86);transform-origin:0 50%;">transcript</span>
<span class="t" style="left:174px;top:21.85px;font-size:8px;line-height:11.700px;color:#7a7a7a;transform:scaleX(0.875);transform-origin:0 50%;">2021/10/31 12:19</span>
<span class="t" style="left:262.500px;top:21.85px;font-size:7.800px;line-height:11.700px;color:#7a7a7a;transform:scaleX(0.69);transform-origin:0 50%;">ファイル</span>
<span class="t" style="right:16.500px;top:21.85px;font-size:8px;line-height:11.700px;color:#7a7a7a;transform:scaleX(0.82);transform-origin:100% 50%;">28 KB</span>
<div style="left:13px;top:35px;width:8.500px;height:11.500px;background:#fff;border:0.8px solid #8a8a8a;box-sizing:border-box;"></div>
<span class="t" style="left:25.300px;top:35.15px;font-size:8.500px;line-height:11.700px;color:#1a1a1a;transform:scaleX(0.86);transform-origin:0 50%;">modelsim.ini</span>
<span class="t" style="left:174px;top:35.15px;font-size:8px;line-height:11.700px;color:#7a7a7a;transform:scaleX(0.875);transform-origin:0 50%;">2021/08/09 12:24</span>
<span class="t" style="left:262.500px;top:35.15px;font-size:7.800px;line-height:11.700px;color:#7a7a7a;transform:scaleX(0.69);transform-origin:0 50%;">構成設定</span>
<span class="t" style="right:16.500px;top:35.15px;font-size:8px;line-height:11.700px;color:#7a7a7a;transform:scaleX(0.82);transform-origin:100% 50%;">12 KB</span>
</div>
<div style="left:1057.5px;top:576px;width:9px;height:40px;background:#f0f0f0;"></div>
<div style="left:1058px;top:576px;width:8px;height:22.5px;background:#cdcdcd;"></div>
<span class="t" style="top:603.3px;font-size:8px;line-height:10.4px;color:#444;font-family:'Liberation Sans','Noto Sans CJK JP',sans-serif;left:1059px;transform-origin:0 50%;">⌄</span>
<span class="t" style="top:616.91px;font-size:8.6px;line-height:11.18px;color:#3c3c3c;font-family:'Liberation Sans','Noto Sans CJK JP',sans-serif;left:635.5px;transform-origin:0 50%;transform:scaleX(0.7879);">26 個の項目</span>
<span class="t" style="top:616.91px;font-size:8.6px;line-height:11.18px;color:#3c3c3c;font-family:'Liberation Sans','Noto Sans CJK JP',sans-serif;left:686.5px;transform-origin:0 50%;transform:scaleX(0.7591);">1 個の項目を選択  350 バイト</span>
<div style="left:1039.5px;top:616.5px;width:12px;height:12px;background:#d6e8f8;border:1px solid #62a8e4;box-sizing:border-box;"></div>
<div style="left:1042px;top:619.0px;width:2px;height:1.6px;background:#5a82b4;"></div>
<div style="left:1045px;top:619.0px;width:4.5px;height:1.6px;background:#8aa8cc;"></div>
<div style="left:1042px;top:621.7px;width:2px;height:1.6px;background:#5a82b4;"></div>
<div style="left:1045px;top:621.7px;width:4.5px;height:1.6px;background:#8aa8cc;"></div>
<div style="left:1042px;top:624.4px;width:2px;height:1.6px;background:#5a82b4;"></div>
<div style="left:1045px;top:624.4px;width:4.5px;height:1.6px;background:#8aa8cc;"></div>
<div style="left:1054.5px;top:619.5px;width:8px;height:6.5px;background:#5a6a86;"></div>
<div style="left:1056px;top:621px;width:5px;height:2.5px;background:#cfe0f4;"></div>
<div style="left:625px;top:630px;width:442.5px;height:1px;background:#3a3a3a;"></div>
<div style="left:1076.5px;top:150.5px;width:209px;height:234px;background:#ececec;"></div>
<svg style="left:1075px;top:148px" width="210" height="124" viewBox="0 0 1077 636"><defs><filter id="bl1" x="-5%" y="-5%" width="110%" height="110%"><feGaussianBlur stdDeviation="5"/></filter><filter id="bl2"><feGaussianBlur stdDeviation="3.400"/></filter><radialGradient id="bgw" cx="0.600" cy="0.550" r="0.800"><stop offset="0" stop-color="#fcfcfc"/><stop offset="0.700" stop-color="#f5f5f5"/><stop offset="1" stop-color="#e2e2e2"/></radialGradient><linearGradient id="skin" x1="0" x2="1"><stop offset="0" stop-color="#b8957f"/><stop offset="0.450" stop-color="#bd9884"/><stop offset="0.800" stop-color="#9c7968"/><stop offset="1" stop-color="#7f6254"/></linearGradient><linearGradient id="shirt" x1="0" x2="1"><stop offset="0" stop-color="#b4c2ea"/><stop offset="0.500" stop-color="#a3b3e0"/><stop offset="1" stop-color="#b0bfe8"/></linearGradient></defs><rect x="8" y="14" width="1069" height="606" fill="url(#bgw)"/><g filter="url(#bl1)"><path d="M205 625 Q250 560 330 535 Q400 505 455 488 L520 560 L600 612 L660 560 L705 478 Q800 505 880 540 Q960 570 995 625 Z" fill="url(#shirt)"/><path d="M445 470 L520 600 L600 615 L665 570 L700 470 Z" fill="#8f6f60"/><path d="M412 330 Q420 230 480 190 Q560 150 650 195 Q715 260 716 345 Q716 430 692 500 Q660 590 585 612 Q520 615 472 560 Q432 480 420 400 Z" fill="url(#skin)"/><path d="M338 192 Q380 120 450 105 Q560 75 655 105 Q725 150 752 240 Q762 300 724 350 L704 350 Q700 300 676 262 Q645 225 598 208 Q560 228 520 236 Q470 262 442 292 Q426 322 414 356 Q370 300 350 250 Q338 220 338 192 Z" fill="#2b2929"/><path d="M420 180 Q500 120 620 130 Q700 160 725 250" stroke="#4a4848" stroke-width="26" fill="none" opacity="0.500"/></g><g filter="url(#bl2)"><path d="M418 328 H690" stroke="#5a4a44" stroke-width="4" opacity="0.700"/><rect x="430" y="322" width="110" height="58" rx="20" fill="#d9c4b8" fill-opacity="0.350" stroke="#7a6a62" stroke-width="3.500" opacity="0.600"/><rect x="578" y="320" width="110" height="58" rx="20" fill="#d9c4b8" fill-opacity="0.300" stroke="#7a6a62" stroke-width="3.500" opacity="0.800"/><path d="M452 300 Q490 284 535 298 M590 296 Q635 282 675 298" stroke="#4a3a36" stroke-width="6" fill="none" opacity="0.600"/><path d="M462 345 H515 M605 343 H660" stroke="#3a2c2a" stroke-width="5" fill="none" opacity="0.650"/><path d="M545 350 Q520 420 528 435 Q555 448 588 436" stroke="#8a6454" stroke-width="6" fill="none" opacity="0.600"/><path d="M505 492 Q550 478 598 490 Q552 512 505 492 Z" fill="#7a4a44" opacity="0.850"/><path d="M455 490 L500 600 M705 480 L660 600" stroke="#7f8fc0" stroke-width="6" fill="none" opacity="0.700"/></g></svg>
<svg style="left:1075px;top:264px" width="210" height="126" viewBox="0 0 1060 636"><defs><filter id="bb1" x="-5%" y="-5%" width="110%" height="110%"><feGaussianBlur stdDeviation="2.600"/></filter><filter id="bb2"><feGaussianBlur stdDeviation="1.300"/></filter><linearGradient id="pcb" x1="0" y1="0" x2="1" y2="1"><stop offset="0" stop-color="#36589a"/><stop offset="0.500" stop-color="#2f4c86"/><stop offset="1" stop-color="#3a5c9c"/></linearGradient></defs><rect x="8" y="22" width="1052" height="586" fill="#423e3c"/><rect x="8" y="22" width="107" height="586" fill="#57524f"/><rect x="112" y="22" width="5" height="586" fill="#262322"/><rect x="117" y="500" width="943" height="108" fill="#403c3a"/><g filter="url(#bb1)"><rect x="138" y="20" width="765" height="482" rx="6" fill="url(#pcb)"/><rect x="390" y="76" width="9" height="16" fill="#d8dce8" opacity="0.700"/><rect x="220" y="208" width="12" height="7" fill="#b4c4e4" opacity="0.700"/><rect x="568" y="319" width="19" height="17" fill="#d8dce8" opacity="0.700"/><rect x="872" y="44" width="13" height="8" fill="#23365e" opacity="0.700"/><rect x="754" y="85" width="18" height="8" fill="#7f98c8" opacity="0.700"/><rect x="222" y="247" width="9" height="8" fill="#7f98c8" opacity="0.700"/><rect x="653" y="160" width="16" height="17" fill="#5a78b4" opacity="0.700"/><rect x="418" y="106" width="21" height="9" fill="#23365e" opacity="0.700"/><rect x="798" y="252" width="19" height="7" fill="#1c2a4a" opacity="0.700"/><rect x="403" y="315" width="9" height="14" fill="#c4cce0" opacity="0.700"/><rect x="716" y="205" width="14" height="10" fill="#5a78b4" opacity="0.700"/><rect x="518" y="273" width="23" height="17" fill="#8aa4d4" opacity="0.700"/><rect x="501" y="233" width="21" height="10" fill="#6f8fc8" opacity="0.700"/><rect x="578" y="238" width="13" height="11" fill="#1a1d26" opacity="0.700"/><rect x="645" y="37" width="14" height="13" fill="#1a1d26" opacity="0.700"/><rect x="363" y="255" width="15" height="16" fill="#c4cce0" opacity="0.700"/><rect x="557" y="299" width="24" height="9" fill="#c4cce0" opacity="0.700"/><rect x="804" y="322" width="9" height="8" fill="#23365e" opacity="0.700"/><rect x="637" y="34" width="11" height="9" fill="#7f98c8" opacity="0.700"/><rect x="243" y="292" width="20" height="15" fill="#7f98c8" opacity="0.700"/><rect x="488" y="296" width="22" height="11" fill="#d8dce8" opacity="0.700"/><rect x="200" y="94" width="10" height="13" fill="#23365e" opacity="0.700"/><rect x="226" y="203" width="10" height="10" fill="#b4c4e4" opacity="0.700"/><rect x="169" y="297" width="15" height="14" fill="#7f98c8" opacity="0.700"/><rect x="857" y="214" width="10" height="16" fill="#1a1d26" opacity="0.700"/><rect x="885" y="172" width="14" height="8" fill="#1a1d26" opacity="0.700"/><rect x="705" y="256" width="23" height="8" fill="#1a1d26" opacity="0.700"/><rect x="167" y="320" width="15" height="14" fill="#b4c4e4" opacity="0.700"/><rect x="826" y="261" width="26" height="16" fill="#1c2a4a" opacity="0.700"/><rect x="665" y="110" width="24" height="10" fill="#5a78b4" opacity="0.700"/><rect x="315" y="195" width="14" height="9" fill="#b4c4e4" opacity="0.700"/><rect x="751" y="330" width="23" height="16" fill="#9fb4dc" opacity="0.700"/><rect x="698" y="99" width="17" height="15" fill="#b4c4e4" opacity="0.700"/><rect x="882" y="271" width="13" height="14" fill="#1a1d26" opacity="0.700"/><rect x="858" y="166" width="25" height="10" fill="#5a78b4" opacity="0.700"/><rect x="612" y="305" width="17" height="14" fill="#6f8fc8" opacity="0.700"/><rect x="742" y="56" width="10" height="11" fill="#d8dce8" opacity="0.700"/><rect x="677" y="91" width="16" height="14" fill="#23365e" opacity="0.700"/><rect x="214" y="319" width="16" height="15" fill="#c4cce0" opacity="0.700"/><rect x="213" y="78" width="8" height="13" fill="#23365e" opacity="0.700"/><rect x="494" y="230" width="23" height="18" fill="#7f98c8" opacity="0.700"/><rect x="636" y="137" width="18" height="6" fill="#b4c4e4" opacity="0.700"/><rect x="742" y="252" width="17" height="17" fill="#8aa4d4" opacity="0.700"/><rect x="471" y="296" width="9" height="9" fill="#9fb4dc" opacity="0.700"/><rect x="521" y="263" width="13" height="11" fill="#5a78b4" opacity="0.700"/><rect x="247" y="308" width="24" height="14" fill="#5a78b4" opacity="0.700"/><rect x="753" y="188" width="10" height="8" fill="#b4c4e4" opacity="0.700"/><rect x="528" y="296" width="19" height="15" fill="#23365e" opacity="0.700"/><rect x="261" y="73" width="21" height="13" fill="#7f98c8" opacity="0.700"/><rect x="561" y="269" width="24" height="7" fill="#8aa4d4" opacity="0.700"/><rect x="292" y="43" width="17" height="13" fill="#8aa4d4" opacity="0.700"/><rect x="712" y="308" width="14" height="18" fill="#1a1d26" opacity="0.700"/><rect x="747" y="185" width="21" height="17" fill="#9fb4dc" opacity="0.700"/><rect x="847" y="109" width="24" height="8" fill="#b4c4e4" opacity="0.700"/><rect x="647" y="161" width="20" height="15" fill="#9fb4dc" opacity="0.700"/><rect x="814" y="77" width="20" height="8" fill="#d8dce8" opacity="0.700"/><rect x="803" y="325" width="21" height="7" fill="#9fb4dc" opacity="0.700"/><rect x="805" y="80" width="23" height="8" fill="#d8dce8" opacity="0.700"/><rect x="401" y="90" width="10" height="10" fill="#5a78b4" opacity="0.700"/><rect x="400" y="170" width="15" height="12" fill="#6f8fc8" opacity="0.700"/><rect x="369" y="323" width="26" height="15" fill="#8aa4d4" opacity="0.700"/><rect x="869" y="62" width="13" height="17" fill="#1c2a4a" opacity="0.700"/><rect x="284" y="261" width="23" height="14" fill="#c4cce0" opacity="0.700"/><rect x="850" y="154" width="25" height="13" fill="#b4c4e4" opacity="0.700"/><rect x="668" y="57" width="22" height="8" fill="#6f8fc8" opacity="0.700"/><rect x="813" y="112" width="19" height="16" fill="#6f8fc8" opacity="0.700"/><rect x="212" y="291" width="13" height="7" fill="#8aa4d4" opacity="0.700"/><rect x="159" y="333" width="25" height="9" fill="#c4cce0" opacity="0.700"/><rect x="326" y="63" width="13" height="8" fill="#23365e" opacity="0.700"/><rect x="840" y="222" width="22" height="9" fill="#b4c4e4" opacity="0.700"/><rect x="407" y="36" width="9" height="6" fill="#1c2a4a" opacity="0.700"/><rect x="524" y="328" width="17" height="17" fill="#b4c4e4" opacity="0.700"/><rect x="229" y="280" width="20" height="13" fill="#c4cce0" opacity="0.700"/><rect x="808" y="326" width="20" height="18" fill="#1c2a4a" opacity="0.700"/><rect x="404" y="284" width="11" height="18" fill="#d8dce8" opacity="0.700"/><rect x="877" y="285" width="9" height="15" fill="#6f8fc8" opacity="0.700"/><rect x="339" y="80" width="20" height="11" fill="#8aa4d4" opacity="0.700"/><rect x="524" y="326" width="12" height="10" fill="#7f98c8" opacity="0.700"/><rect x="862" y="327" width="14" height="6" fill="#b4c4e4" opacity="0.700"/><rect x="803" y="96" width="8" height="11" fill="#23365e" opacity="0.700"/><rect x="154" y="111" width="11" height="13" fill="#8aa4d4" opacity="0.700"/><rect x="859" y="290" width="20" height="15" fill="#23365e" opacity="0.700"/><rect x="801" y="149" width="21" height="12" fill="#5a78b4" opacity="0.700"/><rect x="360" y="219" width="9" height="16" fill="#23365e" opacity="0.700"/><rect x="810" y="221" width="11" height="12" fill="#b4c4e4" opacity="0.700"/><rect x="523" y="285" width="23" height="13" fill="#6f8fc8" opacity="0.700"/><rect x="811" y="238" width="12" height="6" fill="#d8dce8" opacity="0.700"/><rect x="228" y="285" width="9" height="6" fill="#b4c4e4" opacity="0.700"/><rect x="202" y="314" width="10" height="12" fill="#b4c4e4" opacity="0.700"/><rect x="702" y="175" width="23" height="9" fill="#8aa4d4" opacity="0.700"/><rect x="710" y="100" width="26" height="12" fill="#d8dce8" opacity="0.700"/><rect x="433" y="176" width="13" height="7" fill="#d8dce8" opacity="0.700"/><rect x="632" y="241" width="18" height="6" fill="#7f98c8" opacity="0.700"/><rect x="195" y="112" width="10" height="9" fill="#d8dce8" opacity="0.700"/><rect x="512" y="246" width="16" height="12" fill="#1c2a4a" opacity="0.700"/><rect x="238" y="303" width="14" height="7" fill="#9fb4dc" opacity="0.700"/><rect x="886" y="333" width="12" height="17" fill="#c4cce0" opacity="0.700"/><rect x="306" y="207" width="21" height="9" fill="#23365e" opacity="0.700"/><rect x="416" y="214" width="17" height="17" fill="#d8dce8" opacity="0.700"/><rect x="670" y="101" width="15" height="8" fill="#1a1d26" opacity="0.700"/><rect x="853" y="238" width="13" height="8" fill="#c4cce0" opacity="0.700"/><rect x="405" y="126" width="8" height="15" fill="#5a78b4" opacity="0.700"/><rect x="771" y="67" width="21" height="17" fill="#9fb4dc" opacity="0.700"/><rect x="441" y="335" width="9" height="17" fill="#7f98c8" opacity="0.700"/><rect x="709" y="291" width="10" height="16" fill="#1c2a4a" opacity="0.700"/><rect x="361" y="315" width="25" height="11" fill="#9fb4dc" opacity="0.700"/><rect x="384" y="266" width="24" height="16" fill="#c4cce0" opacity="0.700"/><rect x="617" y="309" width="18" height="15" fill="#b4c4e4" opacity="0.700"/><rect x="187" y="253" width="19" height="8" fill="#1a1d26" opacity="0.700"/><rect x="793" y="178" width="10" height="12" fill="#b4c4e4" opacity="0.700"/><rect x="404" y="121" width="13" height="14" fill="#d8dce8" opacity="0.700"/><rect x="373" y="200" width="10" height="14" fill="#c4cce0" opacity="0.700"/><rect x="751" y="198" width="24" height="18" fill="#1a1d26" opacity="0.700"/><rect x="292" y="58" width="18" height="10" fill="#5a78b4" opacity="0.700"/><rect x="423" y="277" width="24" height="15" fill="#9fb4dc" opacity="0.700"/><rect x="400" y="49" width="18" height="10" fill="#1c2a4a" opacity="0.700"/><rect x="658" y="191" width="10" height="17" fill="#9fb4dc" opacity="0.700"/><rect x="435" y="227" width="25" height="16" fill="#c4cce0" opacity="0.700"/><rect x="796" y="37" width="16" height="15" fill="#6f8fc8" opacity="0.700"/><rect x="745" y="325" width="8" height="11" fill="#1a1d26" opacity="0.700"/><rect x="836" y="282" width="26" height="9" fill="#1a1d26" opacity="0.700"/><rect x="231" y="77" width="25" height="7" fill="#b4c4e4" opacity="0.700"/><rect x="761" y="244" width="10" height="15" fill="#1a1d26" opacity="0.700"/><rect x="151" y="68" width="25" height="14" fill="#7f98c8" opacity="0.700"/><rect x="375" y="69" width="18" height="11" fill="#1c2a4a" opacity="0.700"/><rect x="715" y="60" width="17" height="13" fill="#1c2a4a" opacity="0.700"/><rect x="437" y="98" width="8" height="12" fill="#7f98c8" opacity="0.700"/><rect x="887" y="115" width="20" height="17" fill="#5a78b4" opacity="0.700"/><rect x="333" y="323" width="14" height="6" fill="#d8dce8" opacity="0.700"/><rect x="519" y="236" width="9" height="9" fill="#c4cce0" opacity="0.700"/><rect x="515" y="242" width="15" height="11" fill="#c4cce0" opacity="0.700"/><rect x="155" y="119" width="9" height="12" fill="#b4c4e4" opacity="0.700"/><rect x="298" y="264" width="12" height="9" fill="#9fb4dc" opacity="0.700"/><rect x="713" y="120" width="17" height="8" fill="#7f98c8" opacity="0.700"/><rect x="642" y="319" width="25" height="7" fill="#23365e" opacity="0.700"/><rect x="167" y="212" width="9" height="7" fill="#c4cce0" opacity="0.700"/><rect x="441" y="304" width="21" height="18" fill="#5a78b4" opacity="0.700"/><rect x="839" y="130" width="20" height="12" fill="#23365e" opacity="0.700"/><rect x="687" y="286" width="16" height="7" fill="#5a78b4" opacity="0.700"/><rect x="208" y="55" width="25" height="7" fill="#c4cce0" opacity="0.700"/><rect x="864" y="93" width="22" height="10" fill="#5a78b4" opacity="0.700"/><rect x="745" y="57" width="12" height="12" fill="#1a1d26" opacity="0.700"/><rect x="696" y="175" width="15" height="16" fill="#d8dce8" opacity="0.700"/><rect x="717" y="42" width="16" height="16" fill="#6f8fc8" opacity="0.700"/><rect x="196" y="89" width="24" height="10" fill="#8aa4d4" opacity="0.700"/><rect x="352" y="322" width="9" height="15" fill="#7f98c8" opacity="0.700"/><rect x="660" y="312" width="8" height="15" fill="#1c2a4a" opacity="0.700"/><rect x="828" y="223" width="8" height="9" fill="#8aa4d4" opacity="0.700"/><rect x="502" y="322" width="22" height="17" fill="#c4cce0" opacity="0.700"/><rect x="753" y="70" width="11" height="16" fill="#1a1d26" opacity="0.700"/><rect x="696" y="281" width="19" height="10" fill="#23365e" opacity="0.700"/><rect x="729" y="54" width="15" height="8" fill="#9fb4dc" opacity="0.700"/><rect x="452" y="228" width="18" height="10" fill="#1a1d26" opacity="0.700"/><rect x="875" y="299" width="13" height="7" fill="#8aa4d4" opacity="0.700"/><rect x="675" y="166" width="10" height="12" fill="#9fb4dc" opacity="0.700"/><rect x="810" y="102" width="23" height="14" fill="#b4c4e4" opacity="0.700"/><rect x="240" y="286" width="13" height="9" fill="#1c2a4a" opacity="0.700"/><rect x="822" y="87" width="15" height="18" fill="#8aa4d4" opacity="0.700"/><rect x="748" y="229" width="10" height="12" fill="#6f8fc8" opacity="0.700"/><rect x="756" y="286" width="9" height="10" fill="#5a78b4" opacity="0.700"/><rect x="238" y="88" width="11" height="7" fill="#7f98c8" opacity="0.700"/><rect x="596" y="266" width="25" height="7" fill="#d8dce8" opacity="0.700"/><rect x="339" y="213" width="24" height="16" fill="#d8dce8" opacity="0.700"/><rect x="756" y="155" width="11" height="10" fill="#5a78b4" opacity="0.700"/><rect x="301" y="273" width="17" height="11" fill="#b4c4e4" opacity="0.700"/><rect x="739" y="233" width="20" height="7" fill="#23365e" opacity="0.700"/><rect x="271" y="242" width="26" height="14" fill="#c4cce0" opacity="0.700"/><rect x="702" y="300" width="15" height="16" fill="#c4cce0" opacity="0.700"/><rect x="887" y="141" width="15" height="11" fill="#9fb4dc" opacity="0.700"/><rect x="847" y="162" width="16" height="16" fill="#23365e" opacity="0.700"/><rect x="451" y="299" width="22" height="8" fill="#1a1d26" opacity="0.700"/><rect x="188" y="73" width="10" height="13" fill="#c4cce0" opacity="0.700"/><rect x="424" y="184" width="14" height="8" fill="#23365e" opacity="0.700"/><rect x="277" y="50" width="17" height="16" fill="#c4cce0" opacity="0.700"/><rect x="865" y="90" width="23" height="7" fill="#23365e" opacity="0.700"/><rect x="825" y="126" width="25" height="11" fill="#7f98c8" opacity="0.700"/><rect x="819" y="219" width="20" height="16" fill="#23365e" opacity="0.700"/><rect x="845" y="78" width="10" height="9" fill="#5a78b4" opacity="0.700"/><rect x="686" y="304" width="24" height="16" fill="#6f8fc8" opacity="0.700"/><rect x="647" y="234" width="10" height="13" fill="#5a78b4" opacity="0.700"/><rect x="638" y="166" width="11" height="6" fill="#1a1d26" opacity="0.700"/><rect x="880" y="172" width="22" height="15" fill="#1a1d26" opacity="0.700"/><rect x="693" y="267" width="9" height="15" fill="#b4c4e4" opacity="0.700"/><rect x="812" y="229" width="8" height="7" fill="#23365e" opacity="0.700"/><rect x="604" y="241" width="11" height="18" fill="#8aa4d4" opacity="0.700"/><rect x="514" y="322" width="20" height="15" fill="#23365e" opacity="0.700"/><rect x="314" y="284" width="22" height="8" fill="#7f98c8" opacity="0.700"/><rect x="813" y="114" width="11" height="12" fill="#1a1d26" opacity="0.700"/><rect x="831" y="94" width="19" height="9" fill="#1c2a4a" opacity="0.700"/><rect x="425" y="91" width="11" height="17" fill="#c4cce0" opacity="0.700"/><rect x="653" y="303" width="22" height="9" fill="#23365e" opacity="0.700"/><rect x="447" y="27" width="182" height="192" rx="4" fill="#7f8b9c"/><rect x="456" y="36" width="164" height="174" rx="3" fill="#3c4148"/><path d="M500 130 Q540 110 585 128" stroke="#5f6f9a" stroke-width="6" fill="none"/><rect x="210" y="96" width="178" height="96" fill="#2a2b30"/><path d="M214 94 H384 M214 194 H384" stroke="#aab4c8" stroke-width="5" stroke-dasharray="5 4"/><rect x="300" y="60" width="100" height="18" fill="#20242e"/><rect x="160" y="40" width="90" height="14" fill="#1f2e54"/><circle cx="186" cy="108" r="11" fill="#dfe8ff"/><circle cx="186" cy="134" r="12" fill="#b8f0b0"/><rect x="772" y="28" width="58" height="72" fill="#1e1f22"/><rect x="812" y="55" width="70" height="46" rx="8" fill="#b9bcc0"/><rect x="890" y="30" width="40" height="30" fill="#2a2a2c"/><rect x="840" y="252" width="44" height="52" rx="4" fill="#1a1a1c"/><rect x="830" y="300" width="60" height="22" fill="#6b2c34"/><circle cx="862" cy="276" r="11" fill="#3a3a3e"/><ellipse cx="780" cy="308" rx="20" ry="30" fill="#d8662c"/><circle cx="780" cy="285" r="8" fill="#f4c8a8"/><rect x="148" y="258" width="34" height="62" fill="#b9bfcc"/><circle cx="245" cy="305" r="20" fill="#8c6a3a"/><circle cx="245" cy="300" r="9" fill="#e8d8b0"/><rect x="306" y="270" width="40" height="40" fill="#1e2230"/><rect x="672" y="235" width="70" height="35" fill="#1f2533"/><rect x="590" y="235" width="60" height="30" fill="#202634"/><rect x="393" y="280" width="304" height="58" fill="#17171a"/><path d="M410 284 V298 M436 284 V298 M462 284 V298 M488 284 V298 M514 284 V298 M540 284 V298 M600 284 V298 M626 284 V298 M676 284 V298" stroke="#3a3a40" stroke-width="5"/><rect x="566" y="294" width="16" height="38" rx="4" fill="#ff3a30"/><rect x="636" y="294" width="16" height="38" rx="4" fill="#ff3a30"/><rect x="558" y="290" width="32" height="46" rx="8" fill="#c81c18" opacity="0.500"/><rect x="628" y="290" width="32" height="46" rx="8" fill="#c81c18" opacity="0.500"/><rect x="140" y="342" width="121" height="153" fill="#8b9097"/><rect x="140" y="455" width="121" height="40" fill="#7d8289"/><rect x="199" y="342" width="3" height="153" fill="#757a82"/><rect x="267" y="342" width="121" height="153" fill="#8b9097"/><rect x="267" y="455" width="121" height="40" fill="#7d8289"/><rect x="326" y="342" width="3" height="153" fill="#757a82"/><rect x="393" y="342" width="121" height="153" fill="#8b9097"/><rect x="393" y="455" width="121" height="40" fill="#7d8289"/><rect x="452" y="342" width="3" height="153" fill="#757a82"/><rect x="518.0" y="350" width="36" height="120" fill="#16171a"/><rect x="521.0" y="366" width="29" height="90" rx="7" fill="#ececec"/><rect x="529.0" y="386" width="13" height="54" rx="3" fill="#0c0c0e"/><circle cx="535.0" cy="362" r="7" fill="#b85a5a"/><rect x="555.7" y="350" width="36" height="120" fill="#16171a"/><rect x="558.7" y="366" width="29" height="90" rx="7" fill="#ececec"/><rect x="566.7" y="386" width="13" height="54" rx="3" fill="#0c0c0e"/><circle cx="572.7" cy="360" r="11" fill="#ff8f9a"/><circle cx="572.7" cy="360" r="5" fill="#fff0f0"/><rect x="593.4" y="350" width="36" height="120" fill="#16171a"/><rect x="596.4" y="366" width="29" height="90" rx="7" fill="#ececec"/><rect x="604.4" y="386" width="13" height="54" rx="3" fill="#0c0c0e"/><circle cx="610.4" cy="362" r="7" fill="#b85a5a"/><rect x="631.1" y="350" width="36" height="120" fill="#16171a"/><rect x="634.1" y="366" width="29" height="90" rx="7" fill="#ececec"/><rect x="642.1" y="386" width="13" height="54" rx="3" fill="#0c0c0e"/><circle cx="648.1" cy="360" r="11" fill="#ff8f9a"/><circle cx="648.1" cy="360" r="5" fill="#fff0f0"/><rect x="668.8" y="350" width="36" height="120" fill="#16171a"/><rect x="671.8" y="366" width="29" height="90" rx="7" fill="#ececec"/><rect x="679.8" y="386" width="13" height="54" rx="3" fill="#0c0c0e"/><circle cx="685.8" cy="362" r="7" fill="#b85a5a"/><rect x="706.5" y="350" width="36" height="120" fill="#16171a"/><rect x="709.5" y="366" width="29" height="90" rx="7" fill="#ececec"/><rect x="717.5" y="386" width="13" height="54" rx="3" fill="#0c0c0e"/><circle cx="723.5" cy="360" r="11" fill="#ff8f9a"/><circle cx="723.5" cy="360" r="5" fill="#fff0f0"/><rect x="744.2" y="350" width="36" height="120" fill="#16171a"/><rect x="747.2" y="366" width="29" height="90" rx="7" fill="#ececec"/><rect x="755.2" y="386" width="13" height="54" rx="3" fill="#0c0c0e"/><circle cx="761.2" cy="362" r="7" fill="#b85a5a"/><rect x="781.9" y="350" width="36" height="120" fill="#16171a"/><rect x="784.9" y="366" width="29" height="90" rx="7" fill="#ececec"/><rect x="792.9" y="386" width="13" height="54" rx="3" fill="#0c0c0e"/><circle cx="798.9" cy="360" r="11" fill="#ff8f9a"/><circle cx="798.9" cy="360" r="5" fill="#fff0f0"/><rect x="819.6" y="350" width="36" height="120" fill="#16171a"/><rect x="822.6" y="366" width="29" height="90" rx="7" fill="#ececec"/><rect x="830.6" y="386" width="13" height="54" rx="3" fill="#0c0c0e"/><circle cx="836.6" cy="362" r="7" fill="#b85a5a"/><rect x="857.3" y="350" width="36" height="120" fill="#16171a"/><rect x="860.3" y="366" width="29" height="90" rx="7" fill="#ececec"/><rect x="868.3" y="386" width="13" height="54" rx="3" fill="#0c0c0e"/><circle cx="874.3" cy="360" r="11" fill="#ff8f9a"/><circle cx="874.3" cy="360" r="5" fill="#fff0f0"/><rect x="516" y="468" width="385" height="30" fill="#2c4a84"/><circle cx="535.0" cy="484" r="5" fill="#8fa0a0"/><circle cx="572.7" cy="484" r="5" fill="#8fa0a0"/><circle cx="610.4" cy="484" r="5" fill="#8fa0a0"/><circle cx="648.1" cy="484" r="5" fill="#8fa0a0"/><circle cx="685.8" cy="484" r="5" fill="#8fa0a0"/><circle cx="723.5" cy="484" r="5" fill="#8fa0a0"/><circle cx="761.2" cy="484" r="5" fill="#8fa0a0"/><circle cx="798.9" cy="484" r="5" fill="#8fa0a0"/><circle cx="836.6" cy="484" r="5" fill="#8fa0a0"/><circle cx="874.3" cy="484" r="5" fill="#8fa0a0"/></g><g filter="url(#bb2)"><text x="390" y="274" font-size="44" font-weight="700" font-style="italic" fill="#f4f6fb" font-family="Liberation Sans,sans-serif" textLength="190" lengthAdjust="spacingAndGlyphs">DE10-Lite</text><text x="146" y="440" font-size="84" font-style="italic" font-weight="400" fill="#fae3bc" stroke="#e8a860" stroke-width="2.500" font-family="Liberation Sans,sans-serif" textLength="58" lengthAdjust="spacingAndGlyphs">d.</text><text x="208" y="440" font-size="84" font-style="italic" font-weight="400" fill="#fae3bc" stroke="#e8a860" stroke-width="2.500" font-family="Liberation Sans,sans-serif" textLength="58" lengthAdjust="spacingAndGlyphs">d.</text><text x="272" y="440" font-size="84" font-style="italic" font-weight="400" fill="#fae3bc" stroke="#e8a860" stroke-width="2.500" font-family="Liberation Sans,sans-serif" textLength="58" lengthAdjust="spacingAndGlyphs">d.</text><text x="333" y="440" font-size="84" font-style="italic" font-weight="400" fill="#fae3bc" stroke="#e8a860" stroke-width="2.500" font-family="Liberation Sans,sans-serif" textLength="58" lengthAdjust="spacingAndGlyphs">d.</text><text x="398" y="440" font-size="84" font-style="italic" font-weight="400" fill="#fae3bc" stroke="#e8a860" stroke-width="2.500" font-family="Liberation Sans,sans-serif" textLength="58" lengthAdjust="spacingAndGlyphs">d.</text><text x="458" y="440" font-size="84" font-style="italic" font-weight="400" fill="#fae3bc" stroke="#e8a860" stroke-width="2.500" font-family="Liberation Sans,sans-serif" textLength="58" lengthAdjust="spacingAndGlyphs">d.</text></g><rect x="0" y="608" width="1060" height="30" fill="#000"/><rect x="0" y="0" width="8" height="636" fill="#000"/></svg>
<div style="left:1075px;top:150.5px;width:1.6px;height:234px;background:#000;"></div>
</div></body></html>
